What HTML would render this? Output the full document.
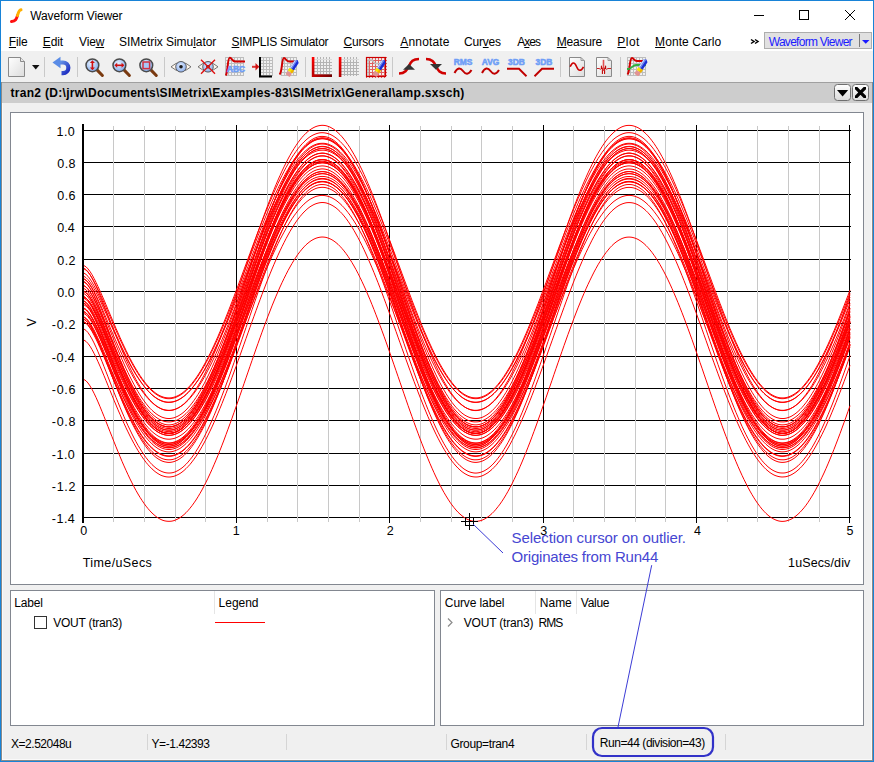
<!DOCTYPE html>
<html><head><meta charset="utf-8"><style>
html,body{margin:0;padding:0;}
body{width:874px;height:762px;position:relative;overflow:hidden;background:#f0f0f0;font-family:"Liberation Sans", sans-serif;color:#000;}
.abs{position:absolute;}
.t{position:absolute;white-space:pre;}
u{text-decoration:underline;text-underline-offset:1px;}
</style></head><body>
<div class="abs" style="left:0;top:0;width:874px;height:51px;background:#fff"></div>
<div class="abs" style="left:0;top:82px;width:874px;height:1px;background:#a0a0a0"></div>
<div class="abs" style="left:0;top:83px;width:874px;height:20px;background:#cdcdcd"></div>
<div class="abs" style="left:10px;top:112px;width:852px;height:471px;background:#fff;border:1px solid #828790"></div>
<div class="abs" style="left:10px;top:590px;width:423px;height:134px;background:#fff;border:1px solid #828790"></div>
<div class="abs" style="left:440px;top:590px;width:422px;height:134px;background:#fff;border:1px solid #828790"></div>
<svg class="abs" width="874" height="110" style="left:0;top:0"><defs>
<linearGradient id="gdoc" x1="0" y1="0" x2="1" y2="1"><stop offset="0" stop-color="#ffffff"/><stop offset="1" stop-color="#dcdcdc"/></linearGradient>
<linearGradient id="gundo" x1="0" y1="0" x2="1" y2="1"><stop offset="0" stop-color="#6a9ae8"/><stop offset="1" stop-color="#1a28c0"/></linearGradient>
<radialGradient id="giris" cx="0.45" cy="0.4" r="0.65"><stop offset="0" stop-color="#e4eeff"/><stop offset="1" stop-color="#86aaea"/></radialGradient>
<radialGradient id="glens" cx="0.4" cy="0.35" r="0.7"><stop offset="0" stop-color="#e8f2ff"/><stop offset="1" stop-color="#7ea8ea"/></radialGradient>
<linearGradient id="gbtn" x1="0" y1="0" x2="0" y2="1"><stop offset="0" stop-color="#ffffff"/><stop offset="1" stop-color="#dadada"/></linearGradient>
</defs><rect x="44" y="57" width="1" height="20" fill="#c9c9c9"/><rect x="77" y="57" width="1" height="20" fill="#c9c9c9"/><rect x="164" y="57" width="1" height="20" fill="#c9c9c9"/><rect x="305" y="57" width="1" height="20" fill="#c9c9c9"/><rect x="392" y="57" width="1" height="20" fill="#c9c9c9"/><rect x="560" y="57" width="1" height="20" fill="#c9c9c9"/><rect x="620" y="57" width="1" height="20" fill="#c9c9c9"/><path d="M8.5 57.5H20.5L24.5 61.5V76.5H8.5Z" fill="url(#gdoc)" stroke="#8a8a8a"/><path d="M20.5 57.5V61.5H24.5" fill="#e8e8e8" stroke="#8a8a8a"/><path d="M32 65H39.5L35.75 69.5Z" fill="#111"/><path d="M58.5 62.5H63A5.3 5.3 0 0 1 63 73.2H61.5" fill="none" stroke="url(#gundo)" stroke-width="4.2"/><path d="M52.5 62.5L60.5 56.8V68.2Z" fill="#5a8ce6"/><path d="M97.2 70.1L102.4 75.5" stroke="#7a3a10" stroke-width="3" stroke-linecap="round"/><circle cx="92.4" cy="65.3" r="6.4" fill="url(#glens)" stroke="#4a4a4a" stroke-width="1.5"/><path d="M92.4 62.3V68.3" stroke="#d01010" stroke-width="1.6"/><path d="M89.9 63.099999999999994L92.4 60.3L94.9 63.099999999999994Z M89.9 67.5L92.4 70.3L94.9 67.5Z" fill="#d01010"/><path d="M124.2 70.1L129.4 75.5" stroke="#7a3a10" stroke-width="3" stroke-linecap="round"/><circle cx="119.4" cy="65.3" r="6.4" fill="url(#glens)" stroke="#4a4a4a" stroke-width="1.5"/><path d="M116.4 65.3H122.4" stroke="#d01010" stroke-width="1.6"/><path d="M117.2 62.8L114.4 65.3L117.2 67.8Z M121.60000000000001 62.8L124.4 65.3L121.60000000000001 67.8Z" fill="#d01010"/><path d="M151.10000000000002 70.1L156.3 75.5" stroke="#7a3a10" stroke-width="3" stroke-linecap="round"/><circle cx="146.3" cy="65.3" r="6.4" fill="url(#glens)" stroke="#4a4a4a" stroke-width="1.5"/><rect x="143.0" y="62.0" width="6.6" height="6.6" fill="#a8c8f8" stroke="#d03040" stroke-width="1.5"/><path d="M171 66.8Q181 57.8 191 66.8Q181 75.8 171 66.8Z" fill="#fff6ec" stroke="#666" stroke-width="0.9"/><circle cx="181" cy="66.8" r="5.3" fill="url(#giris)" stroke="#505050" stroke-width="0.9"/><circle cx="181" cy="66.8" r="1.8" fill="#1a1a1a"/><path d="M198 66.8Q208 57.8 218 66.8Q208 75.8 198 66.8Z" fill="#fff6ec" stroke="#666" stroke-width="0.9"/><circle cx="208" cy="66.8" r="5.3" fill="url(#giris)" stroke="#505050" stroke-width="0.9"/><circle cx="208" cy="66.8" r="1.8" fill="#1a1a1a"/><path d="M201 59.8L215 73.8M215 59.8L201 73.8" stroke="#e01010" stroke-width="1.4"/><path d="M225.5 57V76M228.5 57V76M231.5 57V76M234.5 57V76M237.5 57V76M240.5 57V76M243.5 57V76M225 57.5H244M225 60.5H244M225 63.5H244M225 66.5H244M225 69.5H244M225 72.5H244M225 75.5H244" stroke="#bdbdbd" stroke-width="1" fill="none"/><path d="M225.8 75.5C228 72.5 227.3 58 229.8 57.8C231.8 57.6 232.2 61.5 235.2 61.5H245" fill="none" stroke="#d00000" stroke-width="2"/><text x="227" y="71.5" font-family="Liberation Sans" font-weight="bold" font-size="8.4" stroke="#6f9ef6" stroke-width="0.5" fill="#6f9ef6">ABC</text><path d="M260.5 57V76M263.5 57V76M266.5 57V76M269.5 57V76M272.5 57V76M260 57.5H273M260 60.5H273M260 63.5H273M260 66.5H273M260 69.5H273M260 72.5H273M260 75.5H273" stroke="#bdbdbd" stroke-width="1" fill="none"/><path d="M260 57V76.5H272" fill="none" stroke="#000" stroke-width="2"/><path d="M252 66.8H256" stroke="#d83030" stroke-width="2"/><path d="M255.5 63L259.3 66.8L255.5 70.6Z" fill="#d01010"/><path d="M281.5 57V76M284.5 57V76M287.5 57V76M290.5 57V76M293.5 57V76M296.5 57V76M281 57.5H297M281 60.5H297M281 63.5H297M281 66.5H297M281 69.5H297M281 72.5H297M281 75.5H297" stroke="#bdbdbd" stroke-width="1" fill="none"/><path d="M279.5 74.5C282.5 72 281.5 58 284 58C286 58 286 61.5 289 61.5H297" fill="none" stroke="#d00000" stroke-width="2"/><g transform="translate(292.2,68.5) rotate(-57)">
<path d="M-1 -2.4H8.2L10 0L8.2 2.4H-1Z" fill="#1c2fd6"/>
<path d="M-1 -2.4H8.2L9.2 -1H-1Z" fill="#c8d8ff"/>
<path d="M-1 -1H9.2L9.6 0H-1Z" fill="#7890f0"/>
<rect x="-4.2" y="-2.6" width="3.4" height="5.2" fill="#f6e800"/>
<rect x="-4.2" y="0.6" width="3.4" height="2" fill="#f0b000"/>
<rect x="-8.6" y="-2.6" width="4.4" height="5.2" rx="1" fill="#e09494"/>
</g><linearGradient id="gredh" x1="0" y1="0" x2="1" y2="0"><stop offset="0" stop-color="#cc0000"/><stop offset="1" stop-color="#700000"/></linearGradient><linearGradient id="gredv" x1="0" y1="0" x2="0" y2="1"><stop offset="0" stop-color="#ff0000"/><stop offset="1" stop-color="#b00000"/></linearGradient><path d="M317.5 57V76M320.5 57V76M323.5 57V76M326.5 57V76M329.5 57V76M314 62.5H332M314 65.5H332M314 68.5H332M314 71.5H332M314 74.5H332" stroke="#b4b4b4" stroke-width="1" fill="none"/><path d="M314 59.5H332" stroke="#dcdcdc" stroke-width="1" fill="none"/><rect x="311.8" y="57" width="2.6" height="20" fill="url(#gredv)"/><path d="M344.5 57V76M347.5 57V76M350.5 57V76M353.5 57V76M356.5 57V76M341 62.5H359M341 65.5H359M341 68.5H359M341 71.5H359M341 74.5H359" stroke="#b4b4b4" stroke-width="1" fill="none"/><path d="M341 59.5H359" stroke="#dcdcdc" stroke-width="1" fill="none"/><rect x="338.8" y="57" width="2.6" height="20" fill="url(#gredv)"/><rect x="312" y="74.4" width="20" height="2.6" fill="url(#gredh)"/><path d="M366.5 57V78M369.5 57V78M372.5 57V78M375.5 57V78M378.5 57V78M381.5 57V78M384.5 57V78M366 57.5H387M366 60.5H387M366 63.5H387M366 66.5H387M366 69.5H387M366 72.5H387M366 75.5H387" stroke="#e06060" stroke-width="1" fill="none"/><rect x="366.5" y="57.5" width="19" height="19" fill="none" stroke="#cc0000" stroke-width="1.2"/><path d="M368 76V60H372L375 63.5H384" fill="none" stroke="#c0c0c0" stroke-width="1.5"/><g transform="translate(379.2,68.5) rotate(-57)">
<path d="M-1 -2.4H8.2L10 0L8.2 2.4H-1Z" fill="#1c2fd6"/>
<path d="M-1 -2.4H8.2L9.2 -1H-1Z" fill="#c8d8ff"/>
<path d="M-1 -1H9.2L9.6 0H-1Z" fill="#7890f0"/>
<rect x="-4.2" y="-2.6" width="3.4" height="5.2" fill="#f6e800"/>
<rect x="-4.2" y="0.6" width="3.4" height="2" fill="#f0b000"/>
<rect x="-8.6" y="-2.6" width="4.4" height="5.2" rx="1" fill="#e09494"/>
</g><path d="M399 73.5C405 73.5 407 70 409 66C411 61.5 413 59 419 59" fill="none" stroke="#d00000" stroke-width="2.6"/><path d="M403 69.8L409 64L415 69.8Z" fill="#333"/><path d="M426 59C432 59 434 62 436 66C438 70.5 440 73.5 446 73.5" fill="none" stroke="#d00000" stroke-width="2.6"/><path d="M430 64H442L436 69.8Z" fill="#333"/><text x="463.0" y="64.6" text-anchor="middle" font-family="Liberation Sans" font-weight="bold" font-size="8.4" letter-spacing="0" stroke="#6f9ef6" stroke-width="0.55" fill="#6f9ef6">RMS</text><path d="M454.5 73C457.5 67 460.5 67.5 463.0 71C465.5 74.5 468.5 75 471.5 70" fill="none" stroke="#c00000" stroke-width="2"/><text x="490.5" y="64.6" text-anchor="middle" font-family="Liberation Sans" font-weight="bold" font-size="8.4" letter-spacing="0" stroke="#6f9ef6" stroke-width="0.55" fill="#6f9ef6">AVG</text><path d="M482 73C485 67 488 67.5 490.5 71C493 74.5 496 75 499 70" fill="none" stroke="#c00000" stroke-width="2"/><text x="516.5" y="64.6" text-anchor="middle" font-family="Liberation Sans" font-weight="bold" font-size="8.4" letter-spacing="0" stroke="#6f9ef6" stroke-width="0.55" fill="#6f9ef6">3DB</text><path d="M507 68.8H519L526.5 76.2" fill="none" stroke="#c00000" stroke-width="1.9"/><text x="544" y="64.6" text-anchor="middle" font-family="Liberation Sans" font-weight="bold" font-size="8.4" letter-spacing="0" stroke="#6f9ef6" stroke-width="0.55" fill="#6f9ef6">3DB</text><path d="M534.5 76.2L542 68.8H554" fill="none" stroke="#c00000" stroke-width="1.9"/><path d="M569.5 57.5H581L584.5 61V76.5H569.5Z" fill="url(#gdoc)" stroke="#8a8a8a"/><path d="M581 57.5V60.5H584.5" fill="none" stroke="#9a9a9a" stroke-width="1"/><path d="M570.2 66.8C572 62 574.5 61.5 576.5 66.5C578.5 71.5 581 71.5 583.5 66.8" fill="none" stroke="#cc0000" stroke-width="1.6"/><path d="M596.5 57.5H608L611.5 61V76.5H596.5Z" fill="url(#gdoc)" stroke="#8a8a8a"/><path d="M608 57.5V60.5H611.5" fill="none" stroke="#9a9a9a" stroke-width="1"/><path d="M597 68.5H599.5Q600.3 70.5 601 68.5M606 68.5Q606.7 70.5 607.5 68.5H611" fill="none" stroke="#cc2020" stroke-width="1"/><path d="M601.4 68.5V66M605.6 68.5V66M602.4 68V73.5M604.6 68V73.5" fill="none" stroke="#c00000" stroke-width="1.1" stroke-linecap="round"/><path d="M603.5 59.8V71" fill="none" stroke="#e05050" stroke-width="1.6"/><path d="M627.5 57V76M630.5 57V76M633.5 57V76M636.5 57V76M639.5 57V76M642.5 57V76M645.5 57V76M627 57.5H646M627 60.5H646M627 63.5H646M627 66.5H646M627 69.5H646M627 72.5H646M627 75.5H646" stroke="#bdbdbd" stroke-width="1" fill="none"/><path d="M627.5 74.5C630 71 629.5 58 632 58C634 58 634 61 637 61H646" fill="none" stroke="#d00000" stroke-width="2"/><path d="M627 69H628.5C631.5 69 632.5 65 636 65H646" fill="none" stroke="#30b040" stroke-width="1.8"/><g transform="translate(641,67.8) rotate(-57)">
<path d="M-1 -2.4H8.2L10 0L8.2 2.4H-1Z" fill="#1c2fd6"/>
<path d="M-1 -2.4H8.2L9.2 -1H-1Z" fill="#c8d8ff"/>
<path d="M-1 -1H9.2L9.6 0H-1Z" fill="#7890f0"/>
<rect x="-4.2" y="-2.6" width="3.4" height="5.2" fill="#f6e800"/>
<rect x="-4.2" y="0.6" width="3.4" height="2" fill="#f0b000"/>
<rect x="-8.6" y="-2.6" width="4.4" height="5.2" rx="1" fill="#e09494"/>
</g><path d="M11.5 21.5C16 21 16.5 18.5 17.5 15.5" fill="none" stroke="#ff1010" stroke-width="3" stroke-linecap="round"/><path d="M17.5 15.5C18.5 12 19 10 21 9.8" fill="none" stroke="#ffb000" stroke-width="3" stroke-linecap="round"/><rect x="754" y="15" width="10" height="1" fill="#000"/><rect x="799.5" y="10.5" width="9" height="9" fill="none" stroke="#000" stroke-width="1"/><path d="M845 10L855 20M855 10L845 20" stroke="#000" stroke-width="1"/><path d="M751 39.5L754 41.5L751 43.5M755 39.5L758 41.5L755 43.5" fill="none" stroke="#000" stroke-width="1.5"/><rect x="764.5" y="32.5" width="107" height="16" fill="#e1e1e1" stroke="#adadad"/><rect x="859" y="34" width="1" height="13" fill="#7a7a7a"/><path d="M862 40H869.5L865.75 43.8Z" fill="#1a1aff"/><rect x="834.5" y="84.5" width="16" height="16" rx="3" fill="url(#gbtn)" stroke="#6f6f6f"/><path d="M837 90H848.2L842.6 96.6Z" fill="#000"/><rect x="852.5" y="84.5" width="16" height="16" rx="3" fill="url(#gbtn)" stroke="#6f6f6f"/><clipPath id="cx"><rect x="855" y="87" width="11" height="11"/></clipPath><path clip-path="url(#cx)" d="M854 86L867 99M867 86L854 99" stroke="#000" stroke-width="3.3"/></svg>

<div class="abs" style="left:214px;top:591px;width:1px;height:23px;background:#e5e5e5"></div>
<div class="abs" style="left:215px;top:622px;width:50px;height:1px;background:#ff0000"></div>
<div class="abs" style="left:34px;top:616px;width:11px;height:11px;border:1px solid #333;background:#fff"></div>
<div class="abs" style="left:535px;top:591px;width:1px;height:23px;background:#e5e5e5"></div>
<div class="abs" style="left:576px;top:591px;width:1px;height:23px;background:#e5e5e5"></div>
<svg class="abs" width="10" height="12" style="left:446px;top:617px"><path d="M2 1.5L6 5.5L2 9.5" fill="none" stroke="#8a8a8a" stroke-width="1.2"/></svg>
<div class="abs" style="left:147px;top:734px;width:1px;height:16px;background:#d5d5d5"></div><div class="abs" style="left:286px;top:734px;width:1px;height:16px;background:#d5d5d5"></div><div class="abs" style="left:446px;top:734px;width:1px;height:16px;background:#d5d5d5"></div><div class="abs" style="left:586px;top:734px;width:1px;height:16px;background:#d5d5d5"></div><div class="abs" style="left:725px;top:734px;width:1px;height:16px;background:#d5d5d5"></div>
<svg class="abs" width="874" height="762" viewBox="0 0 874 762" style="left:0;top:0">
<rect x="84" y="130" width="767" height="1" fill="#000"/><rect x="84" y="162" width="767" height="1" fill="#000"/><rect x="84" y="194" width="767" height="1" fill="#000"/><rect x="84" y="226" width="767" height="1" fill="#000"/><rect x="84" y="259" width="767" height="1" fill="#000"/><rect x="84" y="291" width="767" height="1" fill="#000"/><rect x="84" y="323" width="767" height="1" fill="#000"/><rect x="84" y="356" width="767" height="1" fill="#000"/><rect x="84" y="388" width="767" height="1" fill="#000"/><rect x="84" y="420" width="767" height="1" fill="#000"/><rect x="84" y="453" width="767" height="1" fill="#000"/><rect x="84" y="485" width="767" height="1" fill="#000"/><rect x="84" y="517" width="767" height="1" fill="#000"/><rect x="113" y="126" width="1" height="396" fill="#c8c8c8"/><rect x="144" y="126" width="1" height="396" fill="#c8c8c8"/><rect x="175" y="126" width="1" height="396" fill="#c8c8c8"/><rect x="205" y="126" width="1" height="396" fill="#c8c8c8"/><rect x="267" y="126" width="1" height="396" fill="#c8c8c8"/><rect x="297" y="126" width="1" height="396" fill="#c8c8c8"/><rect x="328" y="126" width="1" height="396" fill="#c8c8c8"/><rect x="359" y="126" width="1" height="396" fill="#c8c8c8"/><rect x="420" y="126" width="1" height="396" fill="#c8c8c8"/><rect x="451" y="126" width="1" height="396" fill="#c8c8c8"/><rect x="481" y="126" width="1" height="396" fill="#c8c8c8"/><rect x="512" y="126" width="1" height="396" fill="#c8c8c8"/><rect x="573" y="126" width="1" height="396" fill="#c8c8c8"/><rect x="604" y="126" width="1" height="396" fill="#c8c8c8"/><rect x="635" y="126" width="1" height="396" fill="#c8c8c8"/><rect x="665" y="126" width="1" height="396" fill="#c8c8c8"/><rect x="727" y="126" width="1" height="396" fill="#c8c8c8"/><rect x="757" y="126" width="1" height="396" fill="#c8c8c8"/><rect x="788" y="126" width="1" height="396" fill="#c8c8c8"/><rect x="819" y="126" width="1" height="396" fill="#c8c8c8"/><rect x="236" y="125" width="1" height="398" fill="#000"/><rect x="389" y="125" width="1" height="398" fill="#000"/><rect x="543" y="125" width="1" height="398" fill="#000"/><rect x="696" y="125" width="1" height="398" fill="#000"/><rect x="849" y="125" width="1" height="398" fill="#000"/>
<rect x="82" y="124" width="2" height="399" fill="#000"/>
<g fill="none" stroke="#ff0000" stroke-width="1"><path d="M84,265.6 86,266.8 88,268.9 90,271.5 92,274.7 94,278.3 96,282.3 98,286.5 100,290.9 102,295.4 104,300.0 106,304.7 108,309.5 110,314.2 112,319.0 114,323.7 116,328.4 118,332.9 120,337.4 122,341.9 124,346.1 126,350.3 128,354.4 130,358.3 132,362.1 134,365.7 136,369.1 138,372.4 140,375.5 142,378.4 144,381.1 146,383.7 148,386.0 150,388.2 152,390.1 154,391.8 156,393.4 158,394.7 160,395.8 162,396.6 164,397.3 166,397.7 168,397.9 170,397.9 172,397.7 174,397.2 176,396.5 178,395.6 180,394.5 182,393.2 184,391.6 186,389.8 188,387.9 190,385.7 192,383.3 194,380.7 196,378.0 198,375.0 200,371.9 202,368.5 204,365.0 206,361.4 208,357.6 210,353.6 212,349.5 214,345.2 216,340.8 218,336.3 220,331.6 222,326.8 224,322.0 226,317.0 228,312.0 230,306.9 232,301.7 234,296.4 236,291.1 238,285.8 240,280.4 242,275.0 244,269.5 246,264.1 248,258.7 250,253.3 252,247.9 254,242.5 256,237.2 258,231.9 260,226.7 262,221.5 264,216.4 266,211.4 268,206.5 270,201.7 272,197.0 274,192.4 276,187.9 278,183.5 280,179.3 282,175.3 284,171.4 286,167.6 288,164.0 290,160.6 292,157.3 294,154.3 296,151.4 298,148.7 300,146.2 302,143.9 304,141.9 306,140.0 308,138.3 310,136.8 312,135.6 314,134.6 316,133.8 318,133.2 320,132.8 322,132.7 324,132.8 326,133.1 328,133.6 330,134.3 332,135.3 334,136.5 336,137.9 338,139.5 340,141.3 342,143.4 344,145.6 346,148.0 348,150.7 350,153.5 352,156.5 354,159.7 356,163.1 358,166.6 360,170.4 362,174.2 364,178.2 366,182.4 368,186.7 370,191.2 372,195.7 374,200.4 376,205.2 378,210.1 380,215.1 382,220.1 384,225.3 386,230.5 388,235.8 390,241.1 392,246.5 394,251.8 396,257.3 398,262.7 400,268.1 402,273.5 404,279.0 406,284.3 408,289.7 410,295.0 412,300.3 414,305.5 416,310.6 418,315.7 420,320.7 422,325.6 424,330.4 426,335.0 428,339.6 430,344.0 432,348.3 434,352.5 436,356.5 438,360.4 440,364.1 442,367.6 444,371.0 446,374.2 448,377.2 450,380.0 452,382.7 454,385.1 456,387.3 458,389.3 460,391.2 462,392.8 464,394.2 466,395.3 468,396.3 470,397.0 472,397.6 474,397.8 476,397.9 478,397.8 480,397.4 482,396.8 484,396.0 486,395.0 488,393.7 490,392.2 492,390.6 494,388.7 496,386.6 498,384.3 500,381.8 502,379.1 504,376.2 506,373.1 508,369.9 510,366.5 512,362.9 514,359.1 516,355.2 518,351.1 520,346.9 522,342.6 524,338.1 526,333.5 528,328.8 530,323.9 532,319.0 534,314.0 536,308.9 538,303.8 540,298.5 542,293.2 544,287.9 546,282.5 548,277.1 550,271.7 552,266.3 554,260.9 556,255.4 558,250.0 560,244.6 562,239.3 564,234.0 566,228.7 568,223.6 570,218.4 572,213.4 574,208.4 576,203.6 578,198.8 580,194.2 582,189.7 584,185.3 586,181.0 588,176.9 590,172.9 592,169.1 594,165.4 596,161.9 598,158.6 600,155.5 602,152.5 604,149.8 606,147.2 608,144.8 610,142.7 612,140.7 614,138.9 616,137.4 618,136.1 620,135.0 622,134.1 624,133.4 626,132.9 628,132.7 630,132.7 632,132.9 634,133.4 636,134.0 638,134.9 640,136.0 642,137.3 644,138.8 646,140.6 648,142.5 650,144.7 652,147.0 654,149.6 656,152.4 658,155.3 660,158.4 662,161.7 664,165.2 666,168.8 668,172.7 670,176.6 672,180.7 674,185.0 676,189.4 678,193.9 680,198.5 682,203.3 684,208.1 686,213.1 688,218.1 690,223.2 692,228.4 694,233.7 696,239.0 698,244.3 700,249.7 702,255.1 704,260.5 706,265.9 708,271.4 710,276.8 712,282.2 714,287.6 716,292.9 718,298.2 720,303.4 722,308.6 724,313.7 726,318.7 728,323.6 730,328.5 732,333.2 734,337.8 736,342.3 738,346.6 740,350.9 742,354.9 744,358.9 746,362.6 748,366.2 750,369.7 752,372.9 754,376.0 756,378.9 758,381.6 760,384.1 762,386.4 764,388.6 766,390.5 768,392.1 770,393.6 772,394.9 774,395.9 776,396.8 778,397.4 780,397.8 782,397.9 784,397.9 786,397.6 788,397.1 790,396.3 792,395.4 794,394.2 796,392.9 798,391.3 800,389.5 802,387.5 804,385.2 806,382.8 808,380.2 810,377.4 812,374.4 814,371.2 816,367.9 818,364.3 820,360.6 822,356.8 824,352.8 826,348.6 828,344.3 830,339.9 832,335.3 834,330.7 836,325.9 838,321.0 840,316.0 842,311.0 844,305.8 846,300.6 848,295.4 850,290.0"/><path d="M84,268.3 86,269.6 88,271.8 90,274.7 92,278.1 94,282.0 96,286.2 98,290.7 100,295.4 102,300.3 104,305.3 106,310.4 108,315.5 110,320.6 112,325.7 114,330.7 116,335.7 118,340.7 120,345.5 122,350.3 124,354.9 126,359.4 128,363.7 130,367.9 132,372.0 134,375.9 136,379.6 138,383.1 140,386.4 142,389.6 144,392.5 146,395.3 148,397.8 150,400.1 152,402.2 154,404.0 156,405.7 158,407.1 160,408.2 162,409.2 164,409.9 166,410.3 168,410.5 170,410.5 172,410.3 174,409.8 176,409.0 178,408.1 180,406.9 182,405.4 184,403.8 186,401.9 188,399.7 190,397.4 192,394.8 194,392.1 196,389.1 198,385.9 200,382.5 202,379.0 204,375.2 206,371.3 208,367.2 210,362.9 212,358.4 214,353.8 216,349.1 218,344.2 220,339.2 222,334.1 224,328.9 226,323.6 228,318.1 230,312.6 232,307.1 234,301.4 236,295.7 238,290.0 240,284.2 242,278.3 244,272.5 246,266.7 248,260.8 250,255.0 252,249.2 254,243.4 256,237.7 258,232.0 260,226.4 262,220.8 264,215.4 266,210.0 268,204.7 270,199.5 272,194.5 274,189.5 276,184.7 278,180.0 280,175.5 282,171.1 284,166.9 286,162.9 288,159.0 290,155.3 292,151.9 294,148.6 296,145.5 298,142.6 300,139.9 302,137.4 304,135.2 306,133.2 308,131.4 310,129.8 312,128.5 314,127.4 316,126.5 318,125.9 320,125.5 322,125.3 324,125.4 326,125.7 328,126.3 330,127.1 332,128.2 334,129.4 336,130.9 338,132.7 340,134.6 342,136.8 344,139.2 346,141.9 348,144.7 350,147.7 352,151.0 354,154.4 356,158.0 358,161.9 360,165.8 362,170.0 364,174.3 366,178.8 368,183.4 370,188.2 372,193.1 374,198.2 376,203.3 378,208.6 380,213.9 382,219.4 384,224.9 386,230.5 388,236.2 390,241.9 392,247.7 394,253.5 396,259.3 398,265.1 400,271.0 402,276.8 404,282.6 406,288.4 408,294.2 410,299.9 412,305.6 414,311.2 416,316.7 418,322.1 420,327.5 422,332.8 424,337.9 426,342.9 428,347.8 430,352.6 432,357.2 434,361.7 436,366.0 438,370.2 440,374.2 442,378.0 444,381.6 446,385.0 448,388.3 450,391.3 452,394.1 454,396.8 456,399.2 458,401.3 460,403.3 462,405.0 464,406.5 466,407.8 468,408.8 470,409.6 472,410.2 474,410.5 476,410.6 478,410.4 480,410.0 482,409.4 484,408.5 486,407.4 488,406.0 490,404.5 492,402.7 494,400.6 496,398.4 498,395.9 500,393.2 502,390.3 504,387.2 506,383.9 508,380.4 510,376.7 512,372.9 514,368.8 516,364.6 518,360.2 520,355.7 522,351.0 524,346.2 526,341.3 528,336.2 530,331.0 532,325.7 534,320.3 536,314.9 538,309.3 540,303.7 542,298.0 544,292.3 546,286.5 548,280.7 550,274.8 552,269.0 554,263.2 556,257.3 558,251.5 560,245.7 562,240.0 564,234.3 566,228.6 568,223.1 570,217.5 572,212.1 574,206.8 576,201.6 578,196.5 580,191.5 582,186.6 584,181.9 586,177.3 588,172.9 590,168.6 592,164.5 594,160.5 596,156.8 598,153.2 600,149.9 602,146.7 604,143.7 606,140.9 608,138.4 610,136.1 612,134.0 614,132.1 616,130.4 618,129.0 620,127.8 622,126.8 624,126.1 626,125.6 628,125.4 630,125.4 632,125.6 634,126.1 636,126.8 638,127.7 640,128.9 642,130.3 644,132.0 646,133.8 648,135.9 650,138.2 652,140.8 654,143.5 656,146.5 658,149.6 660,153.0 662,156.6 664,160.3 666,164.2 668,168.3 670,172.6 672,177.0 674,181.6 676,186.3 678,191.2 680,196.1 682,201.2 684,206.5 686,211.8 688,217.2 690,222.7 692,228.3 694,233.9 696,239.6 698,245.4 700,251.1 702,257.0 704,262.8 706,268.6 708,274.5 710,280.3 712,286.1 714,291.9 716,297.6 718,303.3 720,308.9 722,314.5 724,320.0 726,325.4 728,330.7 730,335.9 732,340.9 734,345.9 736,350.7 738,355.4 740,359.9 742,364.3 744,368.6 746,372.6 748,376.5 750,380.2 752,383.7 754,387.0 756,390.1 758,393.0 760,395.7 762,398.2 764,400.5 766,402.5 768,404.3 770,405.9 772,407.3 774,408.4 776,409.3 778,410.0 780,410.4 782,410.6 784,410.5 786,410.2 788,409.6 790,408.9 792,407.8 794,406.6 796,405.1 798,403.4 800,401.5 802,399.3 804,396.9 806,394.3 808,391.5 810,388.5 812,385.3 814,381.8 816,378.2 818,374.4 820,370.5 822,366.3 824,362.0 826,357.5 828,352.9 830,348.2 832,343.3 834,338.2 836,333.1 838,327.8 840,322.5 842,317.1 844,311.5 846,305.9 848,300.3 850,294.6"/><path d="M84,268.9 86,270.1 88,272.1 90,274.7 92,277.9 94,281.4 96,285.3 98,289.4 100,293.7 102,298.1 104,302.7 106,307.3 108,312.0 110,316.6 112,321.3 114,325.9 116,330.5 118,334.9 120,339.4 122,343.7 124,347.9 126,352.0 128,356.0 130,359.8 132,363.5 134,367.0 136,370.4 138,373.6 140,376.7 142,379.5 144,382.2 146,384.7 148,387.0 150,389.1 152,391.0 154,392.7 156,394.2 158,395.5 160,396.6 162,397.4 164,398.0 166,398.5 168,398.7 170,398.7 172,398.4 174,398.0 176,397.3 178,396.4 180,395.3 182,394.0 184,392.5 186,390.8 188,388.8 190,386.7 192,384.4 194,381.8 196,379.1 198,376.2 200,373.1 202,369.9 204,366.4 206,362.8 208,359.1 210,355.2 212,351.1 214,347.0 216,342.6 218,338.2 220,333.6 222,329.0 224,324.2 226,319.3 228,314.4 230,309.4 232,304.3 234,299.1 236,293.9 238,288.7 240,283.4 242,278.1 244,272.8 246,267.5 248,262.1 250,256.8 252,251.5 254,246.3 256,241.0 258,235.8 260,230.7 262,225.7 264,220.7 266,215.8 268,210.9 270,206.2 272,201.6 274,197.1 276,192.7 278,188.4 280,184.3 282,180.3 284,176.5 286,172.8 288,169.3 290,165.9 292,162.7 294,159.7 296,156.9 298,154.3 300,151.8 302,149.6 304,147.5 306,145.7 308,144.1 310,142.6 312,141.4 314,140.4 316,139.6 318,139.0 320,138.7 322,138.5 324,138.6 326,138.9 328,139.4 330,140.2 332,141.1 334,142.3 336,143.7 338,145.2 340,147.0 342,149.0 344,151.2 346,153.6 348,156.2 350,159.0 352,161.9 354,165.1 356,168.4 358,171.9 360,175.5 362,179.3 364,183.2 366,187.3 368,191.6 370,195.9 372,200.4 374,205.0 376,209.7 378,214.5 380,219.4 382,224.3 384,229.4 386,234.5 388,239.7 390,244.9 392,250.1 394,255.4 396,260.7 398,266.0 400,271.4 402,276.7 404,282.0 406,287.3 408,292.5 410,297.8 412,302.9 414,308.0 416,313.1 418,318.0 420,322.9 422,327.7 424,332.4 426,337.0 428,341.5 430,345.8 432,350.1 434,354.1 436,358.1 438,361.9 440,365.5 442,369.0 444,372.3 446,375.4 448,378.4 450,381.1 452,383.7 454,386.1 456,388.3 458,390.3 460,392.0 462,393.6 464,395.0 466,396.1 468,397.1 470,397.8 472,398.3 474,398.6 476,398.7 478,398.5 480,398.2 482,397.6 484,396.8 486,395.8 488,394.6 490,393.1 492,391.5 494,389.6 496,387.6 498,385.3 500,382.9 502,380.2 504,377.4 506,374.4 508,371.2 510,367.8 512,364.3 514,360.6 516,356.8 518,352.8 520,348.7 522,344.4 524,340.0 526,335.5 528,330.9 530,326.1 532,321.3 534,316.4 536,311.4 538,306.3 540,301.2 542,296.0 544,290.8 546,285.5 548,280.2 550,274.9 552,269.6 554,264.3 556,258.9 558,253.6 560,248.4 562,243.1 564,237.9 566,232.8 568,227.7 570,222.7 572,217.7 574,212.8 576,208.1 578,203.4 580,198.9 582,194.4 584,190.1 586,185.9 588,181.9 590,178.0 592,174.3 594,170.7 596,167.2 598,164.0 600,160.9 602,158.0 604,155.3 606,152.8 608,150.5 610,148.3 612,146.4 614,144.7 616,143.2 618,141.9 620,140.8 622,139.9 624,139.2 626,138.8 628,138.6 630,138.6 632,138.8 634,139.2 636,139.9 638,140.7 640,141.8 642,143.1 644,144.6 646,146.3 648,148.2 650,150.3 652,152.6 654,155.1 656,157.8 658,160.7 660,163.8 662,167.0 664,170.4 666,174.0 668,177.8 670,181.6 672,185.7 674,189.8 676,194.1 678,198.6 680,203.1 682,207.8 684,212.5 686,217.4 688,222.3 690,227.3 692,232.4 694,237.6 696,242.8 698,248.0 700,253.3 702,258.6 704,263.9 706,269.2 708,274.6 710,279.9 712,285.2 714,290.4 716,295.7 718,300.9 720,306.0 722,311.1 724,316.1 726,321.0 728,325.8 730,330.6 732,335.2 734,339.7 736,344.1 738,348.4 740,352.5 742,356.5 744,360.4 746,364.1 748,367.6 750,371.0 752,374.2 754,377.2 756,380.0 758,382.7 760,385.2 762,387.4 764,389.5 766,391.4 768,393.0 770,394.5 772,395.7 774,396.7 776,397.5 778,398.1 780,398.5 782,398.7 784,398.6 786,398.3 788,397.8 790,397.1 792,396.2 794,395.1 796,393.7 798,392.2 800,390.4 802,388.4 804,386.2 806,383.9 808,381.3 810,378.5 812,375.6 814,372.5 816,369.2 818,365.7 820,362.1 822,358.3 824,354.4 826,350.3 828,346.1 830,341.8 832,337.3 834,332.7 836,328.0 838,323.2 840,318.4 842,313.4 844,308.4 846,303.3 848,298.1 850,292.9"/><path d="M84,273.1 86,274.4 88,276.3 90,279.0 92,282.1 94,285.6 96,289.4 98,293.5 100,297.8 102,302.3 104,306.8 106,311.4 108,316.0 110,320.7 112,325.3 114,329.9 116,334.5 118,338.9 120,343.3 122,347.7 124,351.9 126,355.9 128,359.9 130,363.7 132,367.4 134,370.9 136,374.3 138,377.5 140,380.5 142,383.4 144,386.1 146,388.5 148,390.8 150,392.9 152,394.8 154,396.5 156,398.0 158,399.3 160,400.3 162,401.2 164,401.8 166,402.2 168,402.4 170,402.4 172,402.2 174,401.7 176,401.1 178,400.2 180,399.1 182,397.8 184,396.3 186,394.6 188,392.6 190,390.5 192,388.2 194,385.7 196,382.9 198,380.1 200,377.0 202,373.7 204,370.3 206,366.7 208,363.0 210,359.1 212,355.1 214,350.9 216,346.6 218,342.2 220,337.6 222,333.0 224,328.2 226,323.4 228,318.5 230,313.5 232,308.4 234,303.3 236,298.1 238,292.8 240,287.6 242,282.3 244,277.0 246,271.7 248,266.4 250,261.1 252,255.8 254,250.6 256,245.4 258,240.2 260,235.1 262,230.0 264,225.1 266,220.2 268,215.4 270,210.7 272,206.1 274,201.6 276,197.2 278,193.0 280,188.8 282,184.9 284,181.1 286,177.4 288,173.9 290,170.5 292,167.4 294,164.4 296,161.6 298,158.9 300,156.5 302,154.3 304,152.2 306,150.4 308,148.7 310,147.3 312,146.1 314,145.1 316,144.3 318,143.7 320,143.4 322,143.3 324,143.3 326,143.6 328,144.1 330,144.9 332,145.8 334,147.0 336,148.3 338,149.9 340,151.7 342,153.7 344,155.9 346,158.3 348,160.8 350,163.6 352,166.6 354,169.7 356,173.0 358,176.4 360,180.1 362,183.9 364,187.8 366,191.9 368,196.1 370,200.4 372,204.9 374,209.4 376,214.1 378,218.9 380,223.8 382,228.7 384,233.8 386,238.8 388,244.0 390,249.2 392,254.4 394,259.7 396,265.0 398,270.3 400,275.6 402,280.9 404,286.2 406,291.5 408,296.7 410,301.9 412,307.0 414,312.1 416,317.2 418,322.1 420,327.0 422,331.8 424,336.4 426,341.0 428,345.5 430,349.8 432,354.0 434,358.1 436,362.0 438,365.8 440,369.4 442,372.9 444,376.1 446,379.3 448,382.2 450,385.0 452,387.5 454,389.9 456,392.1 458,394.1 460,395.8 462,397.4 464,398.8 466,399.9 468,400.9 470,401.6 472,402.1 474,402.4 476,402.4 478,402.3 480,401.9 482,401.4 484,400.6 486,399.6 488,398.3 490,396.9 492,395.3 494,393.4 496,391.4 498,389.1 500,386.7 502,384.1 504,381.2 506,378.2 508,375.1 510,371.7 512,368.2 514,364.5 516,360.7 518,356.7 520,352.6 522,348.3 524,344.0 526,339.5 528,334.9 530,330.2 532,325.3 534,320.5 536,315.5 538,310.4 540,305.3 542,300.2 544,294.9 546,289.7 548,284.4 550,279.1 552,273.8 554,268.5 556,263.2 558,257.9 560,252.7 562,247.4 564,242.3 566,237.1 568,232.1 570,227.1 572,222.1 574,217.3 576,212.5 578,207.9 580,203.4 582,198.9 584,194.6 586,190.5 588,186.4 590,182.6 592,178.8 594,175.3 596,171.8 598,168.6 600,165.5 602,162.7 604,160.0 606,157.4 608,155.1 610,153.0 612,151.1 614,149.4 616,147.9 618,146.6 620,145.5 622,144.6 624,144.0 626,143.5 628,143.3 630,143.3 632,143.5 634,143.9 636,144.6 638,145.4 640,146.5 642,147.8 644,149.3 646,151.0 648,152.9 650,155.0 652,157.3 654,159.8 656,162.5 658,165.4 660,168.4 662,171.6 664,175.0 666,178.6 668,182.3 670,186.2 672,190.2 674,194.4 676,198.7 678,203.1 680,207.6 682,212.2 684,217.0 686,221.8 688,226.7 690,231.7 692,236.8 694,241.9 696,247.1 698,252.3 700,257.6 702,262.9 704,268.2 706,273.5 708,278.8 710,284.1 712,289.4 714,294.6 716,299.8 718,305.0 720,310.1 722,315.2 724,320.1 726,325.0 728,329.9 730,334.6 732,339.2 734,343.7 736,348.1 738,352.3 740,356.5 742,360.4 744,364.3 746,368.0 748,371.5 750,374.8 752,378.0 754,381.0 756,383.9 758,386.5 760,389.0 762,391.2 764,393.3 766,395.2 768,396.8 770,398.3 772,399.5 774,400.5 776,401.3 778,401.9 780,402.3 782,402.4 784,402.4 786,402.1 788,401.6 790,400.9 792,400.0 794,398.9 796,397.5 798,395.9 800,394.2 802,392.2 804,390.0 806,387.7 808,385.1 810,382.4 812,379.5 814,376.3 816,373.1 818,369.6 820,366.0 822,362.2 824,358.3 826,354.3 828,350.1 830,345.7 832,341.3 834,336.7 836,332.1 838,327.3 840,322.4 842,317.5 844,312.5 846,307.4 848,302.2 850,297.0"/><path d="M84,276.4 86,277.6 88,279.6 90,282.1 92,285.1 94,288.6 96,292.3 98,296.3 100,300.4 102,304.8 104,309.2 106,313.6 108,318.1 110,322.7 112,327.2 114,331.6 116,336.1 118,340.4 120,344.7 122,348.9 124,353.0 126,356.9 128,360.8 130,364.5 132,368.1 134,371.5 136,374.8 138,377.9 140,380.9 142,383.6 144,386.2 146,388.6 148,390.9 150,392.9 152,394.8 154,396.4 156,397.8 158,399.1 160,400.1 162,400.9 164,401.6 166,402.0 168,402.2 170,402.1 172,401.9 174,401.5 176,400.8 178,400.0 180,398.9 182,397.6 184,396.2 186,394.5 188,392.6 190,390.5 192,388.3 194,385.8 196,383.2 198,380.4 200,377.4 202,374.3 204,370.9 206,367.5 208,363.8 210,360.0 212,356.1 214,352.1 216,347.9 218,343.6 220,339.2 222,334.6 224,330.0 226,325.3 228,320.5 230,315.7 232,310.7 234,305.7 236,300.7 238,295.6 240,290.5 242,285.4 244,280.2 246,275.0 248,269.9 250,264.7 252,259.6 254,254.5 256,249.4 258,244.4 260,239.4 262,234.5 264,229.7 266,225.0 268,220.3 270,215.7 272,211.2 274,206.9 276,202.6 278,198.5 280,194.5 282,190.6 284,186.9 286,183.3 288,179.9 290,176.7 292,173.6 294,170.7 296,167.9 298,165.4 300,163.0 302,160.8 304,158.9 306,157.1 308,155.5 310,154.1 312,152.9 314,152.0 316,151.2 318,150.6 320,150.3 322,150.2 324,150.2 326,150.5 328,151.0 330,151.7 332,152.6 334,153.8 336,155.1 338,156.6 340,158.4 342,160.3 344,162.4 346,164.7 348,167.3 350,169.9 352,172.8 354,175.8 356,179.1 358,182.4 360,185.9 362,189.6 364,193.4 366,197.4 368,201.5 370,205.7 372,210.1 374,214.5 376,219.1 378,223.7 380,228.4 382,233.3 384,238.1 386,243.1 388,248.1 390,253.2 392,258.3 394,263.4 396,268.5 398,273.7 400,278.8 402,284.0 404,289.1 406,294.3 408,299.3 410,304.4 412,309.4 414,314.4 416,319.2 418,324.1 420,328.8 422,333.4 424,338.0 426,342.4 428,346.8 430,351.0 432,355.1 434,359.0 436,362.8 438,366.5 440,370.0 442,373.4 444,376.6 446,379.6 448,382.5 450,385.2 452,387.7 454,390.0 456,392.1 458,394.0 460,395.7 462,397.3 464,398.6 466,399.7 468,400.6 470,401.3 472,401.8 474,402.1 476,402.2 478,402.0 480,401.7 482,401.1 484,400.3 486,399.4 488,398.2 490,396.8 492,395.2 494,393.4 496,391.4 498,389.2 500,386.8 502,384.3 504,381.5 506,378.6 508,375.5 510,372.3 512,368.9 514,365.3 516,361.6 518,357.7 520,353.7 522,349.6 524,345.3 526,340.9 528,336.5 530,331.9 532,327.2 534,322.4 536,317.6 538,312.7 540,307.7 542,302.7 544,297.6 546,292.5 548,287.4 550,282.3 552,277.1 554,271.9 556,266.8 558,261.7 560,256.5 562,251.5 564,246.4 566,241.4 568,236.5 570,231.6 572,226.8 574,222.1 576,217.5 578,213.0 580,208.6 582,204.3 584,200.1 586,196.1 588,192.1 590,188.4 592,184.7 594,181.3 596,178.0 598,174.8 600,171.8 602,169.0 604,166.4 606,164.0 608,161.7 610,159.6 612,157.8 614,156.1 616,154.6 618,153.4 620,152.3 622,151.5 624,150.8 626,150.4 628,150.2 630,150.2 632,150.4 634,150.8 636,151.4 638,152.3 640,153.3 642,154.5 644,156.0 646,157.7 648,159.5 650,161.6 652,163.8 654,166.2 656,168.8 658,171.6 660,174.6 662,177.7 664,181.1 666,184.5 668,188.1 670,191.9 672,195.8 674,199.9 676,204.0 678,208.3 680,212.7 682,217.2 684,221.8 686,226.5 688,231.3 690,236.2 692,241.1 694,246.1 696,251.1 698,256.2 700,261.3 702,266.5 704,271.6 706,276.8 708,281.9 710,287.1 712,292.2 714,297.3 716,302.4 718,307.4 720,312.4 722,317.3 724,322.1 726,326.9 728,331.6 730,336.2 732,340.7 734,345.0 736,349.3 738,353.4 740,357.4 742,361.3 744,365.1 746,368.6 748,372.1 750,375.3 752,378.4 754,381.4 756,384.1 758,386.7 760,389.1 762,391.3 764,393.3 766,395.1 768,396.7 770,398.1 772,399.3 774,400.3 776,401.1 778,401.6 780,402.0 782,402.2 784,402.1 786,401.8 788,401.4 790,400.7 792,399.8 794,398.7 796,397.4 798,395.8 800,394.1 802,392.2 804,390.1 806,387.8 808,385.3 810,382.7 812,379.8 814,376.8 816,373.6 818,370.2 820,366.7 822,363.1 824,359.3 826,355.3 828,351.2 830,347.0 832,342.7 834,338.3 836,333.7 838,329.1 840,324.4 842,319.5 844,314.7 846,309.7 848,304.7 850,299.7"/><path d="M84,278.8 86,280.1 88,282.1 90,284.7 92,287.9 94,291.5 96,295.4 98,299.6 100,303.9 102,308.4 104,313.0 106,317.7 108,322.4 110,327.2 112,331.9 114,336.6 116,341.2 118,345.8 120,350.2 122,354.6 124,358.9 126,363.0 128,367.1 130,371.0 132,374.7 134,378.3 136,381.7 138,385.0 140,388.1 142,391.0 144,393.7 146,396.2 148,398.5 150,400.7 152,402.6 154,404.3 156,405.8 158,407.1 160,408.2 162,409.1 164,409.7 166,410.1 168,410.3 170,410.3 172,410.1 174,409.6 176,408.9 178,408.0 180,406.9 182,405.6 184,404.1 186,402.3 188,400.4 190,398.2 192,395.8 194,393.3 196,390.5 198,387.6 200,384.4 202,381.1 204,377.7 206,374.0 208,370.2 210,366.3 212,362.2 214,357.9 216,353.6 218,349.0 220,344.4 222,339.7 224,334.9 226,329.9 228,324.9 230,319.8 232,314.7 234,309.5 236,304.2 238,298.9 240,293.5 242,288.1 244,282.7 246,277.3 248,272.0 250,266.6 252,261.2 254,255.9 256,250.6 258,245.3 260,240.1 262,235.0 264,229.9 266,224.9 268,220.1 270,215.3 272,210.6 274,206.0 276,201.6 278,197.3 280,193.1 282,189.0 284,185.1 286,181.4 288,177.8 290,174.4 292,171.2 294,168.2 296,165.3 298,162.6 300,160.2 302,157.9 304,155.8 306,153.9 308,152.3 310,150.8 312,149.6 314,148.6 316,147.8 318,147.2 320,146.8 322,146.7 324,146.8 326,147.1 328,147.6 330,148.4 332,149.3 334,150.5 336,151.9 338,153.5 340,155.3 342,157.3 344,159.5 346,162.0 348,164.6 350,167.4 352,170.4 354,173.6 356,176.9 358,180.5 360,184.1 362,188.0 364,192.0 366,196.1 368,200.4 370,204.8 372,209.4 374,214.0 376,218.8 378,223.6 380,228.6 382,233.6 384,238.8 386,243.9 388,249.2 390,254.5 392,259.8 394,265.1 396,270.5 398,275.9 400,281.3 402,286.7 404,292.1 406,297.5 408,302.8 410,308.1 412,313.3 414,318.5 416,323.6 418,328.6 420,333.6 422,338.4 424,343.2 426,347.8 428,352.4 430,356.8 432,361.1 434,365.2 436,369.2 438,373.0 440,376.7 442,380.2 444,383.6 446,386.8 448,389.7 450,392.6 452,395.2 454,397.6 456,399.8 458,401.8 460,403.6 462,405.2 464,406.6 466,407.8 468,408.7 470,409.5 472,410.0 474,410.3 476,410.3 478,410.2 480,409.8 482,409.2 484,408.4 486,407.4 488,406.2 490,404.7 492,403.0 494,401.2 496,399.1 498,396.8 500,394.3 502,391.6 504,388.8 506,385.7 508,382.5 510,379.1 512,375.5 514,371.8 516,367.9 518,363.8 520,359.6 522,355.3 524,350.9 526,346.3 528,341.6 530,336.8 532,331.9 534,326.9 536,321.9 538,316.7 540,311.5 542,306.3 544,301.0 546,295.7 548,290.3 550,284.9 552,279.5 554,274.1 556,268.7 558,263.3 560,258.0 562,252.7 564,247.4 566,242.2 568,237.0 570,231.9 572,226.9 574,222.0 576,217.2 578,212.5 580,207.8 582,203.3 584,199.0 586,194.7 588,190.6 590,186.7 592,182.9 594,179.3 596,175.8 598,172.5 600,169.4 602,166.4 604,163.7 606,161.1 608,158.8 610,156.6 612,154.7 614,152.9 616,151.4 618,150.1 620,149.0 622,148.1 624,147.4 626,147.0 628,146.7 630,146.7 632,146.9 634,147.4 636,148.0 638,148.9 640,150.0 642,151.3 644,152.8 646,154.6 648,156.5 650,158.6 652,161.0 654,163.5 656,166.3 658,169.2 660,172.3 662,175.6 664,179.0 666,182.7 668,186.4 670,190.4 672,194.5 674,198.7 676,203.1 678,207.5 680,212.2 682,216.9 684,221.7 686,226.6 688,231.6 690,236.7 692,241.9 694,247.1 696,252.3 698,257.7 700,263.0 702,268.4 704,273.8 706,279.2 708,284.6 710,289.9 712,295.3 714,300.7 716,306.0 718,311.2 720,316.4 722,321.6 724,326.6 726,331.6 728,336.5 730,341.3 732,346.0 734,350.6 736,355.0 738,359.4 740,363.6 742,367.6 744,371.5 746,375.3 748,378.9 750,382.3 752,385.5 754,388.6 756,391.5 758,394.1 760,396.6 762,398.9 764,401.0 766,402.9 768,404.6 770,406.1 772,407.3 774,408.4 776,409.2 778,409.8 780,410.2 782,410.3 784,410.3 786,410.0 788,409.5 790,408.8 792,407.8 794,406.7 796,405.3 798,403.7 800,401.9 802,399.9 804,397.7 806,395.3 808,392.7 810,389.9 812,387.0 814,383.8 816,380.5 818,377.0 820,373.3 822,369.4 824,365.5 826,361.3 828,357.1 830,352.7 832,348.1 834,343.5 836,338.7 838,333.9 840,328.9 842,323.9 844,318.8 846,313.6 848,308.4 850,303.1"/><path d="M84,279.0 86,280.3 88,282.5 90,285.3 92,288.6 94,292.4 96,296.6 98,301.0 100,305.6 102,310.4 104,315.3 106,320.3 108,325.3 110,330.3 112,335.3 114,340.3 116,345.2 118,350.0 120,354.8 122,359.4 124,363.9 126,368.3 128,372.6 130,376.7 132,380.7 134,384.5 136,388.2 138,391.6 140,394.9 142,398.0 144,400.8 146,403.5 148,406.0 150,408.3 152,410.3 154,412.1 156,413.7 158,415.1 160,416.2 162,417.2 164,417.8 166,418.3 168,418.5 170,418.5 172,418.2 174,417.8 176,417.0 178,416.1 180,414.9 182,413.5 184,411.9 186,410.0 188,407.9 190,405.6 192,403.1 194,400.4 196,397.5 198,394.4 200,391.1 202,387.5 204,383.9 206,380.0 208,376.0 210,371.8 212,367.4 214,362.9 216,358.3 218,353.5 220,348.6 222,343.6 224,338.5 226,333.2 228,327.9 230,322.5 232,317.0 234,311.5 236,305.9 238,300.3 240,294.6 242,288.9 244,283.2 246,277.4 248,271.7 250,266.0 252,260.3 254,254.6 256,249.0 258,243.5 260,237.9 262,232.5 264,227.1 266,221.9 268,216.7 270,211.6 272,206.6 274,201.8 276,197.1 278,192.5 280,188.0 282,183.8 284,179.6 286,175.7 288,171.9 290,168.3 292,164.9 294,161.6 296,158.6 298,155.8 300,153.1 302,150.7 304,148.5 306,146.5 308,144.8 310,143.2 312,141.9 314,140.8 316,140.0 318,139.4 320,139.0 322,138.8 324,138.9 326,139.3 328,139.8 330,140.6 332,141.6 334,142.9 336,144.3 338,146.0 340,148.0 342,150.1 344,152.5 346,155.0 348,157.8 350,160.8 352,164.0 354,167.4 356,170.9 358,174.7 360,178.6 362,182.7 364,186.9 366,191.3 368,195.8 370,200.5 372,205.3 374,210.3 376,215.3 378,220.5 380,225.7 382,231.1 384,236.5 386,242.0 388,247.6 390,253.2 392,258.8 394,264.5 396,270.2 398,275.9 400,281.7 402,287.4 404,293.1 406,298.8 408,304.4 410,310.0 412,315.6 414,321.1 416,326.5 418,331.8 420,337.1 422,342.2 424,347.3 426,352.2 428,357.0 430,361.7 432,366.2 434,370.6 436,374.9 438,379.0 440,382.9 442,386.6 444,390.1 446,393.5 448,396.7 450,399.7 452,402.4 454,405.0 456,407.3 458,409.5 460,411.4 462,413.1 464,414.6 466,415.8 468,416.8 470,417.6 472,418.1 474,418.4 476,418.5 478,418.4 480,418.0 482,417.4 484,416.5 486,415.4 488,414.1 490,412.5 492,410.8 494,408.8 496,406.6 498,404.2 500,401.5 502,398.7 504,395.6 506,392.4 508,389.0 510,385.4 512,381.6 514,377.6 516,373.5 518,369.2 520,364.7 522,360.2 524,355.4 526,350.6 528,345.6 530,340.5 532,335.3 534,330.1 536,324.7 538,319.2 540,313.7 542,308.1 544,302.5 546,296.9 548,291.2 550,285.5 552,279.7 554,274.0 556,268.3 558,262.6 560,256.9 562,251.3 564,245.7 566,240.1 568,234.7 570,229.3 572,224.0 574,218.7 576,213.6 578,208.6 580,203.7 582,198.9 584,194.3 586,189.8 588,185.5 590,181.3 592,177.2 594,173.4 596,169.7 598,166.2 600,162.9 602,159.8 604,156.9 606,154.2 608,151.7 610,149.4 612,147.3 614,145.5 616,143.8 618,142.4 620,141.3 622,140.3 624,139.6 626,139.1 628,138.9 630,138.9 632,139.1 634,139.6 636,140.3 638,141.2 640,142.3 642,143.7 644,145.3 646,147.2 648,149.2 650,151.5 652,154.0 654,156.7 656,159.6 658,162.7 660,166.0 662,169.5 664,173.1 666,177.0 668,181.0 670,185.2 672,189.5 674,194.0 676,198.6 678,203.4 680,208.3 682,213.3 684,218.4 686,223.6 688,228.9 690,234.3 692,239.8 694,245.3 696,250.9 698,256.5 700,262.2 702,267.9 704,273.6 706,279.4 708,285.1 710,290.8 712,296.5 714,302.2 716,307.8 718,313.4 720,318.9 722,324.3 724,329.7 726,335.0 728,340.2 730,345.3 732,350.3 734,355.1 736,359.9 738,364.4 740,368.9 742,373.2 744,377.3 746,381.3 748,385.1 750,388.7 752,392.2 754,395.4 756,398.5 758,401.3 760,404.0 762,406.4 764,408.7 766,410.7 768,412.4 770,414.0 772,415.3 774,416.4 776,417.3 778,417.9 780,418.4 782,418.5 784,418.5 786,418.2 788,417.6 790,416.9 792,415.9 794,414.6 796,413.2 798,411.5 800,409.6 802,407.5 804,405.1 806,402.6 808,399.8 810,396.9 812,393.7 814,390.4 816,386.8 818,383.1 820,379.2 822,375.1 824,370.9 826,366.5 828,362.0 830,357.3 832,352.5 834,347.6 836,342.6 838,337.4 840,332.2 842,326.8 844,321.4 846,315.9 848,310.4 850,304.8"/><path d="M84,281.6 86,283.0 88,285.2 90,288.1 92,291.5 94,295.4 96,299.7 98,304.2 100,309.0 102,313.9 104,318.9 106,324.0 108,329.2 110,334.3 112,339.4 114,344.5 116,349.6 118,354.5 120,359.4 122,364.2 124,368.8 126,373.4 128,377.8 130,382.0 132,386.1 134,390.0 136,393.7 138,397.3 140,400.6 142,403.8 144,406.7 146,409.5 148,412.0 150,414.3 152,416.4 154,418.3 156,420.0 158,421.4 160,422.5 162,423.5 164,424.2 166,424.7 168,424.9 170,424.9 172,424.6 174,424.1 176,423.4 178,422.4 180,421.2 182,419.7 184,418.1 186,416.1 188,414.0 190,411.7 192,409.1 194,406.3 196,403.3 198,400.1 200,396.7 202,393.1 204,389.3 206,385.3 208,381.2 210,376.9 212,372.4 214,367.8 216,363.0 218,358.1 220,353.1 222,347.9 224,342.7 226,337.3 228,331.9 230,326.3 232,320.7 234,315.0 236,309.3 238,303.5 240,297.6 242,291.8 244,285.9 246,280.0 248,274.1 250,268.3 252,262.4 254,256.6 256,250.9 258,245.1 260,239.5 262,233.9 264,228.4 266,223.0 268,217.6 270,212.4 272,207.3 274,202.3 276,197.5 278,192.8 280,188.2 282,183.8 284,179.6 286,175.5 288,171.6 290,167.9 292,164.4 294,161.1 296,158.0 298,155.1 300,152.4 302,149.9 304,147.6 306,145.6 308,143.8 310,142.2 312,140.9 314,139.8 316,138.9 318,138.3 320,137.9 322,137.7 324,137.8 326,138.1 328,138.7 330,139.5 332,140.6 334,141.8 336,143.4 338,145.1 340,147.1 342,149.3 344,151.7 346,154.4 348,157.2 350,160.3 352,163.5 354,167.0 356,170.6 358,174.5 360,178.5 362,182.7 364,187.1 366,191.6 368,196.2 370,201.0 372,206.0 374,211.1 376,216.2 378,221.5 380,226.9 382,232.4 384,238.0 386,243.6 388,249.3 390,255.1 392,260.9 394,266.7 396,272.6 398,278.5 400,284.4 402,290.2 404,296.1 406,301.9 408,307.7 410,313.5 412,319.2 414,324.8 416,330.4 418,335.9 420,341.3 422,346.6 424,351.7 426,356.8 428,361.7 430,366.6 432,371.2 434,375.7 436,380.1 438,384.3 440,388.3 442,392.1 444,395.7 446,399.2 448,402.5 450,405.5 452,408.4 454,411.0 456,413.4 458,415.6 460,417.6 462,419.3 464,420.8 466,422.1 468,423.1 470,423.9 472,424.5 474,424.8 476,424.9 478,424.7 480,424.3 482,423.7 484,422.8 486,421.7 488,420.3 490,418.8 492,416.9 494,414.9 496,412.6 498,410.1 500,407.4 502,404.5 504,401.4 506,398.1 508,394.5 510,390.8 512,386.9 514,382.9 516,378.6 518,374.2 520,369.7 522,365.0 524,360.1 526,355.1 528,350.0 530,344.8 532,339.5 534,334.0 536,328.5 538,322.9 540,317.3 542,311.6 544,305.8 546,300.0 548,294.1 550,288.3 552,282.4 554,276.5 556,270.6 558,264.8 560,258.9 562,253.2 564,247.4 566,241.7 568,236.1 570,230.6 572,225.1 574,219.7 576,214.5 578,209.3 580,204.3 582,199.4 584,194.6 586,190.0 588,185.6 590,181.3 592,177.1 594,173.2 596,169.4 598,165.8 600,162.4 602,159.2 604,156.2 606,153.4 608,150.9 610,148.5 612,146.4 614,144.5 616,142.8 618,141.4 620,140.2 622,139.2 624,138.5 626,138.0 628,137.8 630,137.7 632,138.0 634,138.5 636,139.2 638,140.1 640,141.3 642,142.7 644,144.4 646,146.3 648,148.4 650,150.7 652,153.3 654,156.0 656,159.0 658,162.2 660,165.6 662,169.2 664,172.9 666,176.9 668,181.0 670,185.3 672,189.7 674,194.3 676,199.1 678,204.0 680,209.0 682,214.2 684,219.4 686,224.8 688,230.2 690,235.8 692,241.4 694,247.0 696,252.8 698,258.6 700,264.4 702,270.2 704,276.1 706,282.0 708,287.9 710,293.7 712,299.6 714,305.4 716,311.2 718,316.9 720,322.6 722,328.2 724,333.7 726,339.1 728,344.5 730,349.7 732,354.8 734,359.8 736,364.6 738,369.4 740,373.9 742,378.4 744,382.6 746,386.7 748,390.6 750,394.3 752,397.8 754,401.2 756,404.3 758,407.2 760,410.0 762,412.5 764,414.8 766,416.8 768,418.6 770,420.2 772,421.6 774,422.7 776,423.6 778,424.3 780,424.7 782,424.9 784,424.8 786,424.5 788,424.0 790,423.2 792,422.2 794,420.9 796,419.4 798,417.7 800,415.7 802,413.6 804,411.2 806,408.5 808,405.7 810,402.7 812,399.4 814,396.0 816,392.3 818,388.5 820,384.5 822,380.3 824,376.0 826,371.5 828,366.9 830,362.1 832,357.1 834,352.1 836,346.9 838,341.6 840,336.2 842,330.7 844,325.2 846,319.6 848,313.9 850,308.1"/><path d="M84,281.9 86,283.3 88,285.5 90,288.4 92,291.9 94,295.9 96,300.2 98,304.8 100,309.6 102,314.6 104,319.6 106,324.8 108,330.0 110,335.2 112,340.4 114,345.6 116,350.7 118,355.7 120,360.6 122,365.4 124,370.1 126,374.7 128,379.2 130,383.4 132,387.6 134,391.5 136,395.3 138,398.9 140,402.3 142,405.5 144,408.5 146,411.3 148,413.8 150,416.2 152,418.3 154,420.2 156,421.8 158,423.3 160,424.5 162,425.4 164,426.1 166,426.6 168,426.8 170,426.8 172,426.5 174,426.0 176,425.3 178,424.3 180,423.1 182,421.6 184,419.9 186,418.0 188,415.8 190,413.4 192,410.8 194,408.0 196,405.0 198,401.7 200,398.3 202,394.7 204,390.8 206,386.8 208,382.6 210,378.3 212,373.8 214,369.1 216,364.3 218,359.3 220,354.2 222,349.0 224,343.7 226,338.3 228,332.7 230,327.1 232,321.4 234,315.7 236,309.9 238,304.0 240,298.1 242,292.2 244,286.3 246,280.3 248,274.4 250,268.4 252,262.5 254,256.6 256,250.8 258,245.0 260,239.3 262,233.6 264,228.1 266,222.6 268,217.2 270,211.9 272,206.8 274,201.7 276,196.8 278,192.1 280,187.5 282,183.0 284,178.7 286,174.6 288,170.7 290,166.9 292,163.4 294,160.0 296,156.9 298,153.9 300,151.2 302,148.7 304,146.4 306,144.4 308,142.5 310,140.9 312,139.6 314,138.4 316,137.6 318,136.9 320,136.5 322,136.4 324,136.5 326,136.8 328,137.4 330,138.2 332,139.2 334,140.5 336,142.1 338,143.8 340,145.8 342,148.1 344,150.5 346,153.2 348,156.1 350,159.2 352,162.5 354,166.0 356,169.7 358,173.6 360,177.6 362,181.9 364,186.3 366,190.8 368,195.6 370,200.4 372,205.4 374,210.5 376,215.8 378,221.2 380,226.6 382,232.2 384,237.8 386,243.5 388,249.3 390,255.1 392,261.0 394,266.9 396,272.8 398,278.7 400,284.7 402,290.6 404,296.6 406,302.5 408,308.3 410,314.2 412,319.9 414,325.6 416,331.3 418,336.8 420,342.3 422,347.6 424,352.9 426,358.0 428,363.0 430,367.8 432,372.5 434,377.1 436,381.5 438,385.7 440,389.8 442,393.7 444,397.4 446,400.9 448,404.2 450,407.2 452,410.1 454,412.8 456,415.2 458,417.4 460,419.4 462,421.2 464,422.7 466,424.0 468,425.1 470,425.9 472,426.4 474,426.8 476,426.8 478,426.7 480,426.3 482,425.6 484,424.7 486,423.6 488,422.2 490,420.6 492,418.8 494,416.7 496,414.4 498,411.9 500,409.2 502,406.2 504,403.1 506,399.7 508,396.1 510,392.4 512,388.5 514,384.3 516,380.0 518,375.6 520,371.0 522,366.2 524,361.3 526,356.3 528,351.1 530,345.8 532,340.4 534,335.0 536,329.4 538,323.7 540,318.0 542,312.2 544,306.4 546,300.5 548,294.6 550,288.6 552,282.7 554,276.7 556,270.8 558,264.9 560,259.0 562,253.1 564,247.3 566,241.6 568,235.9 570,230.3 572,224.8 574,219.3 576,214.0 578,208.8 580,203.7 582,198.8 584,194.0 586,189.3 588,184.8 590,180.4 592,176.2 594,172.2 596,168.4 598,164.8 600,161.3 602,158.1 604,155.1 606,152.3 608,149.7 610,147.3 612,145.2 614,143.2 616,141.5 618,140.1 620,138.9 622,137.9 624,137.2 626,136.7 628,136.4 630,136.4 632,136.6 634,137.1 636,137.8 638,138.8 640,140.0 642,141.4 644,143.1 646,145.0 648,147.2 650,149.5 652,152.1 654,154.9 656,157.9 658,161.1 660,164.6 662,168.2 664,172.0 666,176.0 668,180.2 670,184.5 672,189.0 674,193.7 676,198.5 678,203.4 680,208.5 682,213.7 684,219.0 686,224.4 688,229.9 690,235.5 692,241.2 694,247.0 696,252.8 698,258.6 700,264.5 702,270.4 704,276.4 706,282.3 708,288.3 710,294.2 712,300.1 714,306.0 716,311.8 718,317.6 720,323.4 722,329.0 724,334.6 726,340.1 728,345.5 730,350.8 732,355.9 734,361.0 736,365.9 738,370.7 740,375.3 742,379.8 744,384.1 746,388.2 748,392.1 750,395.9 752,399.5 754,402.9 756,406.0 758,409.0 760,411.7 762,414.3 764,416.6 766,418.7 768,420.5 770,422.1 772,423.5 774,424.7 776,425.6 778,426.2 780,426.7 782,426.8 784,426.8 786,426.5 788,425.9 790,425.1 792,424.1 794,422.8 796,421.3 798,419.6 800,417.6 802,415.4 804,412.9 806,410.3 808,407.4 810,404.4 812,401.1 814,397.6 816,393.9 818,390.0 820,386.0 822,381.8 824,377.4 826,372.8 828,368.1 830,363.3 832,358.3 834,353.2 836,348.0 838,342.6 840,337.2 842,331.6 844,326.0 846,320.3 848,314.5 850,308.7"/><path d="M84,285.6 86,286.8 88,288.9 90,291.7 92,295.0 94,298.7 96,302.7 98,307.1 100,311.6 102,316.3 104,321.0 106,325.9 108,330.8 110,335.7 112,340.6 114,345.4 116,350.2 118,355.0 120,359.6 122,364.1 124,368.6 126,372.9 128,377.1 130,381.1 132,385.0 134,388.7 136,392.2 138,395.6 140,398.8 142,401.8 144,404.6 146,407.3 148,409.7 150,411.9 152,413.9 154,415.7 156,417.2 158,418.6 160,419.7 162,420.6 164,421.3 166,421.7 168,421.9 170,421.9 172,421.7 174,421.2 176,420.5 178,419.6 180,418.4 182,417.0 184,415.4 186,413.6 188,411.6 190,409.3 192,406.9 194,404.2 196,401.4 198,398.3 200,395.1 202,391.7 204,388.1 206,384.3 208,380.3 210,376.2 212,372.0 214,367.6 216,363.0 218,358.4 220,353.6 222,348.7 224,343.7 226,338.6 228,333.4 230,328.1 232,322.7 234,317.3 236,311.8 238,306.3 240,300.8 242,295.2 244,289.6 246,284.0 248,278.4 250,272.8 252,267.3 254,261.7 256,256.3 258,250.8 260,245.4 262,240.1 264,234.9 266,229.7 268,224.6 270,219.7 272,214.8 274,210.1 276,205.5 278,201.0 280,196.6 282,192.5 284,188.4 286,184.6 288,180.9 290,177.3 292,174.0 294,170.8 296,167.9 298,165.1 300,162.5 302,160.2 304,158.0 306,156.1 308,154.3 310,152.8 312,151.6 314,150.5 316,149.7 318,149.1 320,148.7 322,148.6 324,148.6 326,149.0 328,149.5 330,150.3 332,151.3 334,152.5 336,153.9 338,155.6 340,157.5 342,159.6 344,161.9 346,164.4 348,167.1 350,170.0 352,173.1 354,176.4 356,179.9 358,183.6 360,187.4 362,191.4 364,195.5 366,199.8 368,204.3 370,208.8 372,213.5 374,218.4 376,223.3 378,228.3 380,233.5 382,238.7 384,244.0 386,249.4 388,254.8 390,260.3 392,265.8 394,271.4 396,277.0 398,282.5 400,288.1 402,293.7 404,299.3 406,304.9 408,310.4 410,315.9 412,321.3 414,326.7 416,332.0 418,337.2 420,342.3 422,347.4 424,352.3 426,357.1 428,361.8 430,366.4 432,370.8 434,375.1 436,379.3 438,383.3 440,387.1 442,390.7 444,394.2 446,397.5 448,400.6 450,403.5 452,406.2 454,408.7 456,411.0 458,413.1 460,415.0 462,416.6 464,418.1 466,419.3 468,420.3 470,421.0 472,421.6 474,421.9 476,421.9 478,421.8 480,421.4 482,420.8 484,420.0 486,418.9 488,417.6 490,416.1 492,414.4 494,412.4 496,410.3 498,407.9 500,405.3 502,402.5 504,399.6 506,396.4 508,393.0 510,389.5 512,385.8 514,381.9 516,377.9 518,373.7 520,369.4 522,364.9 524,360.3 526,355.5 528,350.7 530,345.7 532,340.6 534,335.5 536,330.2 538,324.9 540,319.5 542,314.0 544,308.5 546,303.0 548,297.4 550,291.9 552,286.3 554,280.7 556,275.1 558,269.5 560,264.0 562,258.4 564,253.0 566,247.6 568,242.2 570,236.9 572,231.7 574,226.6 576,221.6 578,216.7 580,211.9 582,207.3 584,202.8 586,198.4 588,194.1 590,190.0 592,186.1 594,182.3 596,178.7 598,175.3 600,172.1 602,169.0 604,166.2 606,163.5 608,161.1 610,158.8 612,156.8 614,155.0 616,153.4 618,152.0 620,150.9 622,150.0 624,149.3 626,148.8 628,148.6 630,148.6 632,148.8 634,149.3 636,149.9 638,150.8 640,152.0 642,153.3 644,154.9 646,156.7 648,158.7 650,160.9 652,163.4 654,166.0 656,168.8 658,171.9 660,175.1 662,178.5 664,182.1 666,185.8 668,189.8 670,193.8 672,198.1 674,202.5 676,207.0 678,211.6 680,216.4 682,221.3 684,226.3 686,231.4 688,236.6 690,241.9 692,247.2 694,252.6 696,258.1 698,263.6 700,269.1 702,274.7 704,280.3 706,285.9 708,291.5 710,297.1 712,302.7 714,308.2 716,313.7 718,319.1 720,324.5 722,329.9 724,335.1 726,340.3 728,345.4 730,350.3 732,355.2 734,360.0 736,364.6 738,369.1 740,373.4 742,377.6 744,381.7 746,385.6 748,389.3 750,392.8 752,396.2 754,399.4 756,402.3 758,405.1 760,407.7 762,410.1 764,412.3 766,414.2 768,416.0 770,417.5 772,418.8 774,419.9 776,420.7 778,421.4 780,421.8 782,421.9 784,421.9 786,421.6 788,421.1 790,420.3 792,419.3 794,418.1 796,416.7 798,415.1 800,413.2 802,411.1 804,408.9 806,406.4 808,403.7 810,400.8 812,397.7 814,394.4 816,390.9 818,387.3 820,383.5 822,379.5 824,375.4 826,371.1 828,366.7 830,362.1 832,357.4 834,352.6 836,347.7 838,342.7 840,337.5 842,332.3 844,327.0 846,321.7 848,316.2 850,310.8"/><path d="M84,285.8 86,287.1 88,289.3 90,292.1 92,295.5 94,299.4 96,303.6 98,308.0 100,312.7 102,317.6 104,322.5 106,327.5 108,332.6 110,337.7 112,342.7 114,347.8 116,352.7 118,357.6 120,362.4 122,367.1 124,371.7 126,376.2 128,380.5 130,384.7 132,388.7 134,392.5 136,396.2 138,399.7 140,403.0 142,406.1 144,409.1 146,411.8 148,414.3 150,416.6 152,418.6 154,420.5 156,422.1 158,423.5 160,424.6 162,425.6 164,426.3 166,426.7 168,426.9 170,426.9 172,426.7 174,426.2 176,425.4 178,424.5 180,423.3 182,421.9 184,420.2 186,418.3 188,416.2 190,413.9 192,411.4 194,408.6 196,405.7 198,402.5 200,399.1 202,395.6 204,391.9 206,388.0 208,383.9 210,379.6 212,375.2 214,370.7 216,366.0 218,361.2 220,356.2 222,351.1 224,345.9 226,340.6 228,335.3 230,329.8 232,324.3 234,318.7 236,313.0 238,307.3 240,301.6 242,295.8 244,290.0 246,284.2 248,278.4 250,272.6 252,266.9 254,261.1 256,255.5 258,249.8 260,244.2 262,238.7 264,233.3 266,228.0 268,222.7 270,217.6 272,212.5 274,207.6 276,202.9 278,198.2 280,193.7 282,189.4 284,185.2 286,181.2 288,177.4 290,173.8 292,170.3 294,167.0 296,164.0 298,161.1 300,158.4 302,156.0 304,153.8 306,151.8 308,150.0 310,148.4 312,147.1 314,146.0 316,145.1 318,144.5 320,144.1 322,144.0 324,144.1 326,144.4 328,145.0 330,145.7 332,146.8 334,148.0 336,149.5 338,151.3 340,153.2 342,155.4 344,157.8 346,160.4 348,163.2 350,166.2 352,169.4 354,172.8 356,176.4 358,180.2 360,184.2 362,188.3 364,192.6 366,197.0 368,201.6 370,206.4 372,211.2 374,216.2 376,221.3 378,226.6 380,231.9 382,237.3 384,242.8 386,248.3 388,254.0 390,259.6 392,265.4 394,271.1 396,276.9 398,282.7 400,288.5 402,294.3 404,300.0 406,305.8 408,311.5 410,317.2 412,322.8 414,328.3 416,333.8 418,339.2 420,344.5 422,349.8 424,354.9 426,359.9 428,364.7 430,369.5 432,374.1 434,378.5 436,382.8 438,386.9 440,390.9 442,394.6 444,398.2 446,401.6 448,404.8 450,407.9 452,410.7 454,413.3 456,415.6 458,417.8 460,419.7 462,421.4 464,422.9 466,424.2 468,425.2 470,426.0 472,426.6 474,426.9 476,426.9 478,426.8 480,426.4 482,425.8 484,424.9 486,423.8 488,422.5 490,420.9 492,419.1 494,417.1 496,414.9 498,412.4 500,409.7 502,406.9 504,403.8 506,400.5 508,397.0 510,393.4 512,389.6 514,385.5 516,381.4 518,377.0 520,372.5 522,367.9 524,363.1 526,358.2 528,353.2 530,348.0 532,342.8 534,337.4 536,332.0 538,326.5 540,320.9 542,315.3 544,309.6 546,303.9 548,298.1 550,292.3 552,286.5 554,280.7 556,274.9 558,269.2 560,263.4 562,257.7 564,252.1 566,246.5 568,240.9 570,235.5 572,230.1 574,224.8 576,219.6 578,214.5 580,209.6 582,204.8 584,200.1 586,195.5 588,191.1 590,186.9 592,182.8 594,178.9 596,175.2 598,171.7 600,168.3 602,165.2 604,162.2 606,159.5 608,156.9 610,154.6 612,152.5 614,150.7 616,149.0 618,147.6 620,146.4 622,145.5 624,144.7 626,144.3 628,144.0 630,144.0 632,144.2 634,144.7 636,145.4 638,146.3 640,147.5 642,148.9 644,150.5 646,152.4 648,154.5 650,156.8 652,159.3 654,162.0 656,165.0 658,168.1 660,171.4 662,175.0 664,178.7 666,182.6 668,186.6 670,190.9 672,195.2 674,199.8 676,204.5 678,209.3 680,214.2 682,219.3 684,224.5 686,229.7 688,235.1 690,240.6 692,246.1 694,251.7 696,257.4 698,263.1 700,268.8 702,274.6 704,280.4 706,286.1 708,291.9 710,297.7 712,303.5 714,309.2 716,314.9 718,320.5 720,326.1 722,331.6 724,337.1 726,342.4 728,347.7 730,352.8 732,357.9 734,362.8 736,367.6 738,372.2 740,376.7 742,381.1 744,385.3 746,389.3 748,393.1 750,396.8 752,400.3 754,403.6 756,406.7 758,409.6 760,412.2 762,414.7 764,417.0 766,419.0 768,420.8 770,422.4 772,423.7 774,424.8 776,425.7 778,426.4 780,426.8 782,426.9 784,426.9 786,426.6 788,426.0 790,425.3 792,424.3 794,423.0 796,421.5 798,419.8 800,417.9 802,415.8 804,413.4 806,410.8 808,408.0 810,405.0 812,401.8 814,398.5 816,394.9 818,391.1 820,387.2 822,383.1 824,378.8 826,374.3 828,369.8 830,365.0 832,360.2 834,355.2 836,350.1 838,344.9 840,339.6 842,334.2 844,328.7 846,323.1 848,317.5 850,311.9"/><path d="M84,288.5 86,289.8 88,292.0 90,294.9 92,298.3 94,302.1 96,306.3 98,310.8 100,315.5 102,320.4 104,325.3 106,330.4 108,335.5 110,340.5 112,345.6 114,350.7 116,355.6 118,360.5 120,365.4 122,370.1 124,374.7 126,379.1 128,383.5 130,387.7 132,391.7 134,395.5 136,399.2 138,402.7 140,406.1 142,409.2 144,412.1 146,414.8 148,417.3 150,419.6 152,421.7 154,423.5 156,425.2 158,426.6 160,427.7 162,428.7 164,429.4 166,429.8 168,430.0 170,430.0 172,429.8 174,429.3 176,428.5 178,427.6 180,426.4 182,425.0 184,423.3 186,421.4 188,419.3 190,417.0 192,414.4 194,411.7 196,408.7 198,405.5 200,402.2 202,398.6 204,394.9 206,391.0 208,386.9 210,382.6 212,378.2 214,373.6 216,368.9 218,364.1 220,359.1 222,354.0 224,348.8 226,343.5 228,338.1 230,332.6 232,327.1 234,321.5 236,315.8 238,310.1 240,304.3 242,298.5 244,292.7 246,286.9 248,281.1 250,275.3 252,269.5 254,263.8 256,258.1 258,252.4 260,246.9 262,241.3 264,235.9 266,230.5 268,225.3 270,220.1 272,215.1 274,210.2 276,205.4 278,200.7 280,196.2 282,191.9 284,187.7 286,183.7 288,179.8 290,176.2 292,172.7 294,169.4 296,166.4 298,163.5 300,160.8 302,158.4 304,156.1 306,154.1 308,152.3 310,150.8 312,149.4 314,148.3 316,147.5 318,146.9 320,146.5 322,146.3 324,146.4 326,146.7 328,147.3 330,148.1 332,149.1 334,150.4 336,151.9 338,153.6 340,155.6 342,157.8 344,160.1 346,162.8 348,165.6 350,168.6 352,171.8 354,175.2 356,178.9 358,182.6 360,186.6 362,190.8 364,195.1 366,199.5 368,204.1 370,208.9 372,213.8 374,218.8 376,223.9 378,229.1 380,234.5 382,239.9 384,245.4 386,251.0 388,256.6 390,262.3 392,268.0 394,273.8 396,279.6 398,285.4 400,291.2 402,297.0 404,302.8 406,308.6 408,314.3 410,320.0 412,325.6 414,331.2 416,336.7 418,342.1 420,347.4 422,352.7 424,357.8 426,362.8 428,367.7 430,372.4 432,377.0 434,381.5 436,385.8 438,389.9 440,393.9 442,397.7 444,401.3 446,404.7 448,407.9 450,410.9 452,413.7 454,416.3 456,418.7 458,420.9 460,422.8 462,424.5 464,426.0 466,427.3 468,428.3 470,429.1 472,429.7 474,430.0 476,430.0 478,429.9 480,429.5 482,428.9 484,428.0 486,426.9 488,425.5 490,424.0 492,422.2 494,420.2 496,417.9 498,415.5 500,412.8 502,409.9 504,406.8 506,403.5 508,400.1 510,396.4 512,392.6 514,388.5 516,384.3 518,380.0 520,375.5 522,370.8 524,366.0 526,361.1 528,356.1 530,350.9 532,345.7 534,340.3 536,334.8 538,329.3 540,323.7 542,318.1 544,312.4 546,306.6 548,300.9 550,295.1 552,289.2 554,283.4 556,277.6 558,271.8 560,266.1 562,260.4 564,254.7 566,249.1 568,243.5 570,238.1 572,232.7 574,227.4 576,222.2 578,217.1 580,212.1 582,207.3 584,202.6 586,198.0 588,193.6 590,189.4 592,185.3 594,181.4 596,177.6 598,174.1 600,170.7 602,167.6 604,164.6 606,161.9 608,159.3 610,157.0 612,154.9 614,153.0 616,151.4 618,149.9 620,148.8 622,147.8 624,147.1 626,146.6 628,146.4 630,146.3 632,146.6 634,147.0 636,147.8 638,148.7 640,149.9 642,151.3 644,152.9 646,154.8 648,156.9 650,159.2 652,161.7 654,164.4 656,167.4 658,170.5 660,173.9 662,177.4 664,181.1 666,185.0 668,189.1 670,193.3 672,197.7 674,202.3 676,207.0 678,211.8 680,216.8 682,221.8 684,227.0 686,232.3 688,237.7 690,243.2 692,248.7 694,254.3 696,260.0 698,265.7 700,271.5 702,277.3 704,283.1 706,288.9 708,294.7 710,300.5 712,306.3 714,312.0 716,317.7 718,323.4 720,329.0 722,334.5 724,339.9 726,345.3 728,350.6 730,355.7 732,360.8 734,365.7 736,370.5 738,375.2 740,379.7 742,384.1 744,388.3 746,392.3 748,396.2 750,399.8 752,403.3 754,406.6 756,409.7 758,412.6 760,415.3 762,417.8 764,420.0 766,422.1 768,423.9 770,425.5 772,426.8 774,427.9 776,428.8 778,429.5 780,429.9 782,430.0 784,430.0 786,429.7 788,429.1 790,428.4 792,427.4 794,426.1 796,424.6 798,422.9 800,421.0 802,418.8 804,416.5 806,413.9 808,411.1 810,408.1 812,404.9 814,401.5 816,397.9 818,394.1 820,390.2 822,386.0 824,381.7 826,377.3 828,372.7 830,368.0 832,363.1 834,358.1 836,353.0 838,347.8 840,342.4 842,337.0 844,331.5 846,326.0 848,320.3 850,314.7"/><path d="M84,291.1 86,292.4 88,294.5 90,297.3 92,300.6 94,304.4 96,308.4 98,312.8 100,317.3 102,322.1 104,326.9 106,331.8 108,336.7 110,341.6 112,346.6 114,351.4 116,356.3 118,361.0 120,365.7 122,370.3 124,374.8 126,379.1 128,383.3 130,387.4 132,391.3 134,395.0 136,398.6 138,402.0 140,405.2 142,408.3 144,411.1 146,413.7 148,416.2 150,418.4 152,420.4 154,422.2 156,423.8 158,425.1 160,426.3 162,427.2 164,427.8 166,428.3 168,428.5 170,428.5 172,428.2 174,427.8 176,427.1 178,426.1 180,425.0 182,423.6 184,422.0 186,420.1 188,418.1 190,415.8 192,413.3 194,410.7 196,407.8 198,404.7 200,401.5 202,398.0 204,394.4 206,390.6 208,386.6 210,382.5 212,378.2 214,373.8 216,369.2 218,364.5 220,359.7 222,354.7 224,349.7 226,344.5 228,339.3 230,334.0 232,328.6 234,323.1 236,317.6 238,312.1 240,306.5 242,300.9 244,295.2 246,289.6 248,283.9 250,278.3 252,272.7 254,267.1 256,261.6 258,256.1 260,250.7 262,245.3 264,240.0 266,234.8 268,229.7 270,224.7 272,219.8 274,215.1 276,210.4 278,205.9 280,201.5 282,197.3 284,193.3 286,189.4 288,185.6 290,182.1 292,178.7 294,175.5 296,172.6 298,169.8 300,167.2 302,164.8 304,162.6 306,160.7 308,158.9 310,157.4 312,156.1 314,155.1 316,154.2 318,153.6 320,153.3 322,153.1 324,153.2 326,153.5 328,154.1 330,154.8 332,155.8 334,157.1 336,158.5 338,160.2 340,162.1 342,164.2 344,166.5 346,169.1 348,171.8 350,174.7 352,177.9 354,181.2 356,184.7 358,188.4 360,192.2 362,196.2 364,200.4 366,204.7 368,209.2 370,213.8 372,218.6 374,223.4 376,228.4 378,233.5 380,238.7 382,243.9 384,249.3 386,254.7 388,260.2 390,265.7 392,271.2 394,276.8 396,282.5 398,288.1 400,293.7 402,299.4 404,305.0 406,310.6 408,316.1 410,321.7 412,327.1 414,332.5 416,337.9 418,343.1 420,348.3 422,353.4 424,358.4 426,363.2 428,368.0 430,372.6 432,377.0 434,381.4 436,385.5 438,389.5 440,393.4 442,397.1 444,400.6 446,403.9 448,407.0 450,409.9 452,412.7 454,415.2 456,417.5 458,419.6 460,421.5 462,423.2 464,424.6 466,425.8 468,426.8 470,427.6 472,428.1 474,428.4 476,428.5 478,428.4 480,428.0 482,427.4 484,426.5 486,425.4 488,424.1 490,422.6 492,420.9 494,418.9 496,416.7 498,414.4 500,411.8 502,409.0 504,406.0 506,402.8 508,399.4 510,395.9 512,392.1 514,388.2 516,384.1 518,379.9 520,375.5 522,371.0 524,366.4 526,361.6 528,356.7 530,351.7 532,346.6 534,341.4 536,336.1 538,330.7 540,325.3 542,319.8 544,314.3 546,308.7 548,303.1 550,297.5 552,291.8 554,286.2 556,280.6 558,275.0 560,269.4 562,263.8 564,258.3 566,252.9 568,247.5 570,242.2 572,236.9 574,231.8 576,226.7 578,221.8 580,217.0 582,212.3 584,207.7 586,203.3 588,199.0 590,194.9 592,190.9 594,187.1 596,183.5 598,180.0 600,176.8 602,173.7 604,170.9 606,168.2 608,165.7 610,163.5 612,161.4 614,159.6 616,158.0 618,156.6 620,155.5 622,154.5 624,153.8 626,153.4 628,153.1 630,153.1 632,153.4 634,153.8 636,154.5 638,155.4 640,156.5 642,157.9 644,159.5 646,161.3 648,163.3 650,165.6 652,168.0 654,170.7 656,173.5 658,176.6 660,179.8 662,183.3 664,186.9 666,190.7 668,194.6 670,198.7 672,203.0 674,207.4 676,212.0 678,216.7 680,221.5 682,226.4 684,231.4 686,236.6 688,241.8 690,247.1 692,252.5 694,258.0 696,263.5 698,269.0 700,274.6 702,280.2 704,285.8 706,291.5 708,297.1 710,302.7 712,308.3 714,313.9 716,319.5 718,325.0 720,330.4 722,335.8 724,341.1 726,346.3 728,351.4 730,356.4 732,361.3 734,366.1 736,370.7 738,375.3 740,379.6 742,383.9 744,388.0 746,391.9 748,395.6 750,399.2 752,402.6 754,405.8 756,408.8 758,411.6 760,414.2 762,416.6 764,418.8 766,420.8 768,422.5 770,424.1 772,425.4 774,426.5 776,427.3 778,427.9 780,428.3 782,428.5 784,428.4 786,428.2 788,427.6 790,426.9 792,425.9 794,424.7 796,423.3 798,421.6 800,419.7 802,417.6 804,415.3 806,412.8 808,410.1 810,407.2 812,404.1 814,400.8 816,397.3 818,393.6 820,389.8 822,385.8 824,381.6 826,377.3 828,372.9 830,368.3 832,363.5 834,358.7 836,353.7 838,348.6 840,343.5 842,338.2 844,332.9 846,327.5 848,322.0 850,316.5"/><path d="M84,291.3 86,292.6 88,294.8 90,297.7 92,301.1 94,305.0 96,309.2 98,313.7 100,318.4 102,323.3 104,328.3 106,333.3 108,338.4 110,343.5 112,348.6 114,353.7 116,358.7 118,363.6 120,368.5 122,373.2 124,377.8 126,382.3 128,386.7 130,390.9 132,394.9 134,398.8 136,402.5 138,406.0 140,409.3 142,412.5 144,415.4 146,418.1 148,420.7 150,423.0 152,425.0 154,426.9 156,428.5 158,429.9 160,431.1 162,432.0 164,432.7 166,433.2 168,433.4 170,433.4 172,433.1 174,432.6 176,431.9 178,430.9 180,429.7 182,428.3 184,426.6 186,424.7 188,422.6 190,420.3 192,417.7 194,415.0 196,412.0 198,408.8 200,405.4 202,401.9 204,398.1 206,394.2 208,390.1 210,385.8 212,381.4 214,376.8 216,372.0 218,367.2 220,362.2 222,357.1 224,351.9 226,346.5 228,341.1 230,335.6 232,330.0 234,324.4 236,318.7 238,312.9 240,307.2 242,301.4 244,295.5 246,289.7 248,283.9 250,278.0 252,272.2 254,266.5 256,260.8 258,255.1 260,249.5 262,243.9 264,238.4 266,233.1 268,227.8 270,222.6 272,217.6 274,212.6 276,207.8 278,203.1 280,198.6 282,194.3 284,190.1 286,186.0 288,182.2 290,178.5 292,175.0 294,171.7 296,168.6 298,165.7 300,163.1 302,160.6 304,158.4 306,156.3 308,154.5 310,153.0 312,151.6 314,150.5 316,149.7 318,149.0 320,148.7 322,148.5 324,148.6 326,148.9 328,149.5 330,150.3 332,151.3 334,152.6 336,154.1 338,155.8 340,157.8 342,160.0 344,162.4 346,165.0 348,167.8 350,170.9 352,174.1 354,177.6 356,181.2 358,185.0 360,189.0 362,193.1 364,197.5 366,201.9 368,206.6 370,211.3 372,216.2 374,221.3 376,226.4 378,231.7 380,237.0 382,242.5 384,248.0 386,253.6 388,259.2 390,265.0 392,270.7 394,276.5 396,282.3 398,288.2 400,294.0 402,299.8 404,305.6 406,311.4 408,317.2 410,322.9 412,328.6 414,334.1 416,339.7 418,345.1 420,350.5 422,355.7 424,360.9 426,365.9 428,370.8 430,375.5 432,380.2 434,384.6 436,389.0 438,393.1 440,397.1 442,400.9 444,404.5 446,407.9 448,411.2 450,414.2 452,417.0 454,419.6 456,422.0 458,424.2 460,426.2 462,427.9 464,429.4 466,430.6 468,431.7 470,432.5 472,433.0 474,433.3 476,433.4 478,433.3 480,432.9 482,432.2 484,431.4 486,430.3 488,428.9 490,427.3 492,425.5 494,423.5 496,421.3 498,418.8 500,416.1 502,413.2 504,410.1 506,406.8 508,403.3 510,399.6 512,395.8 514,391.7 516,387.5 518,383.2 520,378.6 522,374.0 524,369.1 526,364.2 528,359.1 530,354.0 532,348.7 534,343.3 536,337.8 538,332.3 540,326.7 542,321.0 544,315.3 546,309.5 548,303.7 550,297.9 552,292.0 554,286.2 556,280.4 558,274.6 560,268.8 562,263.0 564,257.3 566,251.7 568,246.1 570,240.6 572,235.2 574,229.9 576,224.7 578,219.6 580,214.6 582,209.7 584,205.0 586,200.4 588,196.0 590,191.7 592,187.6 594,183.7 596,179.9 598,176.4 600,173.0 602,169.8 604,166.9 606,164.1 608,161.6 610,159.2 612,157.1 614,155.2 616,153.6 618,152.1 620,151.0 622,150.0 624,149.3 626,148.8 628,148.5 630,148.5 632,148.8 634,149.2 636,149.9 638,150.9 640,152.1 642,153.5 644,155.1 646,157.0 648,159.1 650,161.4 652,163.9 654,166.7 656,169.6 658,172.8 660,176.2 662,179.7 664,183.4 666,187.4 668,191.4 670,195.7 672,200.1 674,204.7 676,209.4 678,214.3 680,219.2 682,224.3 684,229.5 686,234.9 688,240.3 690,245.8 692,251.3 694,257.0 696,262.7 698,268.4 700,274.2 702,280.0 704,285.8 706,291.7 708,297.5 710,303.3 712,309.1 714,314.9 716,320.6 718,326.3 720,331.9 722,337.5 724,342.9 726,348.3 728,353.6 730,358.8 732,363.9 734,368.8 736,373.7 738,378.3 740,382.9 742,387.2 744,391.5 746,395.5 748,399.4 750,403.1 752,406.6 754,409.9 756,413.0 758,415.9 760,418.6 762,421.1 764,423.4 766,425.4 768,427.2 770,428.8 772,430.2 774,431.3 776,432.2 778,432.8 780,433.2 782,433.4 784,433.4 786,433.1 788,432.5 790,431.7 792,430.7 794,429.5 796,428.0 798,426.3 800,424.3 802,422.2 804,419.8 806,417.2 808,414.4 810,411.4 812,408.2 814,404.7 816,401.1 818,397.3 820,393.4 822,389.2 824,384.9 826,380.5 828,375.8 830,371.1 832,366.2 834,361.2 836,356.0 838,350.8 840,345.5 842,340.0 844,334.5 846,328.9 848,323.3 850,317.5"/><path d="M84,291.6 86,292.9 88,295.0 90,297.7 92,300.9 94,304.6 96,308.7 98,312.9 100,317.4 102,322.1 104,326.8 106,331.6 108,336.5 110,341.3 112,346.2 114,351.0 116,355.7 118,360.4 120,365.0 122,369.5 124,373.9 126,378.2 128,382.3 130,386.3 132,390.2 134,393.9 136,397.4 138,400.7 140,403.9 142,406.9 144,409.7 146,412.3 148,414.7 150,416.9 152,418.8 154,420.6 156,422.2 158,423.5 160,424.6 162,425.5 164,426.2 166,426.6 168,426.8 170,426.8 172,426.5 174,426.1 176,425.4 178,424.5 180,423.3 182,421.9 184,420.4 186,418.6 188,416.5 190,414.3 192,411.9 194,409.3 196,406.4 198,403.4 200,400.2 202,396.8 204,393.2 206,389.5 208,385.6 210,381.5 212,377.3 214,372.9 216,368.4 218,363.8 220,359.1 222,354.2 224,349.2 226,344.2 228,339.0 230,333.8 232,328.5 234,323.1 236,317.7 238,312.2 240,306.7 242,301.2 244,295.6 246,290.1 248,284.5 250,279.0 252,273.5 254,268.0 256,262.6 258,257.2 260,251.8 262,246.5 264,241.3 266,236.2 268,231.2 270,226.3 272,221.5 274,216.8 276,212.2 278,207.8 280,203.5 282,199.3 284,195.3 286,191.5 288,187.8 290,184.3 292,181.0 294,177.9 296,174.9 298,172.2 300,169.6 302,167.3 304,165.2 306,163.2 308,161.5 310,160.0 312,158.8 314,157.7 316,156.9 318,156.3 320,155.9 322,155.8 324,155.9 326,156.2 328,156.7 330,157.5 332,158.5 334,159.7 336,161.1 338,162.8 340,164.6 342,166.7 344,169.0 346,171.5 348,174.2 350,177.1 352,180.2 354,183.4 356,186.9 358,190.5 360,194.3 362,198.2 364,202.4 366,206.6 368,211.0 370,215.6 372,220.2 374,225.0 376,229.9 378,234.9 380,240.0 382,245.2 384,250.4 386,255.7 388,261.1 390,266.6 392,272.0 394,277.6 396,283.1 398,288.6 400,294.2 402,299.7 404,305.3 406,310.8 408,316.2 410,321.7 412,327.1 414,332.4 416,337.6 418,342.8 420,347.9 422,352.9 424,357.8 426,362.6 428,367.2 430,371.8 432,376.2 434,380.4 436,384.5 438,388.5 440,392.2 442,395.9 444,399.3 446,402.6 448,405.6 450,408.5 452,411.2 454,413.7 456,416.0 458,418.0 460,419.9 462,421.5 464,423.0 466,424.2 468,425.2 470,425.9 472,426.4 474,426.7 476,426.8 478,426.7 480,426.3 482,425.7 484,424.8 486,423.8 488,422.5 490,421.0 492,419.3 494,417.4 496,415.2 498,412.9 500,410.3 502,407.6 504,404.6 506,401.5 508,398.2 510,394.7 512,391.0 514,387.2 516,383.2 518,379.0 520,374.7 522,370.2 524,365.7 526,361.0 528,356.2 530,351.2 532,346.2 534,341.1 536,335.9 538,330.6 540,325.3 542,319.9 544,314.4 546,308.9 548,303.4 550,297.9 552,292.3 554,286.8 556,281.2 558,275.7 560,270.2 562,264.7 564,259.3 566,254.0 568,248.6 570,243.4 572,238.3 574,233.2 576,228.2 578,223.4 580,218.6 582,214.0 584,209.5 586,205.2 588,201.0 590,196.9 592,193.0 594,189.3 596,185.7 598,182.3 600,179.1 602,176.1 604,173.3 606,170.6 608,168.2 610,166.0 612,164.0 614,162.2 616,160.6 618,159.3 620,158.1 622,157.2 624,156.5 626,156.1 628,155.8 630,155.8 632,156.0 634,156.5 636,157.2 638,158.1 640,159.2 642,160.5 644,162.1 646,163.9 648,165.9 650,168.1 652,170.5 654,173.1 656,175.9 658,178.9 660,182.1 662,185.5 664,189.0 666,192.7 668,196.6 670,200.7 672,204.9 674,209.2 676,213.7 678,218.3 680,223.1 682,227.9 684,232.9 686,237.9 688,243.1 690,248.3 692,253.6 694,259.0 696,264.4 698,269.8 700,275.3 702,280.9 704,286.4 706,292.0 708,297.5 710,303.0 712,308.6 714,314.1 716,319.5 718,324.9 720,330.3 722,335.5 724,340.7 726,345.9 728,350.9 730,355.8 732,360.7 734,365.4 736,370.0 738,374.4 740,378.7 742,382.9 744,386.9 746,390.8 748,394.4 750,398.0 752,401.3 754,404.4 756,407.4 758,410.2 760,412.7 762,415.1 764,417.2 766,419.2 768,420.9 770,422.4 772,423.7 774,424.8 776,425.6 778,426.3 780,426.6 782,426.8 784,426.7 786,426.5 788,425.9 790,425.2 792,424.2 794,423.1 796,421.6 798,420.0 800,418.2 802,416.1 804,413.8 806,411.4 808,408.7 810,405.8 812,402.8 814,399.5 816,396.1 818,392.5 820,388.7 822,384.8 824,380.7 826,376.4 828,372.0 830,367.5 832,362.9 834,358.1 836,353.2 838,348.2 840,343.1 842,338.0 844,332.7 846,327.4 848,322.0 850,316.6"/><path d="M84,293.6 86,295.0 88,297.1 90,299.9 92,303.3 94,307.1 96,311.3 98,315.7 100,320.3 102,325.1 104,330.0 106,335.0 108,340.0 110,345.0 112,350.0 114,355.0 116,359.9 118,364.8 120,369.5 122,374.2 124,378.7 126,383.2 128,387.4 130,391.6 132,395.5 134,399.4 136,403.0 138,406.5 140,409.7 142,412.8 144,415.7 146,418.4 148,420.9 150,423.1 152,425.2 154,427.0 156,428.6 158,430.0 160,431.1 162,432.1 164,432.7 166,433.2 168,433.4 170,433.4 172,433.1 174,432.7 176,431.9 178,431.0 180,429.8 182,428.4 184,426.8 186,424.9 188,422.8 190,420.5 192,418.0 194,415.3 196,412.3 198,409.2 200,405.9 202,402.4 204,398.7 206,394.8 208,390.8 210,386.6 212,382.2 214,377.7 216,373.1 218,368.3 220,363.4 222,358.3 224,353.2 226,348.0 228,342.6 230,337.2 232,331.7 234,326.2 236,320.6 238,314.9 240,309.3 242,303.5 244,297.8 246,292.1 248,286.3 250,280.6 252,274.9 254,269.2 256,263.6 258,258.0 260,252.5 262,247.0 264,241.7 266,236.4 268,231.2 270,226.1 272,221.1 274,216.3 276,211.5 278,206.9 280,202.5 282,198.2 284,194.1 286,190.1 288,186.3 290,182.7 292,179.3 294,176.0 296,173.0 298,170.2 300,167.5 302,165.1 304,162.9 306,160.9 308,159.1 310,157.6 312,156.3 314,155.2 316,154.4 318,153.7 320,153.4 322,153.2 324,153.3 326,153.6 328,154.2 330,155.0 332,156.0 334,157.2 336,158.7 338,160.4 340,162.3 342,164.5 344,166.9 346,169.4 348,172.2 350,175.2 352,178.4 354,181.8 356,185.3 358,189.1 360,193.0 362,197.1 364,201.3 366,205.8 368,210.3 370,215.0 372,219.8 374,224.8 376,229.8 378,235.0 380,240.3 382,245.6 384,251.1 386,256.6 388,262.1 390,267.7 392,273.4 394,279.1 396,284.8 398,290.6 400,296.3 402,302.0 404,307.7 406,313.4 408,319.1 410,324.7 412,330.3 414,335.8 416,341.2 418,346.6 420,351.8 422,357.0 424,362.1 426,367.0 428,371.8 430,376.5 432,381.0 434,385.4 436,389.7 438,393.8 440,397.7 442,401.4 444,405.0 446,408.4 448,411.5 450,414.5 452,417.3 454,419.9 456,422.2 458,424.4 460,426.3 462,428.0 464,429.5 466,430.7 468,431.7 470,432.5 472,433.0 474,433.4 476,433.4 478,433.3 480,432.9 482,432.3 484,431.4 486,430.3 488,429.0 490,427.4 492,425.7 494,423.7 496,421.5 498,419.0 500,416.4 502,413.5 504,410.5 506,407.3 508,403.8 510,400.2 512,396.4 514,392.4 516,388.3 518,384.0 520,379.5 522,374.9 524,370.2 526,365.3 528,360.4 530,355.3 532,350.1 534,344.8 536,339.4 538,333.9 540,328.4 542,322.8 544,317.2 546,311.5 548,305.8 550,300.1 552,294.4 554,288.6 556,282.9 558,277.2 560,271.5 562,265.8 564,260.2 566,254.7 568,249.2 570,243.8 572,238.5 574,233.2 576,228.1 578,223.1 580,218.2 582,213.4 584,208.8 586,204.3 588,199.9 590,195.7 592,191.7 594,187.8 596,184.1 598,180.6 600,177.3 602,174.2 604,171.3 606,168.5 608,166.0 610,163.8 612,161.7 614,159.8 616,158.2 618,156.8 620,155.6 622,154.7 624,154.0 626,153.5 628,153.2 630,153.2 632,153.5 634,153.9 636,154.6 638,155.5 640,156.7 642,158.1 644,159.7 646,161.6 648,163.6 650,165.9 652,168.4 654,171.1 656,174.0 658,177.1 660,180.4 662,183.9 664,187.6 666,191.4 668,195.4 670,199.6 672,204.0 674,208.5 676,213.1 678,217.9 680,222.8 682,227.8 684,232.9 686,238.1 688,243.5 690,248.9 692,254.3 694,259.9 696,265.5 698,271.1 700,276.8 702,282.5 704,288.3 706,294.0 708,299.7 710,305.5 712,311.2 714,316.8 716,322.5 718,328.1 720,333.6 722,339.1 724,344.4 726,349.7 728,354.9 730,360.0 732,365.0 734,369.9 736,374.6 738,379.2 740,383.7 742,388.0 744,392.2 746,396.1 748,400.0 750,403.6 752,407.0 754,410.3 756,413.4 758,416.2 760,418.9 762,421.3 764,423.5 766,425.5 768,427.3 770,428.9 772,430.2 774,431.3 776,432.2 778,432.8 780,433.3 782,433.4 784,433.4 786,433.1 788,432.5 790,431.8 792,430.8 794,429.5 796,428.1 798,426.4 800,424.5 802,422.4 804,420.0 806,417.5 808,414.7 810,411.7 812,408.6 814,405.2 816,401.7 818,397.9 820,394.0 822,390.0 824,385.7 826,381.3 828,376.8 830,372.1 832,367.3 834,362.4 836,357.3 838,352.2 840,346.9 842,341.6 844,336.1 846,330.6 848,325.1 850,319.5"/><path d="M84,296.8 86,298.0 88,300.1 90,302.9 92,306.2 94,309.9 96,314.0 98,318.3 100,322.8 102,327.5 104,332.3 106,337.1 108,342.0 110,346.9 112,351.8 114,356.7 116,361.5 118,366.2 120,370.9 122,375.4 124,379.9 126,384.2 128,388.3 130,392.4 132,396.3 134,400.0 136,403.5 138,406.9 140,410.1 142,413.1 144,416.0 146,418.6 148,421.0 150,423.2 152,425.2 154,427.0 156,428.6 158,429.9 160,431.0 162,431.9 164,432.6 166,433.0 168,433.2 170,433.2 172,433.0 174,432.5 176,431.8 178,430.9 180,429.7 182,428.3 184,426.7 186,424.9 188,422.9 190,420.6 192,418.2 194,415.5 196,412.7 198,409.6 200,406.4 202,402.9 204,399.3 206,395.6 208,391.6 210,387.5 212,383.3 214,378.9 216,374.3 218,369.6 220,364.9 222,359.9 224,354.9 226,349.8 228,344.6 230,339.3 232,334.0 234,328.6 236,323.1 238,317.6 240,312.0 242,306.4 244,300.8 246,295.2 248,289.6 250,284.0 252,278.5 254,272.9 256,267.4 258,262.0 260,256.6 262,251.3 264,246.0 266,240.9 268,235.8 270,230.8 272,226.0 274,221.2 276,216.6 278,212.1 280,207.8 282,203.6 284,199.6 286,195.7 288,192.0 290,188.4 292,185.1 294,181.9 296,179.0 298,176.2 300,173.6 302,171.3 304,169.1 306,167.2 308,165.5 310,163.9 312,162.7 314,161.6 316,160.8 318,160.2 320,159.8 322,159.7 324,159.7 326,160.1 328,160.6 330,161.4 332,162.4 334,163.6 336,165.0 338,166.7 340,168.6 342,170.7 344,173.0 346,175.5 348,178.2 350,181.1 352,184.2 354,187.5 356,191.0 358,194.7 360,198.5 362,202.5 364,206.7 366,211.0 368,215.4 370,220.0 372,224.7 374,229.5 376,234.5 378,239.5 380,244.7 382,249.9 384,255.2 386,260.6 388,266.0 390,271.5 392,277.0 394,282.6 396,288.2 398,293.8 400,299.4 402,305.0 404,310.5 406,316.1 408,321.6 410,327.1 412,332.5 414,337.9 416,343.2 418,348.4 420,353.6 422,358.6 424,363.6 426,368.4 428,373.1 430,377.7 432,382.1 434,386.4 436,390.6 438,394.5 440,398.4 442,402.0 444,405.5 446,408.8 448,411.9 450,414.8 452,417.5 454,420.0 456,422.3 458,424.4 460,426.3 462,427.9 464,429.4 466,430.6 468,431.6 470,432.3 472,432.9 474,433.2 476,433.3 478,433.1 480,432.7 482,432.1 484,431.3 486,430.2 488,428.9 490,427.4 492,425.7 494,423.7 496,421.6 498,419.2 500,416.6 502,413.8 504,410.9 506,407.7 508,404.3 510,400.8 512,397.1 514,393.2 516,389.2 518,385.0 520,380.6 522,376.1 524,371.5 526,366.8 528,361.9 530,356.9 532,351.9 534,346.7 536,341.4 538,336.1 540,330.7 542,325.3 544,319.8 546,314.2 548,308.7 550,303.1 552,297.5 554,291.9 556,286.3 558,280.7 560,275.2 562,269.6 564,264.2 566,258.7 568,253.4 570,248.1 572,242.9 574,237.8 576,232.8 578,227.9 580,223.1 582,218.4 584,213.9 586,209.5 588,205.2 590,201.1 592,197.2 594,193.4 596,189.8 598,186.4 600,183.2 602,180.1 604,177.3 606,174.6 608,172.2 610,170.0 612,167.9 614,166.1 616,164.5 618,163.2 620,162.0 622,161.1 624,160.4 626,159.9 628,159.7 630,159.7 632,159.9 634,160.4 636,161.0 638,161.9 640,163.1 642,164.4 644,166.0 646,167.8 648,169.8 650,172.0 652,174.5 654,177.1 656,179.9 658,183.0 660,186.2 662,189.6 664,193.2 666,197.0 668,200.9 670,205.0 672,209.2 674,213.6 676,218.1 678,222.8 680,227.6 682,232.5 684,237.5 686,242.6 688,247.8 690,253.1 692,258.4 694,263.8 696,269.3 698,274.8 700,280.3 702,285.9 704,291.5 706,297.1 708,302.7 710,308.3 712,313.9 714,319.4 716,324.9 718,330.4 720,335.8 722,341.1 724,346.4 726,351.5 728,356.6 730,361.6 732,366.5 734,371.2 736,375.9 738,380.4 740,384.7 742,388.9 744,393.0 746,396.9 748,400.6 750,404.1 752,407.5 754,410.7 756,413.7 758,416.4 760,419.0 762,421.4 764,423.6 766,425.6 768,427.3 770,428.8 772,430.1 774,431.2 776,432.1 778,432.7 780,433.1 782,433.3 784,433.2 786,432.9 788,432.4 790,431.6 792,430.7 794,429.5 796,428.0 798,426.4 800,424.5 802,422.5 804,420.2 806,417.7 808,415.0 810,412.1 812,409.0 814,405.7 816,402.2 818,398.6 820,394.8 822,390.8 824,386.7 826,382.4 828,378.0 830,373.4 832,368.7 834,363.9 836,358.9 838,353.9 840,348.8 842,343.6 844,338.3 846,332.9 848,327.5 850,322.0"/><path d="M84,296.8 86,298.0 88,300.1 90,302.8 92,306.1 94,309.8 96,313.8 98,318.1 100,322.5 102,327.1 104,331.9 106,336.7 108,341.5 110,346.4 112,351.2 114,356.0 116,360.7 118,365.4 120,370.0 122,374.5 124,378.9 126,383.1 128,387.3 130,391.3 132,395.1 134,398.8 136,402.3 138,405.6 140,408.8 142,411.8 144,414.6 146,417.2 148,419.5 150,421.7 152,423.7 154,425.5 156,427.0 158,428.3 160,429.5 162,430.3 164,431.0 166,431.4 168,431.6 170,431.6 172,431.4 174,430.9 176,430.2 178,429.3 180,428.2 182,426.8 184,425.2 186,423.4 188,421.4 190,419.2 192,416.8 194,414.1 196,411.3 198,408.3 200,405.1 202,401.7 204,398.1 206,394.4 208,390.5 210,386.5 212,382.3 214,377.9 216,373.4 218,368.8 220,364.1 222,359.2 224,354.3 226,349.2 228,344.1 230,338.8 232,333.5 234,328.2 236,322.8 238,317.3 240,311.8 242,306.3 244,300.8 246,295.3 248,289.7 250,284.2 252,278.7 254,273.2 256,267.8 258,262.4 260,257.1 262,251.8 264,246.6 266,241.5 268,236.5 270,231.6 272,226.8 274,222.1 276,217.6 278,213.1 280,208.8 282,204.7 284,200.7 286,196.9 288,193.2 290,189.7 292,186.4 294,183.3 296,180.4 298,177.6 300,175.1 302,172.8 304,170.6 306,168.7 308,167.0 310,165.5 312,164.3 314,163.2 316,162.4 318,161.8 320,161.4 322,161.3 324,161.4 326,161.7 328,162.2 330,163.0 332,164.0 334,165.2 336,166.6 338,168.2 340,170.1 342,172.2 344,174.5 346,176.9 348,179.6 350,182.5 352,185.6 354,188.8 356,192.3 358,195.9 360,199.7 362,203.6 364,207.7 366,212.0 368,216.4 370,220.9 372,225.6 374,230.3 376,235.2 378,240.2 380,245.3 382,250.4 384,255.7 386,261.0 388,266.4 390,271.8 392,277.3 394,282.8 396,288.3 398,293.8 400,299.3 402,304.9 404,310.4 406,315.9 408,321.3 410,326.8 412,332.1 414,337.4 416,342.7 418,347.9 420,352.9 422,357.9 424,362.8 426,367.6 428,372.2 430,376.7 432,381.1 434,385.4 436,389.5 438,393.4 440,397.2 442,400.8 444,404.2 446,407.5 448,410.5 450,413.4 452,416.1 454,418.6 456,420.8 458,422.9 460,424.8 462,426.4 464,427.8 466,429.0 468,430.0 470,430.8 472,431.3 474,431.6 476,431.7 478,431.5 480,431.1 482,430.5 484,429.7 486,428.6 488,427.4 490,425.9 492,424.2 494,422.2 496,420.1 498,417.8 500,415.2 502,412.5 504,409.5 506,406.4 508,403.1 510,399.6 512,395.9 514,392.1 516,388.1 518,384.0 520,379.7 522,375.2 524,370.7 526,366.0 528,361.2 530,356.2 532,351.2 534,346.1 536,340.9 538,335.7 540,330.3 542,325.0 544,319.5 546,314.0 548,308.5 550,303.0 552,297.5 554,291.9 556,286.4 558,280.9 560,275.4 562,270.0 564,264.6 566,259.2 568,253.9 570,248.7 572,243.6 574,238.5 576,233.6 578,228.7 580,224.0 582,219.4 584,214.9 586,210.5 588,206.3 590,202.3 592,198.4 594,194.7 596,191.1 598,187.7 600,184.5 602,181.5 604,178.7 606,176.1 608,173.7 610,171.5 612,169.4 614,167.7 616,166.1 618,164.7 620,163.6 622,162.7 624,162.0 626,161.5 628,161.3 630,161.3 632,161.5 634,162.0 636,162.6 638,163.5 640,164.7 642,166.0 644,167.6 646,169.3 648,171.3 650,173.5 652,175.9 654,178.5 656,181.3 658,184.3 660,187.5 662,190.9 664,194.4 666,198.1 668,202.0 670,206.1 672,210.3 674,214.6 676,219.1 678,223.7 680,228.4 682,233.2 684,238.2 686,243.2 688,248.4 690,253.6 692,258.9 694,264.2 696,269.6 698,275.1 700,280.5 702,286.1 704,291.6 706,297.1 708,302.7 710,308.2 712,313.7 714,319.2 716,324.6 718,330.0 720,335.3 722,340.6 724,345.8 726,350.9 728,355.9 730,360.9 732,365.7 734,370.4 736,374.9 738,379.4 740,383.7 742,387.8 744,391.8 746,395.7 748,399.4 750,402.9 752,406.2 754,409.3 756,412.3 758,415.0 760,417.6 762,420.0 764,422.1 766,424.1 768,425.8 770,427.3 772,428.6 774,429.6 776,430.5 778,431.1 780,431.5 782,431.7 784,431.6 786,431.3 788,430.8 790,430.1 792,429.1 794,427.9 796,426.5 798,424.9 800,423.0 802,421.0 804,418.7 806,416.3 808,413.6 810,410.7 812,407.7 814,404.4 816,401.0 818,397.4 820,393.6 822,389.7 824,385.6 826,381.4 828,377.0 830,372.5 832,367.9 834,363.1 836,358.2 838,353.3 840,348.2 842,343.0 844,337.8 846,332.5 848,327.1 850,321.7"/><path d="M84,296.8 86,298.0 88,300.1 90,302.8 92,306.0 94,309.6 96,313.6 98,317.8 100,322.3 102,326.8 104,331.5 106,336.3 108,341.0 110,345.8 112,350.6 114,355.4 116,360.1 118,364.7 120,369.2 122,373.7 124,378.0 126,382.2 128,386.3 130,390.3 132,394.1 134,397.7 136,401.2 138,404.5 140,407.6 142,410.6 144,413.3 146,415.9 148,418.2 150,420.4 152,422.3 154,424.1 156,425.6 158,426.9 160,428.0 162,428.9 164,429.6 166,430.0 168,430.2 170,430.2 172,430.0 174,429.5 176,428.8 178,427.9 180,426.8 182,425.4 184,423.9 186,422.1 188,420.1 190,417.9 192,415.5 194,412.9 196,410.1 198,407.1 200,403.9 202,400.6 204,397.1 206,393.4 208,389.5 210,385.5 212,381.3 214,377.0 216,372.6 218,368.0 220,363.3 222,358.5 224,353.6 226,348.6 228,343.6 230,338.4 232,333.2 234,327.9 236,322.5 238,317.1 240,311.7 242,306.2 244,300.8 246,295.3 248,289.8 250,284.3 252,278.9 254,273.5 256,268.1 258,262.8 260,257.5 262,252.3 264,247.2 266,242.1 268,237.2 270,232.3 272,227.6 274,222.9 276,218.4 278,214.0 280,209.8 282,205.7 284,201.7 286,198.0 288,194.3 290,190.9 292,187.6 294,184.5 296,181.6 298,178.9 300,176.4 302,174.1 304,172.0 306,170.1 308,168.4 310,166.9 312,165.7 314,164.6 316,163.8 318,163.2 320,162.9 322,162.7 324,162.8 326,163.1 328,163.7 330,164.4 332,165.4 334,166.6 336,168.0 338,169.6 340,171.5 342,173.5 344,175.8 346,178.2 348,180.9 350,183.7 352,186.8 354,190.0 356,193.4 358,197.0 360,200.7 362,204.6 364,208.7 366,212.9 368,217.2 370,221.7 372,226.3 374,231.0 376,235.9 378,240.8 380,245.8 382,250.9 384,256.1 386,261.4 388,266.7 390,272.1 392,277.5 394,282.9 396,288.4 398,293.8 400,299.3 402,304.8 404,310.2 406,315.7 408,321.1 410,326.5 412,331.8 414,337.0 416,342.2 418,347.3 420,352.3 422,357.3 424,362.1 426,366.8 428,371.4 430,375.9 432,380.2 434,384.4 436,388.5 438,392.4 440,396.1 442,399.7 444,403.1 446,406.3 448,409.3 450,412.2 452,414.8 454,417.3 456,419.5 458,421.6 460,423.4 462,425.0 464,426.4 466,427.6 468,428.6 470,429.3 472,429.8 474,430.1 476,430.2 478,430.1 480,429.7 482,429.1 484,428.3 486,427.2 488,426.0 490,424.5 492,422.8 494,420.9 496,418.8 498,416.5 500,414.0 502,411.2 504,408.3 506,405.2 508,402.0 510,398.5 512,394.9 514,391.1 516,387.1 518,383.0 520,378.8 522,374.4 524,369.9 526,365.2 528,360.5 530,355.6 532,350.7 534,345.6 536,340.5 538,335.3 540,330.0 542,324.7 544,319.3 546,313.9 548,308.4 550,303.0 552,297.5 554,292.0 556,286.5 558,281.1 560,275.7 562,270.3 564,264.9 566,259.6 568,254.4 570,249.2 572,244.1 574,239.1 576,234.2 578,229.4 580,224.8 582,220.2 584,215.8 586,211.5 588,207.3 590,203.3 592,199.5 594,195.8 596,192.2 598,188.9 600,185.7 602,182.8 604,180.0 606,177.4 608,175.0 610,172.8 612,170.8 614,169.1 616,167.5 618,166.2 620,165.0 622,164.1 624,163.5 626,163.0 628,162.8 630,162.8 632,163.0 634,163.4 636,164.1 638,165.0 640,166.1 642,167.4 644,168.9 646,170.7 648,172.7 650,174.8 652,177.2 654,179.8 656,182.6 658,185.5 660,188.7 662,192.0 664,195.5 666,199.2 668,203.1 670,207.0 672,211.2 674,215.5 676,219.9 678,224.5 680,229.1 682,233.9 684,238.8 686,243.8 688,248.9 690,254.0 692,259.3 694,264.6 696,269.9 698,275.3 700,280.7 702,286.2 704,291.6 706,297.1 708,302.6 710,308.1 712,313.5 714,318.9 716,324.3 718,329.6 720,334.9 722,340.1 724,345.3 726,350.3 728,355.3 730,360.2 732,364.9 734,369.6 736,374.1 738,378.5 740,382.8 742,386.9 744,390.8 746,394.6 748,398.3 750,401.7 752,405.0 754,408.1 756,411.1 758,413.8 760,416.3 762,418.7 764,420.8 766,422.7 768,424.4 770,425.9 772,427.2 774,428.2 776,429.1 778,429.7 780,430.1 782,430.2 784,430.2 786,429.9 788,429.4 790,428.6 792,427.7 794,426.5 796,425.1 798,423.5 800,421.7 802,419.7 804,417.4 806,415.0 808,412.3 810,409.5 812,406.5 814,403.3 816,399.9 818,396.3 820,392.6 822,388.7 824,384.7 826,380.5 828,376.2 830,371.7 832,367.1 834,362.4 836,357.6 838,352.7 840,347.6 842,342.5 844,337.4 846,332.1 848,326.8 850,321.4"/><path d="M84,296.9 86,298.2 88,300.3 90,303.1 92,306.4 94,310.1 96,314.2 98,318.5 100,323.0 102,327.7 104,332.5 106,337.4 108,342.3 110,347.2 112,352.1 114,356.9 116,361.7 118,366.5 120,371.1 122,375.7 124,380.1 126,384.4 128,388.6 130,392.6 132,396.5 134,400.3 136,403.8 138,407.2 140,410.4 142,413.4 144,416.2 146,418.9 148,421.3 150,423.5 152,425.5 154,427.3 156,428.9 158,430.2 160,431.3 162,432.2 164,432.9 166,433.3 168,433.6 170,433.5 172,433.3 174,432.8 176,432.1 178,431.2 180,430.0 182,428.6 184,427.0 186,425.2 188,423.2 190,420.9 192,418.5 194,415.8 196,413.0 198,409.9 200,406.7 202,403.2 204,399.6 206,395.8 208,391.9 210,387.8 212,383.5 214,379.1 216,374.6 218,369.9 220,365.1 222,360.2 224,355.2 226,350.0 228,344.8 230,339.5 232,334.2 234,328.8 236,323.3 238,317.8 240,312.2 242,306.6 244,301.0 246,295.4 248,289.8 250,284.2 252,278.6 254,273.1 256,267.6 258,262.1 260,256.7 262,251.4 264,246.1 266,241.0 268,235.9 270,230.9 272,226.0 274,221.3 276,216.7 278,212.2 280,207.8 282,203.7 284,199.6 286,195.7 288,192.0 290,188.5 292,185.1 294,182.0 296,179.0 298,176.2 300,173.7 302,171.3 304,169.1 306,167.2 308,165.5 310,164.0 312,162.7 314,161.6 316,160.8 318,160.2 320,159.8 322,159.7 324,159.8 326,160.1 328,160.6 330,161.4 332,162.4 334,163.6 336,165.1 338,166.7 340,168.6 342,170.7 344,173.0 346,175.5 348,178.3 350,181.2 352,184.3 354,187.6 356,191.1 358,194.7 360,198.6 362,202.6 364,206.7 366,211.0 368,215.5 370,220.1 372,224.8 374,229.6 376,234.6 378,239.6 380,244.8 382,250.0 384,255.3 386,260.7 388,266.1 390,271.6 392,277.2 394,282.7 396,288.3 398,293.9 400,299.5 402,305.1 404,310.7 406,316.3 408,321.8 410,327.3 412,332.8 414,338.1 416,343.4 418,348.7 420,353.8 422,358.9 424,363.8 426,368.6 428,373.3 430,377.9 432,382.4 434,386.7 436,390.8 438,394.8 440,398.6 442,402.3 444,405.8 446,409.1 448,412.2 450,415.1 452,417.8 454,420.3 456,422.6 458,424.7 460,426.6 462,428.2 464,429.7 466,430.9 468,431.9 470,432.7 472,433.2 474,433.5 476,433.6 478,433.4 480,433.0 482,432.4 484,431.6 486,430.5 488,429.2 490,427.7 492,426.0 494,424.0 496,421.9 498,419.5 500,416.9 502,414.1 504,411.2 506,408.0 508,404.6 510,401.1 512,397.4 514,393.5 516,389.4 518,385.2 520,380.9 522,376.4 524,371.8 526,367.0 528,362.2 530,357.2 532,352.1 534,346.9 536,341.7 538,336.3 540,330.9 542,325.5 544,320.0 546,314.4 548,308.8 550,303.3 552,297.6 554,292.0 556,286.4 558,280.9 560,275.3 562,269.8 564,264.3 566,258.9 568,253.5 570,248.2 572,243.0 574,237.9 576,232.9 578,228.0 580,223.2 582,218.5 584,214.0 586,209.6 588,205.3 590,201.2 592,197.3 594,193.5 596,189.9 598,186.5 600,183.2 602,180.2 604,177.3 606,174.7 608,172.2 610,170.0 612,167.9 614,166.1 616,164.5 618,163.2 620,162.0 622,161.1 624,160.4 626,159.9 628,159.7 630,159.7 632,159.9 634,160.4 636,161.0 638,162.0 640,163.1 642,164.4 644,166.0 646,167.8 648,169.8 650,172.1 652,174.5 654,177.1 656,180.0 658,183.0 660,186.2 662,189.7 664,193.3 666,197.0 668,201.0 670,205.0 672,209.3 674,213.7 676,218.2 678,222.9 680,227.7 682,232.6 684,237.6 686,242.7 688,247.9 690,253.2 692,258.5 694,263.9 696,269.4 698,274.9 700,280.5 702,286.1 704,291.7 706,297.3 708,302.9 710,308.5 712,314.1 714,319.6 716,325.1 718,330.6 720,336.0 722,341.3 724,346.6 726,351.8 728,356.9 730,361.8 732,366.7 734,371.5 736,376.1 738,380.6 740,385.0 742,389.2 744,393.2 746,397.1 748,400.9 750,404.4 752,407.8 754,411.0 756,413.9 758,416.7 760,419.3 762,421.7 764,423.9 766,425.9 768,427.6 770,429.1 772,430.4 774,431.5 776,432.4 778,433.0 780,433.4 782,433.6 784,433.5 786,433.2 788,432.7 790,431.9 792,431.0 794,429.8 796,428.3 798,426.7 800,424.8 802,422.8 804,420.5 806,418.0 808,415.3 810,412.4 812,409.3 814,406.0 816,402.5 818,398.9 820,395.1 822,391.1 824,386.9 826,382.7 828,378.2 830,373.6 832,368.9 834,364.1 836,359.2 838,354.1 840,349.0 842,343.8 844,338.5 846,333.1 848,327.7 850,322.2"/><path d="M84,298.3 86,299.5 88,301.6 90,304.3 92,307.6 94,311.3 96,315.3 98,319.6 100,324.1 102,328.7 104,333.4 106,338.2 108,343.1 110,347.9 112,352.8 114,357.6 116,362.3 118,367.0 120,371.6 122,376.1 124,380.5 126,384.7 128,388.9 130,392.9 132,396.7 134,400.4 136,403.9 138,407.2 140,410.4 142,413.4 144,416.2 146,418.8 148,421.2 150,423.4 152,425.3 154,427.1 156,428.6 158,430.0 160,431.1 162,432.0 164,432.6 166,433.1 168,433.3 170,433.3 172,433.0 174,432.6 176,431.9 178,430.9 180,429.8 182,428.4 184,426.9 186,425.1 188,423.0 190,420.8 192,418.4 194,415.8 196,412.9 198,409.9 200,406.7 202,403.3 204,399.8 206,396.0 208,392.1 210,388.1 212,383.8 214,379.5 216,375.0 218,370.4 220,365.6 222,360.8 224,355.8 226,350.8 228,345.6 230,340.4 232,335.1 234,329.7 236,324.3 238,318.9 240,313.4 242,307.8 244,302.3 246,296.8 248,291.2 250,285.7 252,280.2 254,274.7 256,269.3 258,263.9 260,258.5 262,253.3 264,248.1 266,243.0 268,238.0 270,233.0 272,228.2 274,223.5 276,219.0 278,214.5 280,210.2 282,206.1 284,202.1 286,198.3 288,194.6 290,191.1 292,187.8 294,184.7 296,181.7 298,179.0 300,176.5 302,174.1 304,172.0 306,170.1 308,168.4 310,166.9 312,165.6 314,164.6 316,163.7 318,163.2 320,162.8 322,162.6 324,162.7 326,163.0 328,163.6 330,164.3 332,165.3 334,166.5 336,168.0 338,169.6 340,171.5 342,173.5 344,175.8 346,178.3 348,181.0 350,183.9 352,187.0 354,190.2 356,193.7 358,197.3 360,201.1 362,205.0 364,209.1 366,213.4 368,217.8 370,222.3 372,227.0 374,231.8 376,236.6 378,241.6 380,246.7 382,251.9 384,257.1 386,262.5 388,267.8 390,273.3 392,278.7 394,284.2 396,289.8 398,295.3 400,300.8 402,306.4 404,311.9 406,317.4 408,322.9 410,328.3 412,333.7 414,339.0 416,344.2 418,349.4 420,354.5 422,359.5 424,364.4 426,369.1 428,373.8 430,378.3 432,382.7 434,387.0 436,391.1 438,395.0 440,398.8 442,402.4 444,405.8 446,409.1 448,412.2 450,415.0 452,417.7 454,420.2 456,422.5 458,424.5 460,426.4 462,428.0 464,429.5 466,430.7 468,431.6 470,432.4 472,432.9 474,433.2 476,433.3 478,433.1 480,432.8 482,432.2 484,431.3 486,430.3 488,429.0 490,427.5 492,425.8 494,423.9 496,421.7 498,419.4 500,416.8 502,414.1 504,411.1 506,408.0 508,404.7 510,401.2 512,397.5 514,393.7 516,389.7 518,385.5 520,381.2 522,376.8 524,372.2 526,367.5 528,362.7 530,357.8 532,352.8 534,347.7 536,342.5 538,337.2 540,331.9 542,326.5 544,321.0 546,315.6 548,310.0 550,304.5 552,299.0 554,293.4 556,287.9 558,282.4 560,276.9 562,271.4 564,266.0 566,260.7 568,255.4 570,250.1 572,245.0 574,239.9 576,235.0 578,230.1 580,225.4 582,220.8 584,216.3 586,211.9 588,207.7 590,203.7 592,199.8 594,196.1 596,192.5 598,189.1 600,185.9 602,182.9 604,180.1 606,177.5 608,175.0 610,172.8 612,170.8 614,169.0 616,167.5 618,166.1 620,165.0 622,164.0 624,163.4 626,162.9 628,162.7 630,162.7 632,162.9 634,163.3 636,164.0 638,164.9 640,166.0 642,167.4 644,168.9 646,170.7 648,172.7 650,174.9 652,177.3 654,179.9 656,182.7 658,185.7 660,188.9 662,192.3 664,195.8 666,199.5 668,203.4 670,207.5 672,211.7 674,216.0 676,220.5 678,225.1 680,229.8 682,234.7 684,239.6 686,244.7 688,249.8 690,255.0 692,260.3 694,265.7 696,271.1 698,276.5 700,282.0 702,287.5 704,293.1 706,298.6 708,304.2 710,309.7 712,315.2 714,320.7 716,326.1 718,331.5 720,336.9 722,342.1 724,347.3 726,352.5 728,357.5 730,362.4 732,367.2 734,371.9 736,376.5 738,381.0 740,385.3 742,389.4 744,393.4 746,397.3 748,401.0 750,404.5 752,407.8 754,411.0 756,413.9 758,416.7 760,419.2 762,421.6 764,423.7 766,425.7 768,427.4 770,428.9 772,430.2 774,431.3 776,432.1 778,432.7 780,433.1 782,433.3 784,433.2 786,432.9 788,432.4 790,431.7 792,430.7 794,429.5 796,428.1 798,426.5 800,424.7 802,422.6 804,420.4 806,417.9 808,415.2 810,412.3 812,409.3 814,406.0 816,402.6 818,399.0 820,395.2 822,391.3 824,387.2 826,383.0 828,378.6 830,374.1 832,369.4 834,364.7 836,359.8 838,354.8 840,349.7 842,344.6 844,339.3 846,334.0 848,328.6 850,323.2"/><path d="M84,300.9 86,302.2 88,304.2 90,306.9 92,310.2 94,313.8 96,317.8 98,322.1 100,326.5 102,331.2 104,335.9 106,340.7 108,345.5 110,350.3 112,355.1 114,359.9 116,364.6 118,369.3 120,373.9 122,378.3 124,382.7 126,386.9 128,391.1 130,395.0 132,398.9 134,402.5 136,406.0 138,409.3 140,412.5 142,415.5 144,418.2 146,420.8 148,423.2 150,425.4 152,427.3 154,429.1 156,430.6 158,432.0 160,433.1 162,434.0 164,434.6 166,435.0 168,435.3 170,435.2 172,435.0 174,434.5 176,433.8 178,432.9 180,431.8 182,430.4 184,428.9 186,427.1 188,425.1 190,422.9 192,420.4 194,417.8 196,415.0 198,412.0 200,408.8 202,405.4 204,401.9 206,398.2 208,394.3 210,390.2 212,386.1 214,381.7 216,377.2 218,372.6 220,367.9 222,363.1 224,358.2 226,353.1 228,348.0 230,342.8 232,337.5 234,332.2 236,326.8 238,321.4 240,315.9 242,310.4 244,304.9 246,299.4 248,293.9 250,288.4 252,282.9 254,277.4 256,272.0 258,266.7 260,261.4 262,256.1 264,250.9 266,245.9 268,240.9 270,236.0 272,231.2 274,226.5 276,222.0 278,217.6 280,213.3 282,209.2 284,205.2 286,201.4 288,197.7 290,194.3 292,191.0 294,187.9 296,184.9 298,182.2 300,179.7 302,177.3 304,175.2 306,173.3 308,171.6 310,170.1 312,168.9 314,167.8 316,167.0 318,166.4 320,166.1 322,165.9 324,166.0 326,166.3 328,166.8 330,167.6 332,168.6 334,169.8 336,171.2 338,172.8 340,174.7 342,176.8 344,179.0 346,181.5 348,184.2 350,187.1 352,190.1 354,193.4 356,196.8 358,200.4 360,204.2 362,208.1 364,212.2 366,216.4 368,220.8 370,225.3 372,229.9 374,234.7 376,239.6 378,244.5 380,249.6 382,254.7 384,260.0 386,265.3 388,270.6 390,276.0 392,281.5 394,286.9 396,292.4 398,297.9 400,303.5 402,309.0 404,314.5 406,319.9 408,325.4 410,330.8 412,336.1 414,341.4 416,346.6 418,351.8 420,356.8 422,361.8 424,366.7 426,371.4 428,376.0 430,380.5 432,384.9 434,389.1 436,393.2 438,397.2 440,400.9 442,404.5 444,407.9 446,411.2 448,414.2 450,417.1 452,419.8 454,422.2 456,424.5 458,426.6 460,428.4 462,430.0 464,431.5 466,432.6 468,433.6 470,434.4 472,434.9 474,435.2 476,435.3 478,435.1 480,434.7 482,434.1 484,433.3 486,432.3 488,431.0 490,429.5 492,427.8 494,425.9 496,423.8 498,421.4 500,418.9 502,416.2 504,413.2 506,410.1 508,406.8 510,403.3 512,399.7 514,395.9 516,391.9 518,387.7 520,383.5 522,379.1 524,374.5 526,369.8 528,365.0 530,360.1 532,355.1 534,350.1 536,344.9 538,339.6 540,334.3 542,329.0 544,323.6 546,318.1 548,312.6 550,307.1 552,301.6 554,296.1 556,290.6 558,285.1 560,279.6 562,274.2 564,268.8 566,263.5 568,258.2 570,253.0 572,247.9 574,242.9 576,237.9 578,233.1 580,228.4 582,223.8 584,219.3 586,215.0 588,210.8 590,206.8 592,202.9 594,199.2 596,195.6 598,192.3 600,189.1 602,186.1 604,183.3 606,180.7 608,178.3 610,176.1 612,174.1 614,172.3 616,170.7 618,169.4 620,168.2 622,167.3 624,166.6 626,166.2 628,165.9 630,165.9 632,166.2 634,166.6 636,167.3 638,168.2 640,169.3 642,170.6 644,172.2 646,173.9 648,175.9 650,178.1 652,180.5 654,183.1 656,185.9 658,188.9 660,192.1 662,195.4 664,198.9 666,202.6 668,206.5 670,210.5 672,214.7 674,219.0 676,223.5 678,228.1 680,232.8 682,237.6 684,242.5 686,247.6 688,252.7 690,257.9 692,263.1 694,268.5 696,273.8 698,279.3 700,284.7 702,290.2 704,295.7 706,301.2 708,306.8 710,312.3 712,317.7 714,323.2 716,328.6 718,334.0 720,339.3 722,344.6 724,349.7 726,354.8 728,359.8 730,364.7 732,369.5 734,374.2 736,378.8 738,383.2 740,387.5 742,391.6 744,395.6 746,399.4 748,403.1 750,406.6 752,409.9 754,413.0 756,416.0 758,418.7 760,421.3 762,423.6 764,425.8 766,427.7 768,429.4 770,430.9 772,432.2 774,433.3 776,434.1 778,434.7 780,435.1 782,435.3 784,435.2 786,434.9 788,434.4 790,433.7 792,432.7 794,431.5 796,430.1 798,428.5 800,426.7 802,424.6 804,422.4 806,419.9 808,417.3 810,414.4 812,411.4 814,408.1 816,404.7 818,401.2 820,397.4 822,393.5 824,389.4 826,385.2 828,380.8 830,376.3 832,371.7 834,367.0 836,362.1 838,357.2 840,352.1 842,347.0 844,341.8 846,336.5 848,331.1 850,325.7"/><path d="M84,301.3 86,302.7 88,304.9 90,307.8 92,311.3 94,315.2 96,319.5 98,324.1 100,328.9 102,333.9 104,339.0 106,344.1 108,349.3 110,354.5 112,359.7 114,364.8 116,369.9 118,374.9 120,379.9 122,384.7 124,389.4 126,394.0 128,398.4 130,402.7 132,406.8 134,410.7 136,414.5 138,418.1 140,421.5 142,424.7 144,427.7 146,430.4 148,433.0 150,435.3 152,437.5 154,439.4 156,441.0 158,442.4 160,443.6 162,444.6 164,445.3 166,445.8 168,446.0 170,446.0 172,445.7 174,445.2 176,444.5 178,443.5 180,442.2 182,440.8 184,439.1 186,437.2 188,435.0 190,432.6 192,430.0 194,427.2 196,424.2 198,420.9 200,417.5 202,413.9 204,410.0 206,406.0 208,401.9 210,397.5 212,393.0 214,388.3 216,383.5 218,378.6 220,373.5 222,368.3 224,363.0 226,357.5 228,352.0 230,346.4 232,340.7 234,335.0 236,329.2 238,323.4 240,317.5 242,311.6 244,305.6 246,299.7 248,293.7 250,287.8 252,281.9 254,276.0 256,270.2 258,264.4 260,258.7 262,253.1 264,247.5 266,242.0 268,236.7 270,231.4 272,226.2 274,221.2 276,216.3 278,211.6 280,207.0 282,202.5 284,198.3 286,194.1 288,190.2 290,186.5 292,182.9 294,179.6 296,176.4 298,173.5 300,170.8 302,168.3 304,166.0 306,163.9 308,162.1 310,160.5 312,159.1 314,158.0 316,157.1 318,156.5 320,156.1 322,156.0 324,156.0 326,156.4 328,157.0 330,157.8 332,158.8 334,160.1 336,161.7 338,163.4 340,165.4 342,167.6 344,170.1 346,172.8 348,175.6 350,178.7 352,182.0 354,185.5 356,189.2 358,193.1 360,197.2 362,201.4 364,205.8 366,210.3 368,215.1 370,219.9 372,224.9 374,230.0 376,235.3 378,240.6 380,246.1 382,251.6 384,257.2 386,262.9 388,268.7 390,274.5 392,280.4 394,286.3 396,292.2 398,298.1 400,304.1 402,310.0 404,315.9 406,321.8 408,327.7 410,333.5 412,339.2 414,344.9 416,350.6 418,356.1 420,361.5 422,366.9 424,372.1 426,377.2 428,382.2 430,387.1 432,391.8 434,396.3 436,400.7 438,405.0 440,409.0 442,412.9 444,416.6 446,420.1 448,423.3 450,426.4 452,429.3 454,432.0 456,434.4 458,436.6 460,438.6 462,440.4 464,441.9 466,443.2 468,444.2 470,445.0 472,445.6 474,445.9 476,446.0 478,445.8 480,445.4 482,444.8 484,443.9 486,442.8 488,441.4 490,439.8 492,438.0 494,435.9 496,433.6 498,431.1 500,428.4 502,425.4 504,422.3 506,418.9 508,415.3 510,411.6 512,407.7 514,403.6 516,399.3 518,394.8 520,390.2 522,385.5 524,380.6 526,375.5 528,370.4 530,365.1 532,359.7 534,354.2 536,348.7 538,343.0 540,337.3 542,331.5 544,325.7 546,319.8 548,313.9 550,308.0 552,302.1 554,296.1 556,290.2 558,284.3 560,278.4 562,272.5 564,266.7 566,261.0 568,255.3 570,249.7 572,244.2 574,238.8 576,233.5 578,228.3 580,223.2 582,218.3 584,213.5 586,208.8 588,204.3 590,199.9 592,195.8 594,191.8 596,188.0 598,184.3 600,180.9 602,177.7 604,174.6 606,171.8 608,169.2 610,166.9 612,164.7 614,162.8 616,161.1 618,159.7 620,158.4 622,157.5 624,156.7 626,156.2 628,156.0 630,156.0 632,156.2 634,156.7 636,157.4 638,158.4 640,159.6 642,161.0 644,162.7 646,164.6 648,166.7 650,169.1 652,171.7 654,174.5 656,177.5 658,180.7 660,184.1 662,187.7 664,191.5 666,195.5 668,199.7 670,204.0 672,208.5 674,213.2 676,218.0 678,222.9 680,228.0 682,233.2 684,238.5 686,243.9 688,249.4 690,255.0 692,260.6 694,266.4 696,272.2 698,278.0 700,283.9 702,289.8 704,295.7 706,301.7 708,307.6 710,313.5 712,319.4 714,325.3 716,331.2 718,336.9 720,342.7 722,348.3 724,353.9 726,359.4 728,364.8 730,370.0 732,375.2 734,380.2 736,385.1 738,389.9 740,394.5 742,399.0 744,403.3 746,407.4 748,411.4 750,415.1 752,418.7 754,422.0 756,425.2 758,428.2 760,430.9 762,433.4 764,435.8 766,437.8 768,439.7 770,441.3 772,442.7 774,443.8 776,444.7 778,445.4 780,445.8 782,446.0 784,445.9 786,445.6 788,445.1 790,444.3 792,443.2 794,442.0 796,440.5 798,438.7 800,436.7 802,434.5 804,432.1 806,429.5 808,426.6 810,423.5 812,420.3 814,416.8 816,413.1 818,409.3 820,405.2 822,401.0 824,396.6 826,392.1 828,387.4 830,382.5 832,377.6 834,372.5 836,367.2 838,361.9 840,356.4 842,350.9 844,345.3 846,339.6 848,333.8 850,328.0"/><path d="M84,303.2 86,304.5 88,306.6 90,309.5 92,312.8 94,316.6 96,320.8 98,325.2 100,329.9 102,334.6 104,339.5 106,344.5 108,349.5 110,354.6 112,359.6 114,364.5 116,369.4 118,374.3 120,379.0 122,383.7 124,388.2 126,392.7 128,396.9 130,401.1 132,405.0 134,408.8 136,412.5 138,416.0 140,419.2 142,422.3 144,425.2 146,427.9 148,430.4 150,432.6 152,434.7 154,436.5 156,438.1 158,439.5 160,440.6 162,441.5 164,442.2 166,442.7 168,442.9 170,442.9 172,442.6 174,442.1 176,441.4 178,440.5 180,439.3 182,437.9 184,436.2 186,434.4 188,432.3 190,430.0 192,427.5 194,424.8 196,421.8 198,418.7 200,415.4 202,411.9 204,408.2 206,404.3 208,400.3 210,396.1 212,391.7 214,387.2 216,382.6 218,377.8 220,372.9 222,367.9 224,362.7 226,357.5 228,352.2 230,346.8 232,341.3 234,335.7 236,330.1 238,324.5 240,318.8 242,313.1 244,307.4 246,301.6 248,295.9 250,290.2 252,284.5 254,278.8 256,273.2 258,267.6 260,262.1 262,256.6 264,251.2 266,245.9 268,240.8 270,235.7 272,230.7 274,225.8 276,221.1 278,216.5 280,212.1 282,207.8 284,203.7 286,199.7 288,195.9 290,192.3 292,188.9 294,185.6 296,182.6 298,179.8 300,177.1 302,174.7 304,172.5 306,170.5 308,168.7 310,167.2 312,165.9 314,164.8 316,164.0 318,163.3 320,163.0 322,162.8 324,162.9 326,163.2 328,163.8 330,164.6 332,165.6 334,166.8 336,168.3 338,170.0 340,172.0 342,174.1 344,176.5 346,179.0 348,181.8 350,184.8 352,188.0 354,191.4 356,194.9 358,198.7 360,202.6 362,206.7 364,210.9 366,215.3 368,219.9 370,224.6 372,229.4 374,234.3 376,239.4 378,244.6 380,249.8 382,255.2 384,260.6 386,266.1 388,271.7 390,277.3 392,283.0 394,288.7 396,294.4 398,300.1 400,305.8 402,311.6 404,317.3 406,323.0 408,328.6 410,334.2 412,339.8 414,345.3 416,350.7 418,356.1 420,361.4 422,366.5 424,371.6 426,376.5 428,381.3 430,386.0 432,390.6 434,395.0 436,399.2 438,403.3 440,407.2 442,410.9 444,414.5 446,417.9 448,421.0 450,424.0 452,426.8 454,429.4 456,431.7 458,433.9 460,435.8 462,437.5 464,438.9 466,440.2 468,441.2 470,442.0 472,442.5 474,442.8 476,442.9 478,442.8 480,442.4 482,441.7 484,440.9 486,439.8 488,438.5 490,436.9 492,435.2 494,433.2 496,430.9 498,428.5 500,425.9 502,423.0 504,420.0 506,416.7 508,413.3 510,409.7 512,405.9 514,401.9 516,397.8 518,393.5 520,389.0 522,384.4 524,379.7 526,374.9 528,369.9 530,364.8 532,359.6 534,354.3 536,348.9 538,343.5 540,337.9 542,332.4 544,326.7 546,321.1 548,315.4 550,309.6 552,303.9 554,298.2 556,292.4 558,286.7 560,281.1 562,275.4 564,269.8 566,264.3 568,258.8 570,253.4 572,248.1 574,242.8 576,237.7 578,232.7 580,227.8 582,223.0 584,218.3 586,213.8 588,209.5 590,205.3 592,201.3 594,197.4 596,193.7 598,190.2 600,186.9 602,183.8 604,180.9 606,178.1 608,175.6 610,173.4 612,171.3 614,169.4 616,167.8 618,166.4 620,165.2 622,164.3 624,163.6 626,163.1 628,162.8 630,162.8 632,163.1 634,163.5 636,164.2 638,165.2 640,166.3 642,167.7 644,169.3 646,171.2 648,173.2 650,175.5 652,178.0 654,180.7 656,183.6 658,186.7 660,190.0 662,193.5 664,197.2 666,201.0 668,205.0 670,209.2 672,213.6 674,218.0 676,222.7 678,227.5 680,232.3 682,237.4 684,242.5 686,247.7 688,253.0 690,258.4 692,263.9 694,269.4 696,275.0 698,280.7 700,286.4 702,292.1 704,297.8 706,303.5 708,309.3 710,315.0 712,320.7 714,326.4 716,332.0 718,337.6 720,343.1 722,348.6 724,354.0 726,359.3 728,364.5 730,369.6 732,374.5 734,379.4 736,384.2 738,388.8 740,393.2 742,397.5 744,401.7 746,405.6 748,409.5 750,413.1 752,416.5 754,419.8 756,422.8 758,425.7 760,428.4 762,430.8 764,433.0 766,435.0 768,436.8 770,438.4 772,439.7 774,440.8 776,441.7 778,442.3 780,442.7 782,442.9 784,442.8 786,442.5 788,442.0 790,441.3 792,440.3 794,439.0 796,437.6 798,435.9 800,434.0 802,431.9 804,429.5 806,427.0 808,424.2 810,421.2 812,418.1 814,414.7 816,411.2 818,407.4 820,403.5 822,399.5 824,395.2 826,390.8 828,386.3 830,381.6 832,376.8 834,371.9 836,366.8 838,361.7 840,356.4 842,351.1 844,345.7 846,340.2 848,334.6 850,329.0"/><path d="M84,303.3 86,304.6 88,306.8 90,309.7 92,313.1 94,317.0 96,321.3 98,325.8 100,330.6 102,335.5 104,340.5 106,345.6 108,350.7 110,355.8 112,361.0 114,366.0 116,371.1 118,376.0 120,380.9 122,385.7 124,390.3 126,394.8 128,399.2 130,403.4 132,407.5 134,411.4 136,415.1 138,418.7 140,422.0 142,425.2 144,428.1 146,430.9 148,433.4 150,435.7 152,437.8 154,439.7 156,441.3 158,442.8 160,443.9 162,444.9 164,445.6 166,446.0 168,446.3 170,446.2 172,446.0 174,445.5 176,444.7 178,443.8 180,442.6 182,441.1 184,439.4 186,437.5 188,435.4 190,433.1 192,430.5 194,427.7 196,424.7 198,421.5 200,418.1 202,414.5 204,410.7 206,406.8 208,402.6 210,398.3 212,393.9 214,389.3 216,384.5 218,379.6 220,374.6 222,369.5 224,364.2 226,358.8 228,353.4 230,347.9 232,342.2 234,336.6 236,330.8 238,325.1 240,319.2 242,313.4 244,307.5 246,301.7 248,295.8 250,289.9 252,284.1 254,278.3 256,272.5 258,266.8 260,261.2 262,255.6 264,250.1 266,244.7 268,239.4 270,234.2 272,229.1 274,224.1 276,219.3 278,214.6 280,210.0 282,205.6 284,201.4 286,197.3 288,193.5 290,189.8 292,186.3 294,182.9 296,179.8 298,176.9 300,174.2 302,171.8 304,169.5 306,167.5 308,165.7 310,164.1 312,162.8 314,161.6 316,160.8 318,160.1 320,159.8 322,159.6 324,159.7 326,160.0 328,160.6 330,161.4 332,162.4 334,163.7 336,165.2 338,167.0 340,168.9 342,171.1 344,173.6 346,176.2 348,179.1 350,182.1 352,185.4 354,188.8 356,192.5 358,196.3 360,200.3 362,204.5 364,208.8 366,213.4 368,218.0 370,222.8 372,227.7 374,232.8 376,238.0 378,243.3 380,248.7 382,254.1 384,259.7 386,265.3 388,271.0 390,276.8 392,282.6 394,288.4 396,294.2 398,300.1 400,306.0 402,311.8 404,317.7 406,323.5 408,329.3 410,335.1 412,340.7 414,346.4 416,351.9 418,357.4 420,362.8 422,368.1 424,373.3 426,378.3 428,383.2 430,388.0 432,392.7 434,397.2 436,401.5 438,405.7 440,409.7 442,413.5 444,417.2 446,420.6 448,423.9 450,426.9 452,429.8 454,432.4 456,434.8 458,437.0 460,439.0 462,440.7 464,442.2 466,443.5 468,444.5 470,445.3 472,445.9 474,446.2 476,446.3 478,446.1 480,445.7 482,445.1 484,444.2 486,443.1 488,441.7 490,440.1 492,438.3 494,436.3 496,434.0 498,431.5 500,428.8 502,425.9 504,422.8 506,419.5 508,416.0 510,412.3 512,408.4 514,404.3 516,400.1 518,395.7 520,391.1 522,386.4 524,381.6 526,376.6 528,371.5 530,366.3 532,361.0 534,355.6 536,350.1 538,344.5 540,338.8 542,333.1 544,327.4 546,321.6 548,315.7 550,309.9 552,304.0 554,298.1 556,292.3 558,286.4 560,280.6 562,274.8 564,269.1 566,263.4 568,257.8 570,252.3 572,246.8 574,241.5 576,236.2 578,231.1 580,226.1 582,221.2 584,216.4 586,211.8 588,207.4 590,203.1 592,198.9 594,195.0 596,191.2 598,187.6 600,184.2 602,181.1 604,178.1 606,175.3 608,172.7 610,170.4 612,168.3 614,166.4 616,164.7 618,163.3 620,162.1 622,161.1 624,160.4 626,159.9 628,159.6 630,159.6 632,159.9 634,160.3 636,161.0 638,162.0 640,163.2 642,164.6 644,166.3 646,168.1 648,170.2 650,172.6 652,175.1 654,177.9 656,180.9 658,184.0 660,187.4 662,191.0 664,194.7 666,198.7 668,202.8 670,207.1 672,211.5 674,216.1 676,220.9 678,225.8 680,230.8 682,235.9 684,241.1 686,246.5 688,251.9 690,257.5 692,263.1 694,268.7 696,274.5 698,280.2 700,286.1 702,291.9 704,297.8 706,303.6 708,309.5 710,315.4 712,321.2 714,327.0 716,332.8 718,338.5 720,344.1 722,349.7 724,355.2 726,360.7 728,366.0 730,371.2 732,376.3 734,381.3 736,386.1 738,390.8 740,395.4 742,399.8 744,404.1 746,408.1 748,412.0 750,415.7 752,419.3 754,422.6 756,425.7 758,428.7 760,431.4 762,433.9 764,436.1 766,438.2 768,440.0 770,441.6 772,443.0 774,444.1 776,445.0 778,445.7 780,446.1 782,446.3 784,446.2 786,445.9 788,445.4 790,444.6 792,443.5 794,442.3 796,440.8 798,439.1 800,437.1 802,435.0 804,432.6 806,429.9 808,427.1 810,424.1 812,420.8 814,417.4 816,413.8 818,410.0 820,406.0 822,401.8 824,397.5 826,393.0 828,388.3 830,383.5 832,378.6 834,373.6 836,368.4 838,363.1 840,357.8 842,352.3 844,346.7 846,341.1 848,335.4 850,329.7"/><path d="M84,304.8 86,306.1 88,308.1 90,310.7 92,313.9 94,317.4 96,321.3 98,325.4 100,329.8 102,334.2 104,338.8 106,343.5 108,348.1 110,352.8 112,357.5 114,362.2 116,366.7 118,371.3 120,375.7 122,380.1 124,384.3 126,388.4 128,392.4 130,396.3 132,400.0 134,403.6 136,407.0 138,410.2 140,413.3 142,416.1 144,418.8 146,421.3 148,423.7 150,425.8 152,427.7 154,429.4 156,430.9 158,432.2 160,433.2 162,434.1 164,434.7 166,435.2 168,435.4 170,435.4 172,435.1 174,434.7 176,434.0 178,433.1 180,432.0 182,430.7 184,429.1 186,427.4 188,425.5 190,423.3 192,421.0 194,418.4 196,415.7 198,412.8 200,409.7 202,406.4 204,402.9 206,399.3 208,395.6 210,391.6 212,387.6 214,383.4 216,379.0 218,374.5 220,370.0 222,365.3 224,360.5 226,355.6 228,350.6 230,345.5 232,340.4 234,335.2 236,330.0 238,324.7 240,319.4 242,314.1 244,308.7 246,303.4 248,298.0 250,292.7 252,287.4 254,282.1 256,276.8 258,271.6 260,266.4 262,261.3 264,256.3 266,251.4 268,246.5 270,241.8 272,237.1 274,232.6 276,228.2 278,223.9 280,219.7 282,215.7 284,211.9 286,208.2 288,204.6 290,201.2 292,198.0 294,195.0 296,192.2 298,189.5 300,187.1 302,184.8 304,182.8 306,180.9 308,179.3 310,177.8 312,176.6 314,175.6 316,174.8 318,174.2 320,173.9 322,173.7 324,173.8 326,174.1 328,174.6 330,175.3 332,176.3 334,177.5 336,178.9 338,180.4 340,182.2 342,184.3 344,186.5 346,188.9 348,191.5 350,194.3 352,197.2 354,200.4 356,203.7 358,207.2 360,210.9 362,214.7 364,218.7 366,222.8 368,227.0 370,231.4 372,235.9 374,240.5 376,245.3 378,250.1 380,255.0 382,260.0 384,265.1 386,270.2 388,275.4 390,280.7 392,285.9 394,291.3 396,296.6 398,302.0 400,307.3 402,312.7 404,318.0 406,323.3 408,328.6 410,333.9 412,339.1 414,344.2 416,349.3 418,354.3 420,359.2 422,364.0 424,368.7 426,373.3 428,377.8 430,382.2 432,386.5 434,390.6 436,394.5 438,398.4 440,402.0 442,405.5 444,408.8 446,412.0 448,414.9 450,417.7 452,420.3 454,422.7 456,424.9 458,426.9 460,428.7 462,430.3 464,431.7 466,432.8 468,433.8 470,434.5 472,435.0 474,435.3 476,435.4 478,435.2 480,434.9 482,434.3 484,433.5 486,432.5 488,431.2 490,429.8 492,428.1 494,426.3 496,424.2 498,421.9 500,419.5 502,416.8 504,414.0 506,410.9 508,407.7 510,404.3 512,400.8 514,397.1 516,393.2 518,389.2 520,385.1 522,380.8 524,376.3 526,371.8 528,367.2 530,362.4 532,357.5 534,352.6 536,347.6 538,342.5 540,337.3 542,332.1 544,326.8 546,321.6 548,316.2 550,310.9 552,305.5 554,300.2 556,294.8 558,289.5 560,284.2 562,278.9 564,273.7 566,268.5 568,263.4 570,258.3 572,253.3 574,248.5 576,243.7 578,239.0 580,234.4 582,229.9 584,225.6 586,221.4 588,217.3 590,213.4 592,209.6 594,206.0 596,202.6 598,199.3 600,196.2 602,193.3 604,190.6 606,188.0 608,185.7 610,183.6 612,181.6 614,179.9 616,178.4 618,177.1 620,176.0 622,175.1 624,174.4 626,174.0 628,173.7 630,173.7 632,173.9 634,174.4 636,175.0 638,175.9 640,177.0 642,178.3 644,179.8 646,181.5 648,183.4 650,185.6 652,187.9 654,190.4 656,193.1 658,196.0 660,199.1 662,202.4 664,205.8 666,209.4 668,213.1 670,217.1 672,221.1 674,225.3 676,229.6 678,234.1 680,238.7 682,243.4 684,248.1 686,253.0 688,258.0 690,263.0 692,268.2 694,273.3 696,278.6 698,283.8 700,289.1 702,294.5 704,299.8 706,305.2 708,310.5 710,315.9 712,321.2 714,326.5 716,331.8 718,337.0 720,342.2 722,347.3 724,352.3 726,357.2 728,362.1 730,366.9 732,371.5 734,376.1 736,380.5 738,384.8 740,388.9 742,393.0 744,396.8 746,400.6 748,404.1 750,407.5 752,410.7 754,413.8 756,416.6 758,419.3 760,421.8 762,424.1 764,426.1 766,428.0 768,429.7 770,431.1 772,432.4 774,433.4 776,434.2 778,434.8 780,435.2 782,435.4 784,435.3 786,435.0 788,434.5 790,433.8 792,432.9 794,431.7 796,430.4 798,428.8 800,427.0 802,425.0 804,422.9 806,420.5 808,417.9 810,415.1 812,412.2 814,409.0 816,405.7 818,402.2 820,398.6 822,394.8 824,390.8 826,386.7 828,382.5 830,378.1 832,373.6 834,369.0 836,364.3 838,359.5 840,354.6 842,349.6 844,344.5 846,339.4 848,334.2 850,329.0"/><path d="M84,308.1 86,309.4 88,311.4 90,314.0 92,317.2 94,320.7 96,324.6 98,328.8 100,333.1 102,337.6 104,342.2 106,346.9 108,351.6 110,356.3 112,361.0 114,365.7 116,370.3 118,374.8 120,379.3 122,383.7 124,387.9 126,392.1 128,396.1 130,400.0 132,403.7 134,407.3 136,410.7 138,413.9 140,417.0 142,419.9 144,422.6 146,425.1 148,427.4 150,429.6 152,431.5 154,433.2 156,434.7 158,436.0 160,437.1 162,437.9 164,438.6 166,439.0 168,439.2 170,439.2 172,438.9 174,438.5 176,437.8 178,436.9 180,435.8 182,434.5 184,433.0 186,431.2 188,429.3 190,427.1 192,424.7 194,422.2 196,419.4 198,416.5 200,413.4 202,410.1 204,406.6 206,403.0 208,399.2 210,395.3 212,391.2 214,387.0 216,382.6 218,378.1 220,373.5 222,368.8 224,364.0 226,359.1 228,354.1 230,349.0 232,343.9 234,338.7 236,333.4 238,328.1 240,322.8 242,317.4 244,312.0 246,306.6 248,301.3 250,295.9 252,290.6 254,285.2 256,280.0 258,274.7 260,269.5 262,264.4 264,259.4 266,254.4 268,249.6 270,244.8 272,240.1 274,235.6 276,231.1 278,226.8 280,222.6 282,218.6 284,214.7 286,211.0 288,207.5 290,204.1 292,200.9 294,197.8 296,195.0 298,192.3 300,189.8 302,187.6 304,185.5 306,183.6 308,182.0 310,180.5 312,179.3 314,178.3 316,177.5 318,176.9 320,176.6 322,176.4 324,176.5 326,176.8 328,177.3 330,178.1 332,179.0 334,180.2 336,181.6 338,183.2 340,185.0 342,187.0 344,189.2 346,191.6 348,194.3 350,197.1 352,200.0 354,203.2 356,206.6 358,210.1 360,213.7 362,217.6 364,221.6 366,225.7 368,230.0 370,234.4 372,238.9 374,243.5 376,248.3 378,253.1 380,258.1 382,263.1 384,268.2 386,273.3 388,278.6 390,283.8 392,289.1 394,294.5 396,299.9 398,305.2 400,310.6 402,316.0 404,321.3 406,326.7 408,332.0 410,337.3 412,342.5 414,347.6 416,352.7 418,357.8 420,362.7 422,367.5 424,372.3 426,376.9 428,381.4 430,385.8 432,390.1 434,394.2 436,398.2 438,402.0 440,405.7 442,409.2 444,412.5 446,415.7 448,418.7 450,421.5 452,424.1 454,426.5 456,428.7 458,430.7 460,432.5 462,434.1 464,435.5 466,436.7 468,437.6 470,438.3 472,438.8 474,439.1 476,439.2 478,439.1 480,438.7 482,438.1 484,437.3 486,436.3 488,435.0 490,433.6 492,431.9 494,430.1 496,428.0 498,425.7 500,423.2 502,420.6 504,417.7 506,414.7 508,411.4 510,408.0 512,404.5 514,400.8 516,396.9 518,392.8 520,388.7 522,384.4 524,379.9 526,375.4 528,370.7 530,365.9 532,361.0 534,356.1 536,351.0 538,345.9 540,340.7 542,335.5 544,330.2 546,324.9 548,319.5 550,314.2 552,308.8 554,303.4 556,298.0 558,292.7 560,287.4 562,282.1 564,276.8 566,271.6 568,266.5 570,261.4 572,256.4 574,251.5 576,246.7 578,242.0 580,237.4 582,232.9 584,228.5 586,224.3 588,220.2 590,216.3 592,212.5 594,208.9 596,205.4 598,202.1 600,199.0 602,196.1 604,193.4 606,190.8 608,188.5 610,186.3 612,184.4 614,182.6 616,181.1 618,179.8 620,178.7 622,177.8 624,177.1 626,176.7 628,176.5 630,176.5 632,176.7 634,177.1 636,177.7 638,178.6 640,179.7 642,181.0 644,182.5 646,184.3 648,186.2 650,188.3 652,190.7 654,193.2 656,195.9 658,198.8 660,201.9 662,205.2 664,208.6 666,212.3 668,216.0 670,220.0 672,224.0 674,228.2 676,232.6 678,237.1 680,241.7 682,246.4 684,251.2 686,256.1 688,261.1 690,266.1 692,271.3 694,276.5 696,281.7 698,287.0 700,292.3 702,297.7 704,303.1 706,308.5 708,313.8 710,319.2 712,324.6 714,329.9 716,335.2 718,340.4 720,345.6 722,350.7 724,355.8 726,360.7 728,365.6 730,370.4 732,375.1 734,379.6 736,384.1 738,388.4 740,392.6 742,396.6 744,400.5 746,404.3 748,407.8 750,411.2 752,414.5 754,417.5 756,420.4 758,423.1 760,425.6 762,427.8 764,429.9 766,431.8 768,433.5 770,435.0 772,436.2 774,437.2 776,438.1 778,438.7 780,439.1 782,439.2 784,439.2 786,438.9 788,438.4 790,437.7 792,436.7 794,435.6 796,434.2 798,432.6 800,430.8 802,428.8 804,426.6 806,424.2 808,421.7 810,418.9 812,415.9 814,412.8 816,409.4 818,405.9 820,402.3 822,398.4 824,394.5 826,390.4 828,386.1 830,381.7 832,377.2 834,372.6 836,367.8 838,363.0 840,358.1 842,353.1 844,348.0 846,342.8 848,337.6 850,332.3"/><path d="M84,308.4 86,309.6 88,311.7 90,314.5 92,317.8 94,321.5 96,325.5 98,329.8 100,334.3 102,339.0 104,343.8 106,348.6 108,353.5 110,358.4 112,363.3 114,368.1 116,372.9 118,377.7 120,382.3 122,386.8 124,391.2 126,395.5 128,399.7 130,403.7 132,407.6 134,411.3 136,414.9 138,418.2 140,421.4 142,424.4 144,427.3 146,429.9 148,432.3 150,434.5 152,436.5 154,438.3 156,439.8 158,441.2 160,442.3 162,443.2 164,443.9 166,444.3 168,444.5 170,444.5 172,444.2 174,443.8 176,443.1 178,442.1 180,441.0 182,439.6 184,438.0 186,436.2 188,434.2 190,431.9 192,429.5 194,426.8 196,424.0 198,420.9 200,417.7 202,414.3 204,410.7 206,406.9 208,403.0 210,398.9 212,394.6 214,390.3 216,385.7 218,381.1 220,376.3 222,371.4 224,366.4 226,361.3 228,356.1 230,350.8 232,345.5 234,340.1 236,334.6 238,329.1 240,323.6 242,318.0 244,312.4 246,306.8 248,301.2 250,295.7 252,290.1 254,284.6 256,279.1 258,273.7 260,268.3 262,263.0 264,257.7 266,252.6 268,247.5 270,242.6 272,237.7 274,233.0 276,228.4 278,223.9 280,219.6 282,215.4 284,211.4 286,207.5 288,203.8 290,200.3 292,197.0 294,193.8 296,190.8 298,188.1 300,185.5 302,183.2 304,181.0 306,179.1 308,177.4 310,175.9 312,174.6 314,173.5 316,172.7 318,172.1 320,171.7 322,171.6 324,171.7 326,172.0 328,172.5 330,173.3 332,174.3 334,175.5 336,176.9 338,178.6 340,180.5 342,182.6 344,184.9 346,187.4 348,190.1 350,193.0 352,196.1 354,199.4 356,202.9 358,206.5 360,210.3 362,214.3 364,218.5 366,222.8 368,227.2 370,231.8 372,236.5 374,241.3 376,246.2 378,251.2 380,256.4 382,261.6 384,266.9 386,272.2 388,277.7 390,283.1 392,288.6 394,294.2 396,299.8 398,305.4 400,310.9 402,316.5 404,322.1 406,327.6 408,333.2 410,338.6 412,344.1 414,349.4 416,354.7 418,359.9 420,365.0 422,370.1 424,375.0 426,379.8 428,384.5 430,389.1 432,393.5 434,397.8 436,401.9 438,405.9 440,409.7 442,413.4 444,416.8 446,420.1 448,423.2 450,426.1 452,428.8 454,431.3 456,433.6 458,435.7 460,437.6 462,439.2 464,440.6 466,441.9 468,442.8 470,443.6 472,444.1 474,444.4 476,444.5 478,444.4 480,444.0 482,443.4 484,442.5 486,441.5 488,440.2 490,438.7 492,437.0 494,435.0 496,432.9 498,430.5 500,427.9 502,425.2 504,422.2 506,419.0 508,415.7 510,412.2 512,408.4 514,404.6 516,400.5 518,396.4 520,392.0 522,387.6 524,382.9 526,378.2 528,373.4 530,368.4 532,363.3 534,358.2 536,352.9 538,347.6 540,342.2 542,336.8 544,331.3 546,325.8 548,320.2 550,314.7 552,309.1 554,303.5 556,297.9 558,292.3 560,286.8 562,281.3 564,275.8 566,270.4 568,265.1 570,259.8 572,254.6 574,249.5 576,244.5 578,239.6 580,234.9 582,230.2 584,225.7 586,221.3 588,217.1 590,213.0 592,209.0 594,205.3 596,201.7 598,198.3 600,195.0 602,192.0 604,189.2 606,186.5 608,184.1 610,181.8 612,179.8 614,178.0 616,176.4 618,175.1 620,173.9 622,173.0 624,172.3 626,171.8 628,171.6 630,171.6 632,171.8 634,172.3 636,172.9 638,173.9 640,175.0 642,176.3 644,177.9 646,179.7 648,181.7 650,183.9 652,186.4 654,189.0 656,191.8 658,194.8 660,198.1 662,201.5 664,205.0 666,208.8 668,212.7 670,216.8 672,221.0 674,225.4 676,229.9 678,234.6 680,239.3 682,244.2 684,249.2 686,254.3 688,259.5 690,264.7 692,270.1 694,275.5 696,280.9 698,286.4 700,292.0 702,297.5 704,303.1 706,308.7 708,314.3 710,319.9 712,325.4 714,331.0 716,336.4 718,341.9 720,347.3 722,352.6 724,357.8 726,363.0 728,368.1 730,373.0 732,377.9 734,382.6 736,387.3 738,391.7 740,396.1 742,400.3 744,404.3 746,408.2 748,411.9 750,415.5 752,418.8 754,422.0 756,425.0 758,427.8 760,430.3 762,432.7 764,434.9 766,436.8 768,438.6 770,440.1 772,441.4 774,442.5 776,443.3 778,444.0 780,444.4 782,444.5 784,444.5 786,444.2 788,443.6 790,442.9 792,441.9 794,440.7 796,439.3 798,437.7 800,435.8 802,433.7 804,431.5 806,429.0 808,426.3 810,423.4 812,420.3 814,417.0 816,413.6 818,410.0 820,406.1 822,402.2 824,398.1 826,393.8 828,389.4 830,384.8 832,380.1 834,375.3 836,370.4 838,365.4 840,360.2 842,355.0 844,349.8 846,344.4 848,339.0 850,333.5"/><path d="M84,308.7 86,310.0 88,312.2 90,315.0 92,318.3 94,322.1 96,326.3 98,330.7 100,335.3 102,340.1 104,345.0 106,349.9 108,354.9 110,359.9 112,364.9 114,369.8 116,374.7 118,379.6 120,384.3 122,388.9 124,393.5 126,397.8 128,402.1 130,406.2 132,410.2 134,414.0 136,417.6 138,421.1 140,424.3 142,427.4 144,430.3 146,432.9 148,435.4 150,437.7 152,439.7 154,441.5 156,443.1 158,444.5 160,445.6 162,446.5 164,447.2 166,447.7 168,447.9 170,447.9 172,447.6 174,447.1 176,446.4 178,445.5 180,444.3 182,442.9 184,441.3 186,439.4 188,437.3 190,435.0 192,432.5 194,429.8 196,426.9 198,423.8 200,420.5 202,417.0 204,413.3 206,409.5 208,405.5 210,401.3 212,396.9 214,392.4 216,387.8 218,383.0 220,378.2 222,373.2 224,368.0 226,362.8 228,357.5 230,352.1 232,346.7 234,341.1 236,335.6 238,329.9 240,324.3 242,318.6 244,312.9 246,307.2 248,301.5 250,295.8 252,290.1 254,284.4 256,278.8 258,273.3 260,267.8 262,262.3 264,257.0 266,251.7 268,246.6 270,241.5 272,236.5 274,231.7 276,227.0 278,222.4 280,218.0 282,213.7 284,209.6 286,205.7 288,201.9 290,198.3 292,194.9 294,191.6 296,188.6 298,185.8 300,183.2 302,180.8 304,178.6 306,176.6 308,174.8 310,173.3 312,172.0 314,170.9 316,170.1 318,169.5 320,169.1 322,168.9 324,169.0 326,169.3 328,169.9 330,170.7 332,171.7 334,172.9 336,174.4 338,176.1 340,178.0 342,180.2 344,182.5 346,185.1 348,187.9 350,190.8 352,194.0 354,197.4 356,200.9 358,204.6 360,208.5 362,212.6 364,216.9 366,221.2 368,225.8 370,230.4 372,235.2 374,240.2 376,245.2 378,250.4 380,255.6 382,260.9 384,266.3 386,271.8 388,277.4 390,283.0 392,288.6 394,294.3 396,300.0 398,305.7 400,311.4 402,317.1 404,322.8 406,328.4 408,334.1 410,339.7 412,345.2 414,350.7 416,356.1 418,361.4 420,366.7 422,371.8 424,376.8 426,381.8 428,386.6 430,391.2 432,395.8 434,400.1 436,404.4 438,408.4 440,412.3 442,416.0 444,419.6 446,422.9 448,426.1 450,429.1 452,431.8 454,434.4 456,436.7 458,438.9 460,440.8 462,442.5 464,443.9 466,445.2 468,446.2 470,447.0 472,447.5 474,447.8 476,447.9 478,447.7 480,447.4 482,446.7 484,445.9 486,444.8 488,443.5 490,441.9 492,440.2 494,438.2 496,436.0 498,433.6 500,430.9 502,428.1 504,425.1 506,421.8 508,418.4 510,414.8 512,411.0 514,407.1 516,403.0 518,398.7 520,394.3 522,389.7 524,385.0 526,380.1 528,375.2 530,370.1 532,364.9 534,359.7 536,354.3 538,348.9 540,343.4 542,337.8 544,332.2 546,326.5 548,320.9 550,315.2 552,309.5 554,303.7 556,298.0 558,292.4 560,286.7 562,281.1 564,275.5 566,270.0 568,264.5 570,259.1 572,253.8 574,248.6 576,243.5 578,238.5 580,233.6 582,228.9 584,224.2 586,219.7 588,215.4 590,211.2 592,207.2 594,203.4 596,199.7 598,196.2 600,192.9 602,189.8 604,186.9 606,184.2 608,181.7 610,179.4 612,177.4 614,175.5 616,173.9 618,172.5 620,171.3 622,170.4 624,169.7 626,169.2 628,169.0 630,169.0 632,169.2 634,169.6 636,170.3 638,171.3 640,172.4 642,173.8 644,175.4 646,177.2 648,179.3 650,181.6 652,184.0 654,186.7 656,189.6 658,192.7 660,196.0 662,199.5 664,203.1 666,207.0 668,211.0 670,215.1 672,219.5 674,223.9 676,228.6 678,233.3 680,238.2 682,243.2 684,248.3 686,253.5 688,258.8 690,264.2 692,269.6 694,275.1 696,280.7 698,286.3 700,292.0 702,297.7 704,303.4 706,309.1 708,314.8 710,320.5 712,326.2 714,331.8 716,337.4 718,343.0 720,348.5 722,353.9 724,359.3 726,364.6 728,369.8 730,374.8 732,379.8 734,384.7 736,389.4 738,394.0 740,398.4 742,402.7 744,406.8 746,410.8 748,414.6 750,418.2 752,421.6 754,424.9 756,427.9 758,430.8 760,433.4 762,435.8 764,438.1 766,440.1 768,441.8 770,443.4 772,444.7 774,445.8 776,446.7 778,447.3 780,447.7 782,447.9 784,447.8 786,447.5 788,447.0 790,446.3 792,445.3 794,444.0 796,442.6 798,440.9 800,439.0 802,436.9 804,434.6 806,432.0 808,429.3 810,426.3 812,423.2 814,419.8 816,416.3 818,412.6 820,408.7 822,404.6 824,400.4 826,396.0 828,391.5 830,386.9 832,382.1 834,377.2 836,372.1 838,367.0 840,361.8 842,356.4 844,351.0 846,345.6 848,340.0 850,334.4"/><path d="M84,311.5 86,312.7 88,314.8 90,317.4 92,320.6 94,324.2 96,328.1 98,332.3 100,336.7 102,341.2 104,345.8 106,350.5 108,355.2 110,360.0 112,364.7 114,369.4 116,374.0 118,378.6 120,383.1 122,387.5 124,391.8 126,395.9 128,400.0 130,403.9 132,407.6 134,411.2 136,414.7 138,417.9 140,421.0 142,423.9 144,426.7 146,429.2 148,431.5 150,433.7 152,435.6 154,437.3 156,438.8 158,440.1 160,441.2 162,442.1 164,442.7 166,443.1 168,443.4 170,443.3 172,443.1 174,442.6 176,442.0 178,441.1 180,440.0 182,438.6 184,437.1 186,435.3 188,433.4 190,431.2 192,428.8 194,426.2 196,423.5 198,420.5 200,417.4 202,414.1 204,410.6 206,407.0 208,403.1 210,399.2 212,395.1 214,390.8 216,386.4 218,381.9 220,377.3 222,372.5 224,367.7 226,362.8 228,357.7 230,352.6 232,347.4 234,342.2 236,336.9 238,331.6 240,326.2 242,320.8 244,315.4 246,310.0 248,304.6 250,299.2 252,293.8 254,288.5 256,283.2 258,277.9 260,272.7 262,267.6 264,262.5 266,257.5 268,252.6 270,247.8 272,243.1 274,238.5 276,234.1 278,229.7 280,225.5 282,221.5 284,217.6 286,213.8 288,210.3 290,206.9 292,203.6 294,200.6 296,197.7 298,195.0 300,192.5 302,190.3 304,188.2 306,186.3 308,184.6 310,183.2 312,181.9 314,180.9 316,180.1 318,179.5 320,179.2 322,179.0 324,179.1 326,179.4 328,179.9 330,180.7 332,181.7 334,182.8 336,184.2 338,185.8 340,187.7 342,189.7 344,191.9 346,194.3 348,197.0 350,199.8 352,202.8 354,206.0 356,209.3 358,212.9 360,216.6 362,220.4 364,224.4 366,228.6 368,232.9 370,237.3 372,241.9 374,246.5 376,251.3 378,256.2 380,261.2 382,266.2 384,271.3 386,276.5 388,281.8 390,287.1 392,292.4 394,297.8 396,303.2 398,308.6 400,314.0 402,319.4 404,324.8 406,330.2 408,335.5 410,340.8 412,346.1 414,351.3 416,356.4 418,361.4 420,366.4 422,371.3 424,376.0 426,380.7 428,385.2 430,389.7 432,394.0 434,398.1 436,402.1 438,406.0 440,409.7 442,413.2 444,416.5 446,419.7 448,422.7 450,425.5 452,428.2 454,430.6 456,432.8 458,434.8 460,436.6 462,438.2 464,439.6 466,440.8 468,441.7 470,442.5 472,443.0 474,443.3 476,443.4 478,443.2 480,442.9 482,442.3 484,441.4 486,440.4 488,439.2 490,437.7 492,436.0 494,434.2 496,432.1 498,429.8 500,427.3 502,424.6 504,421.7 506,418.7 508,415.4 510,412.0 512,408.4 514,404.7 516,400.8 518,396.7 520,392.5 522,388.2 524,383.7 526,379.1 528,374.4 530,369.6 532,364.7 534,359.7 536,354.7 538,349.5 540,344.3 542,339.0 544,333.7 546,328.4 548,323.0 550,317.6 552,312.2 554,306.8 556,301.4 558,296.0 560,290.6 562,285.3 564,280.0 566,274.8 568,269.6 570,264.5 572,259.5 574,254.5 576,249.7 578,245.0 580,240.3 582,235.8 584,231.4 586,227.2 588,223.1 590,219.1 592,215.3 594,211.7 596,208.2 598,204.9 600,201.8 602,198.8 604,196.1 606,193.5 608,191.1 610,189.0 612,187.0 614,185.3 616,183.7 618,182.4 620,181.3 622,180.4 624,179.7 626,179.3 628,179.1 630,179.1 632,179.3 634,179.7 636,180.4 638,181.2 640,182.3 642,183.6 644,185.2 646,186.9 648,188.9 650,191.0 652,193.4 654,195.9 656,198.6 658,201.6 660,204.7 662,208.0 664,211.4 666,215.1 668,218.9 670,222.8 672,226.9 674,231.2 676,235.5 678,240.0 680,244.7 682,249.4 684,254.2 686,259.2 688,264.2 690,269.3 692,274.4 694,279.7 696,285.0 698,290.3 700,295.6 702,301.0 704,306.4 706,311.8 708,317.3 710,322.7 712,328.0 714,333.4 716,338.7 718,344.0 720,349.2 722,354.3 724,359.4 726,364.4 728,369.3 730,374.1 732,378.8 734,383.4 736,387.9 738,392.3 740,396.5 742,400.5 744,404.4 746,408.2 748,411.8 750,415.2 752,418.5 754,421.5 756,424.4 758,427.1 760,429.6 762,431.9 764,434.0 766,435.9 768,437.6 770,439.1 772,440.3 774,441.4 776,442.2 778,442.8 780,443.2 782,443.4 784,443.3 786,443.0 788,442.5 790,441.8 792,440.9 794,439.7 796,438.3 798,436.7 800,434.9 802,432.9 804,430.7 806,428.3 808,425.7 810,422.9 812,419.9 814,416.8 816,413.4 818,409.9 820,406.2 822,402.4 824,398.4 826,394.2 828,389.9 830,385.5 832,381.0 834,376.3 836,371.6 838,366.7 840,361.8 842,356.7 844,351.6 846,346.4 848,341.2 850,335.9"/><path d="M84,311.9 86,313.2 88,315.3 90,318.1 92,321.4 94,325.1 96,329.2 98,333.6 100,338.2 102,342.9 104,347.7 106,352.6 108,357.5 110,362.5 112,367.4 114,372.3 116,377.1 118,381.9 120,386.6 122,391.2 124,395.7 126,400.0 128,404.2 130,408.3 132,412.2 134,416.0 136,419.5 138,423.0 140,426.2 142,429.2 144,432.1 146,434.7 148,437.1 150,439.4 152,441.4 154,443.2 156,444.8 158,446.1 160,447.2 162,448.2 164,448.8 166,449.3 168,449.5 170,449.5 172,449.2 174,448.7 176,448.0 178,447.1 180,445.9 182,444.5 184,442.9 186,441.1 188,439.0 190,436.8 192,434.3 194,431.6 196,428.7 198,425.7 200,422.4 202,418.9 204,415.3 206,411.5 208,407.5 210,403.4 212,399.1 214,394.7 216,390.1 218,385.4 220,380.5 222,375.6 224,370.5 226,365.4 228,360.1 230,354.8 232,349.4 234,343.9 236,338.4 238,332.9 240,327.3 242,321.6 244,316.0 246,310.3 248,304.7 250,299.1 252,293.4 254,287.9 256,282.3 258,276.8 260,271.4 262,266.0 264,260.7 266,255.5 268,250.4 270,245.4 272,240.5 274,235.7 276,231.1 278,226.5 280,222.2 282,217.9 284,213.9 286,210.0 288,206.2 290,202.7 292,199.3 294,196.1 296,193.1 298,190.3 300,187.7 302,185.3 304,183.2 306,181.2 308,179.5 310,178.0 312,176.7 314,175.6 316,174.8 318,174.2 320,173.8 322,173.6 324,173.7 326,174.0 328,174.6 330,175.4 332,176.4 334,177.6 336,179.1 338,180.7 340,182.6 342,184.8 344,187.1 346,189.6 348,192.4 350,195.3 352,198.4 354,201.8 356,205.3 358,209.0 360,212.8 362,216.8 364,221.0 366,225.4 368,229.9 370,234.5 372,239.2 374,244.1 376,249.1 378,254.2 380,259.3 382,264.6 384,270.0 386,275.4 388,280.9 390,286.4 392,292.0 394,297.6 396,303.2 398,308.9 400,314.5 402,320.1 404,325.8 406,331.4 408,337.0 410,342.5 412,348.0 414,353.4 416,358.7 418,364.0 420,369.2 422,374.3 424,379.2 426,384.1 428,388.8 430,393.5 432,397.9 434,402.3 436,406.4 438,410.5 440,414.3 442,418.0 444,421.5 446,424.8 448,428.0 450,430.9 452,433.6 454,436.2 456,438.5 458,440.6 460,442.5 462,444.1 464,445.6 466,446.8 468,447.8 470,448.6 472,449.1 474,449.4 476,449.5 478,449.3 480,449.0 482,448.3 484,447.5 486,446.4 488,445.1 490,443.6 492,441.9 494,439.9 496,437.7 498,435.3 500,432.7 502,429.9 504,426.9 506,423.7 508,420.4 510,416.8 512,413.0 514,409.1 516,405.1 518,400.8 520,396.4 522,391.9 524,387.3 526,382.5 528,377.6 530,372.6 532,367.4 534,362.2 536,356.9 538,351.6 540,346.1 542,340.6 544,335.1 546,329.5 548,323.9 550,318.2 552,312.6 554,307.0 556,301.3 558,295.7 560,290.1 562,284.5 564,279.0 566,273.6 568,268.2 570,262.8 572,257.6 574,252.4 576,247.4 578,242.4 580,237.6 582,232.9 584,228.3 586,223.9 588,219.6 590,215.5 592,211.5 594,207.7 596,204.1 598,200.6 600,197.4 602,194.3 604,191.4 606,188.7 608,186.3 610,184.0 612,182.0 614,180.2 616,178.5 618,177.2 620,176.0 622,175.1 624,174.4 626,173.9 628,173.7 630,173.7 632,173.9 634,174.3 636,175.0 638,175.9 640,177.1 642,178.5 644,180.0 646,181.9 648,183.9 650,186.1 652,188.6 654,191.2 656,194.1 658,197.2 660,200.4 662,203.8 664,207.5 666,211.3 668,215.2 670,219.3 672,223.6 674,228.0 676,232.6 678,237.3 680,242.1 682,247.1 684,252.1 686,257.3 688,262.5 690,267.8 692,273.2 694,278.7 696,284.2 698,289.7 700,295.3 702,301.0 704,306.6 706,312.2 708,317.9 710,323.5 712,329.1 714,334.7 716,340.3 718,345.8 720,351.2 722,356.6 724,361.9 726,367.1 728,372.2 730,377.3 732,382.2 734,387.0 736,391.6 738,396.2 740,400.6 742,404.8 744,408.9 746,412.8 748,416.6 750,420.1 752,423.5 754,426.7 756,429.7 758,432.6 760,435.2 762,437.6 764,439.8 766,441.7 768,443.5 770,445.0 772,446.4 774,447.4 776,448.3 778,448.9 780,449.3 782,449.5 784,449.4 786,449.1 788,448.6 790,447.9 792,446.9 794,445.7 796,444.2 798,442.6 800,440.7 802,438.6 804,436.3 806,433.8 808,431.1 810,428.1 812,425.0 814,421.7 816,418.2 818,414.6 820,410.7 822,406.7 824,402.5 826,398.2 828,393.8 830,389.1 832,384.4 834,379.6 836,374.6 838,369.5 840,364.3 842,359.1 844,353.7 846,348.3 848,342.8 850,337.3"/><path d="M84,313.5 86,314.8 88,316.8 90,319.4 92,322.6 94,326.2 96,330.1 98,334.2 100,338.6 102,343.1 104,347.7 106,352.3 108,357.0 110,361.7 112,366.4 114,371.1 116,375.7 118,380.2 120,384.7 122,389.1 124,393.3 126,397.5 128,401.5 130,405.4 132,409.1 134,412.7 136,416.1 138,419.3 140,422.4 142,425.3 144,428.0 146,430.5 148,432.8 150,435.0 152,436.9 154,438.6 156,440.1 158,441.4 160,442.5 162,443.3 164,444.0 166,444.4 168,444.6 170,444.6 172,444.4 174,443.9 176,443.2 178,442.3 180,441.2 182,439.9 184,438.4 186,436.6 188,434.7 190,432.5 192,430.2 194,427.6 196,424.9 198,421.9 200,418.8 202,415.5 204,412.1 206,408.4 208,404.6 210,400.7 212,396.6 214,392.4 216,388.0 218,383.5 220,378.9 222,374.2 224,369.4 226,364.5 228,359.5 230,354.4 232,349.3 234,344.1 236,338.8 238,333.5 240,328.2 242,322.8 244,317.4 246,312.1 248,306.7 250,301.3 252,296.0 254,290.7 256,285.4 258,280.1 260,275.0 262,269.8 264,264.8 266,259.8 268,255.0 270,250.2 272,245.5 274,241.0 276,236.5 278,232.2 280,228.1 282,224.0 284,220.2 286,216.4 288,212.9 290,209.5 292,206.3 294,203.3 296,200.4 298,197.7 300,195.3 302,193.0 304,190.9 306,189.1 308,187.4 310,186.0 312,184.7 314,183.7 316,182.9 318,182.3 320,182.0 322,181.8 324,181.9 326,182.2 328,182.8 330,183.5 332,184.4 334,185.6 336,187.0 338,188.6 340,190.4 342,192.4 344,194.7 346,197.1 348,199.7 350,202.5 352,205.5 354,208.6 356,212.0 358,215.5 360,219.2 362,223.0 364,227.0 366,231.1 368,235.4 370,239.8 372,244.3 374,249.0 376,253.7 378,258.5 380,263.5 382,268.5 384,273.6 386,278.8 388,284.0 390,289.3 392,294.6 394,299.9 396,305.3 398,310.6 400,316.0 402,321.4 404,326.8 406,332.1 408,337.4 410,342.7 412,347.9 414,353.1 416,358.2 418,363.2 420,368.1 422,373.0 424,377.7 426,382.3 428,386.8 430,391.2 432,395.5 434,399.6 436,403.6 438,407.4 440,411.1 442,414.6 444,418.0 446,421.1 448,424.1 450,426.9 452,429.5 454,431.9 456,434.1 458,436.1 460,437.9 462,439.5 464,440.9 466,442.1 468,443.0 470,443.7 472,444.3 474,444.6 476,444.6 478,444.5 480,444.1 482,443.5 484,442.7 486,441.7 488,440.5 490,439.0 492,437.3 494,435.5 496,433.4 498,431.1 500,428.6 502,426.0 504,423.1 506,420.1 508,416.9 510,413.5 512,409.9 514,406.2 516,402.3 518,398.3 520,394.1 522,389.8 524,385.3 526,380.8 528,376.1 530,371.3 532,366.5 534,361.5 536,356.5 538,351.3 540,346.2 542,340.9 544,335.6 546,330.3 548,325.0 550,319.6 552,314.2 554,308.8 556,303.5 558,298.1 560,292.8 562,287.5 564,282.2 566,277.0 568,271.9 570,266.8 572,261.8 574,256.9 576,252.1 578,247.4 580,242.8 582,238.3 584,233.9 586,229.7 588,225.6 590,221.7 592,217.9 594,214.3 596,210.8 598,207.6 600,204.4 602,201.5 604,198.8 606,196.2 608,193.9 610,191.7 612,189.8 614,188.0 616,186.5 618,185.2 620,184.1 622,183.2 624,182.6 626,182.1 628,181.9 630,181.9 632,182.1 634,182.5 636,183.2 638,184.0 640,185.1 642,186.4 644,187.9 646,189.7 648,191.6 650,193.7 652,196.1 654,198.6 656,201.3 658,204.2 660,207.3 662,210.6 664,214.1 666,217.7 668,221.5 670,225.4 672,229.5 674,233.7 676,238.0 678,242.5 680,247.1 682,251.8 684,256.6 686,261.5 688,266.5 690,271.6 692,276.7 694,281.9 696,287.1 698,292.4 700,297.8 702,303.1 704,308.5 706,313.9 708,319.3 710,324.6 712,330.0 714,335.3 716,340.6 718,345.8 720,351.0 722,356.1 724,361.2 726,366.1 728,371.0 730,375.8 732,380.5 734,385.1 736,389.5 738,393.8 740,398.0 742,402.0 744,405.9 746,409.7 748,413.2 750,416.6 752,419.9 754,422.9 756,425.8 758,428.5 760,431.0 762,433.3 764,435.3 766,437.2 768,438.9 770,440.4 772,441.6 774,442.7 776,443.5 778,444.1 780,444.5 782,444.6 784,444.6 786,444.3 788,443.8 790,443.1 792,442.1 794,441.0 796,439.6 798,438.0 800,436.2 802,434.3 804,432.1 806,429.7 808,427.1 810,424.3 812,421.3 814,418.2 816,414.8 818,411.3 820,407.7 822,403.9 824,399.9 826,395.8 828,391.5 830,387.1 832,382.6 834,378.0 836,373.3 838,368.4 840,363.5 842,358.5 844,353.4 846,348.2 848,343.0 850,337.8"/><path d="M84,316.9 86,318.2 88,320.3 90,323.0 92,326.3 94,329.9 96,334.0 98,338.2 100,342.7 102,347.3 104,352.1 106,356.9 108,361.7 110,366.6 112,371.4 114,376.2 116,380.9 118,385.6 120,390.2 122,394.7 124,399.1 126,403.4 128,407.5 130,411.5 132,415.3 134,419.0 136,422.5 138,425.8 140,429.0 142,432.0 144,434.8 146,437.4 148,439.8 150,441.9 152,443.9 154,445.7 156,447.2 158,448.6 160,449.7 162,450.6 164,451.2 166,451.7 168,451.9 170,451.9 172,451.6 174,451.1 176,450.4 178,449.5 180,448.4 182,447.0 184,445.4 186,443.6 188,441.6 190,439.4 192,437.0 194,434.4 196,431.5 198,428.5 200,425.3 202,421.9 204,418.4 206,414.6 208,410.7 210,406.7 212,402.5 214,398.1 216,393.6 218,389.0 220,384.3 222,379.4 224,374.4 226,369.4 228,364.2 230,359.0 232,353.7 234,348.4 236,343.0 238,337.5 240,332.0 242,326.5 244,321.0 246,315.4 248,309.9 250,304.4 252,298.9 254,293.4 256,288.0 258,282.6 260,277.2 262,272.0 264,266.8 266,261.7 268,256.7 270,251.7 272,246.9 274,242.3 276,237.7 278,233.3 280,229.0 282,224.8 284,220.8 286,217.0 288,213.3 290,209.9 292,206.5 294,203.4 296,200.5 298,197.7 300,195.2 302,192.9 304,190.7 306,188.8 308,187.1 310,185.6 312,184.4 314,183.3 316,182.5 318,181.9 320,181.5 322,181.4 324,181.5 326,181.8 328,182.3 330,183.1 332,184.1 334,185.3 336,186.7 338,188.4 340,190.2 342,192.3 344,194.6 346,197.1 348,199.7 350,202.6 352,205.7 354,209.0 356,212.4 358,216.0 360,219.8 362,223.8 364,227.9 366,232.1 368,236.5 370,241.0 372,245.7 374,250.5 376,255.4 378,260.3 380,265.4 382,270.6 384,275.8 386,281.2 388,286.5 390,291.9 392,297.4 394,302.9 396,308.4 398,314.0 400,319.5 402,325.0 404,330.6 406,336.1 408,341.5 410,346.9 412,352.3 414,357.6 416,362.9 418,368.0 420,373.1 422,378.1 424,383.0 426,387.8 428,392.4 430,396.9 432,401.3 434,405.6 436,409.7 438,413.6 440,417.4 442,421.0 444,424.4 446,427.7 448,430.8 450,433.6 452,436.3 454,438.8 456,441.1 458,443.1 460,445.0 462,446.6 464,448.0 466,449.2 468,450.2 470,451.0 472,451.5 474,451.8 476,451.9 478,451.7 480,451.4 482,450.8 484,449.9 486,448.9 488,447.6 490,446.1 492,444.4 494,442.5 496,440.3 498,438.0 500,435.4 502,432.7 504,429.7 506,426.6 508,423.3 510,419.8 512,416.1 514,412.3 516,408.3 518,404.2 520,399.9 522,395.4 524,390.9 526,386.2 528,381.4 530,376.4 532,371.4 534,366.3 536,361.1 538,355.9 540,350.5 542,345.1 544,339.7 546,334.2 548,328.7 550,323.2 552,317.6 554,312.1 556,306.6 558,301.1 560,295.6 562,290.1 564,284.7 566,279.4 568,274.1 570,268.8 572,263.7 574,258.7 576,253.7 578,248.8 580,244.1 582,239.5 584,235.0 586,230.7 588,226.5 590,222.4 592,218.5 594,214.8 596,211.2 598,207.9 600,204.7 602,201.6 604,198.8 606,196.2 608,193.8 610,191.6 612,189.6 614,187.8 616,186.2 618,184.8 620,183.7 622,182.8 624,182.1 626,181.7 628,181.4 630,181.4 632,181.6 634,182.1 636,182.8 638,183.6 640,184.8 642,186.1 644,187.7 646,189.4 648,191.4 650,193.6 652,196.0 654,198.6 656,201.5 658,204.5 660,207.6 662,211.0 664,214.6 666,218.3 668,222.2 670,226.2 672,230.4 674,234.7 676,239.2 678,243.8 680,248.5 682,253.4 684,258.3 686,263.4 688,268.5 690,273.7 692,279.0 694,284.4 696,289.8 698,295.2 700,300.7 702,306.2 704,311.8 706,317.3 708,322.8 710,328.4 712,333.9 714,339.3 716,344.8 718,350.2 720,355.5 722,360.8 724,366.0 726,371.1 728,376.1 730,381.0 732,385.9 734,390.6 736,395.1 738,399.6 740,403.9 742,408.0 744,412.1 746,415.9 748,419.6 750,423.1 752,426.4 754,429.6 756,432.5 758,435.3 760,437.8 762,440.2 764,442.3 766,444.3 768,446.0 770,447.5 772,448.8 774,449.9 776,450.7 778,451.3 780,451.7 782,451.9 784,451.8 786,451.5 788,451.0 790,450.3 792,449.3 794,448.1 796,446.7 798,445.1 800,443.3 802,441.2 804,438.9 806,436.5 808,433.8 810,430.9 812,427.9 814,424.6 816,421.2 818,417.6 820,413.9 822,409.9 824,405.8 826,401.6 828,397.2 830,392.7 832,388.1 834,383.3 836,378.4 838,373.4 840,368.4 842,363.2 844,358.0 846,352.7 848,347.3 850,341.9"/><path d="M84,317.3 86,318.7 88,320.9 90,323.8 92,327.3 94,331.3 96,335.6 98,340.2 100,345.0 102,350.0 104,355.1 106,360.2 108,365.4 110,370.7 112,375.9 114,381.0 116,386.1 118,391.2 120,396.1 122,400.9 124,405.6 126,410.2 128,414.7 130,418.9 132,423.1 134,427.0 136,430.8 138,434.4 140,437.8 142,441.0 144,444.0 146,446.8 148,449.4 150,451.7 152,453.8 154,455.7 156,457.4 158,458.8 160,460.0 162,461.0 164,461.7 166,462.1 168,462.4 170,462.4 172,462.1 174,461.6 176,460.8 178,459.9 180,458.6 182,457.2 184,455.5 186,453.5 188,451.4 190,449.0 192,446.4 194,443.6 196,440.5 198,437.3 200,433.8 202,430.2 204,426.3 206,422.3 208,418.1 210,413.8 212,409.3 214,404.6 216,399.7 218,394.8 220,389.7 222,384.5 224,379.1 226,373.7 228,368.2 230,362.6 232,356.9 234,351.1 236,345.3 238,339.4 240,333.5 242,327.6 244,321.7 246,315.7 248,309.7 250,303.8 252,297.9 254,292.0 256,286.2 258,280.4 260,274.6 262,269.0 264,263.4 266,257.9 268,252.5 270,247.2 272,242.1 274,237.0 276,232.1 278,227.4 280,222.8 282,218.3 284,214.0 286,209.9 288,206.0 290,202.2 292,198.6 294,195.3 296,192.1 298,189.2 300,186.5 302,183.9 304,181.7 306,179.6 308,177.8 310,176.2 312,174.8 314,173.7 316,172.8 318,172.2 320,171.8 322,171.6 324,171.7 326,172.0 328,172.6 330,173.4 332,174.5 334,175.8 336,177.3 338,179.1 340,181.1 342,183.3 344,185.8 346,188.4 348,191.3 350,194.4 352,197.7 354,201.2 356,204.9 358,208.8 360,212.9 362,217.1 364,221.6 366,226.1 368,230.9 370,235.7 372,240.7 374,245.9 376,251.1 378,256.5 380,261.9 382,267.5 384,273.1 386,278.8 388,284.6 390,290.5 392,296.3 394,302.2 396,308.2 398,314.1 400,320.1 402,326.0 404,332.0 406,337.9 408,343.8 410,349.6 412,355.4 414,361.1 416,366.7 418,372.3 420,377.7 422,383.1 424,388.3 426,393.5 428,398.5 430,403.3 432,408.0 434,412.6 436,417.0 438,421.2 440,425.3 442,429.2 444,432.9 446,436.4 448,439.7 450,442.8 452,445.7 454,448.3 456,450.8 458,453.0 460,455.0 462,456.7 464,458.3 466,459.6 468,460.6 470,461.4 472,462.0 474,462.3 476,462.4 478,462.2 480,461.8 482,461.2 484,460.3 486,459.1 488,457.8 490,456.2 492,454.3 494,452.3 496,450.0 498,447.4 500,444.7 502,441.8 504,438.6 506,435.2 508,431.7 510,427.9 512,424.0 514,419.8 516,415.5 518,411.1 520,406.5 522,401.7 524,396.8 526,391.7 528,386.6 530,381.3 532,375.9 534,370.4 536,364.8 538,359.2 540,353.4 542,347.6 544,341.8 546,335.9 548,330.0 550,324.0 552,318.1 554,312.1 556,306.2 558,300.3 560,294.4 562,288.5 564,282.7 566,276.9 568,271.2 570,265.6 572,260.1 574,254.7 576,249.3 578,244.1 580,239.0 582,234.1 584,229.3 586,224.6 588,220.1 590,215.7 592,211.5 594,207.5 596,203.7 598,200.0 600,196.6 602,193.4 604,190.3 606,187.5 608,184.9 610,182.5 612,180.4 614,178.5 616,176.8 618,175.3 620,174.1 622,173.1 624,172.4 626,171.9 628,171.6 630,171.6 632,171.9 634,172.3 636,173.1 638,174.0 640,175.2 642,176.7 644,178.4 646,180.3 648,182.4 650,184.8 652,187.4 654,190.2 656,193.2 658,196.4 660,199.8 662,203.4 664,207.3 666,211.3 668,215.4 670,219.8 672,224.3 674,228.9 676,233.8 678,238.7 680,243.8 682,249.0 684,254.3 686,259.7 688,265.3 690,270.9 692,276.6 694,282.3 696,288.1 698,294.0 700,299.9 702,305.8 704,311.7 706,317.7 708,323.7 710,329.6 712,335.5 714,341.4 716,347.3 718,353.1 720,358.8 722,364.5 724,370.0 726,375.5 728,380.9 730,386.2 732,391.4 734,396.5 736,401.4 738,406.2 740,410.8 742,415.3 744,419.6 746,423.7 748,427.7 750,431.4 752,435.0 754,438.4 756,441.6 758,444.5 760,447.3 762,449.8 764,452.1 766,454.2 768,456.1 770,457.7 772,459.1 774,460.2 776,461.1 778,461.8 780,462.2 782,462.4 784,462.3 786,462.0 788,461.5 790,460.7 792,459.6 794,458.4 796,456.8 798,455.1 800,453.1 802,450.9 804,448.5 806,445.8 808,443.0 810,439.9 812,436.6 814,433.1 816,429.4 818,425.6 820,421.5 822,417.3 824,412.9 826,408.3 828,403.6 830,398.8 832,393.8 834,388.7 836,383.4 838,378.1 840,372.6 842,367.1 844,361.4 846,355.7 848,350.0 850,344.1"/><path d="M84,319.1 86,320.4 88,322.5 90,325.2 92,328.5 94,332.2 96,336.3 98,340.6 100,345.2 102,349.9 104,354.7 106,359.5 108,364.5 110,369.4 112,374.3 114,379.1 116,384.0 118,388.7 120,393.4 122,397.9 124,402.4 126,406.7 128,410.9 130,414.9 132,418.8 134,422.5 136,426.1 138,429.5 140,432.7 142,435.7 144,438.5 146,441.2 148,443.6 150,445.8 152,447.8 154,449.6 156,451.2 158,452.5 160,453.7 162,454.5 164,455.2 166,455.7 168,455.9 170,455.9 172,455.6 174,455.1 176,454.4 178,453.5 180,452.3 182,451.0 184,449.4 186,447.5 188,445.5 190,443.2 192,440.8 194,438.1 196,435.3 198,432.2 200,428.9 202,425.5 204,421.9 206,418.1 208,414.2 210,410.0 212,405.8 214,401.4 216,396.8 218,392.1 220,387.3 222,382.4 224,377.4 226,372.2 228,367.0 230,361.7 232,356.4 234,350.9 236,345.5 238,339.9 240,334.4 242,328.8 244,323.2 246,317.5 248,311.9 250,306.3 252,300.7 254,295.2 256,289.7 258,284.2 260,278.8 262,273.5 264,268.2 266,263.0 268,257.9 270,253.0 272,248.1 274,243.3 276,238.7 278,234.2 280,229.9 282,225.7 284,221.6 286,217.7 288,214.0 290,210.5 292,207.1 294,204.0 296,201.0 298,198.2 300,195.6 302,193.3 304,191.1 306,189.2 308,187.4 310,185.9 312,184.6 314,183.6 316,182.8 318,182.2 320,181.8 322,181.6 324,181.7 326,182.0 328,182.6 330,183.3 332,184.3 334,185.6 336,187.0 338,188.7 340,190.6 342,192.7 344,195.0 346,197.5 348,200.2 350,203.2 352,206.3 354,209.6 356,213.1 358,216.7 360,220.6 362,224.6 364,228.7 366,233.1 368,237.5 370,242.1 372,246.8 374,251.7 376,256.6 378,261.7 380,266.8 382,272.1 384,277.4 386,282.8 388,288.2 390,293.7 392,299.3 394,304.8 396,310.4 398,316.1 400,321.7 402,327.3 404,332.9 406,338.5 408,344.0 410,349.5 412,354.9 414,360.3 416,365.6 418,370.9 420,376.0 422,381.1 424,386.0 426,390.9 428,395.6 430,400.2 432,404.6 434,408.9 436,413.1 438,417.1 440,420.9 442,424.6 444,428.1 446,431.4 448,434.5 450,437.4 452,440.1 454,442.6 456,444.9 458,447.0 460,448.9 462,450.6 464,452.0 466,453.2 468,454.2 470,455.0 472,455.5 474,455.8 476,455.9 478,455.7 480,455.4 482,454.7 484,453.9 486,452.8 488,451.5 490,450.0 492,448.3 494,446.3 496,444.2 498,441.8 500,439.2 502,436.4 504,433.4 506,430.3 508,426.9 510,423.4 512,419.6 514,415.8 516,411.7 518,407.5 520,403.1 522,398.6 524,394.0 526,389.3 528,384.4 530,379.4 532,374.3 534,369.1 536,363.9 538,358.5 540,353.1 542,347.7 544,342.1 546,336.6 548,331.0 550,325.4 552,319.8 554,314.2 556,308.6 558,303.0 560,297.4 562,291.9 564,286.4 566,281.0 568,275.6 570,270.3 572,265.1 574,260.0 576,254.9 578,250.0 580,245.2 582,240.5 584,236.0 586,231.6 588,227.3 590,223.2 592,219.3 594,215.5 596,211.9 598,208.5 600,205.2 602,202.2 604,199.3 606,196.6 608,194.2 610,191.9 612,189.9 614,188.1 616,186.5 618,185.1 620,184.0 622,183.1 624,182.4 626,181.9 628,181.7 630,181.7 632,181.9 634,182.3 636,183.0 638,183.9 640,185.1 642,186.4 644,188.0 646,189.8 648,191.8 650,194.0 652,196.5 654,199.1 656,202.0 658,205.0 660,208.2 662,211.7 664,215.3 666,219.0 668,223.0 670,227.1 672,231.3 674,235.7 676,240.3 678,244.9 680,249.7 682,254.6 684,259.6 686,264.8 688,270.0 690,275.3 692,280.6 694,286.0 696,291.5 698,297.0 700,302.6 702,308.2 704,313.8 706,319.4 708,325.0 710,330.6 712,336.2 714,341.8 716,347.3 718,352.8 720,358.2 722,363.5 724,368.8 726,374.0 728,379.1 730,384.1 732,388.9 734,393.7 736,398.4 738,402.9 740,407.2 742,411.4 744,415.5 746,419.4 748,423.1 750,426.7 752,430.1 754,433.2 756,436.2 758,439.0 760,441.6 762,444.0 764,446.2 766,448.2 768,449.9 770,451.5 772,452.8 774,453.8 776,454.7 778,455.3 780,455.7 782,455.9 784,455.8 786,455.5 788,455.0 790,454.3 792,453.3 794,452.1 796,450.7 798,449.0 800,447.1 802,445.1 804,442.8 806,440.3 808,437.6 810,434.7 812,431.6 814,428.3 816,424.8 818,421.2 820,417.3 822,413.3 824,409.2 826,404.9 828,400.5 830,395.9 832,391.2 834,386.3 836,381.4 838,376.4 840,371.2 842,366.0 844,360.7 846,355.3 848,349.8 850,344.3"/><path d="M84,319.4 86,320.8 88,322.9 90,325.8 92,329.1 94,333.0 96,337.1 98,341.6 100,346.2 102,351.1 104,356.0 106,361.0 108,366.0 110,371.1 112,376.1 114,381.1 116,386.0 118,390.9 120,395.7 122,400.4 124,404.9 126,409.3 128,413.6 130,417.8 132,421.8 134,425.6 136,429.3 138,432.8 140,436.0 142,439.1 144,442.0 146,444.7 148,447.2 150,449.5 152,451.6 154,453.4 156,455.0 158,456.4 160,457.5 162,458.5 164,459.2 166,459.6 168,459.8 170,459.8 172,459.6 174,459.1 176,458.4 178,457.4 180,456.2 182,454.8 184,453.1 186,451.3 188,449.2 190,446.9 192,444.3 194,441.6 196,438.7 198,435.5 200,432.2 202,428.7 204,425.0 206,421.1 208,417.0 210,412.8 212,408.4 214,403.9 216,399.2 218,394.4 220,389.5 222,384.4 224,379.3 226,374.0 228,368.7 230,363.2 232,357.7 234,352.1 236,346.5 238,340.8 240,335.1 242,329.4 244,323.6 246,317.9 248,312.1 250,306.4 252,300.6 254,294.9 256,289.3 258,283.7 260,278.1 262,272.6 264,267.2 266,261.9 268,256.7 270,251.6 272,246.6 274,241.7 276,237.0 278,232.4 280,227.9 282,223.6 284,219.4 286,215.5 288,211.6 290,208.0 292,204.6 294,201.3 296,198.3 298,195.4 300,192.8 302,190.3 304,188.1 306,186.1 308,184.4 310,182.8 312,181.5 314,180.4 316,179.6 318,178.9 320,178.6 322,178.4 324,178.5 326,178.8 328,179.4 330,180.2 332,181.2 334,182.4 336,183.9 338,185.6 340,187.6 342,189.7 344,192.1 346,194.7 348,197.5 350,200.5 352,203.7 354,207.1 356,210.7 358,214.4 360,218.4 362,222.5 364,226.8 366,231.2 368,235.7 370,240.5 372,245.3 374,250.3 376,255.4 378,260.5 380,265.8 382,271.2 384,276.7 386,282.2 388,287.8 390,293.4 392,299.1 394,304.8 396,310.6 398,316.3 400,322.1 402,327.9 404,333.6 406,339.3 408,345.0 410,350.7 412,356.2 414,361.8 416,367.2 418,372.6 420,377.9 422,383.1 424,388.2 426,393.1 428,398.0 430,402.7 432,407.2 434,411.7 436,415.9 438,420.0 440,424.0 442,427.7 444,431.3 446,434.7 448,437.9 450,440.9 452,443.6 454,446.2 456,448.6 458,450.7 460,452.7 462,454.4 464,455.9 466,457.1 468,458.1 470,458.9 472,459.5 474,459.8 476,459.8 478,459.7 480,459.3 482,458.7 484,457.8 486,456.7 488,455.4 490,453.8 492,452.0 494,450.0 496,447.8 498,445.4 500,442.7 502,439.9 504,436.8 506,433.6 508,430.1 510,426.5 512,422.7 514,418.7 516,414.5 518,410.2 520,405.7 522,401.1 524,396.4 526,391.5 528,386.5 530,381.3 532,376.1 534,370.8 536,365.4 538,359.9 540,354.4 542,348.8 544,343.1 546,337.4 548,331.7 550,325.9 552,320.2 554,314.4 556,308.7 558,302.9 560,297.2 562,291.5 564,285.9 566,280.3 568,274.8 570,269.4 572,264.0 574,258.8 576,253.6 578,248.6 580,243.7 582,238.9 584,234.2 586,229.7 588,225.3 590,221.1 592,217.0 594,213.2 596,209.4 598,205.9 600,202.6 602,199.5 604,196.5 606,193.8 608,191.3 610,189.0 612,186.9 614,185.0 616,183.4 618,182.0 620,180.8 622,179.9 624,179.2 626,178.7 628,178.4 630,178.4 632,178.7 634,179.1 636,179.8 638,180.8 640,181.9 642,183.3 644,184.9 646,186.8 648,188.9 650,191.1 652,193.6 654,196.4 656,199.3 658,202.4 660,205.7 662,209.2 664,212.9 666,216.8 668,220.8 670,225.0 672,229.4 674,233.9 676,238.6 678,243.4 680,248.3 682,253.3 684,258.5 686,263.7 688,269.1 690,274.5 692,280.0 694,285.5 696,291.2 698,296.8 700,302.6 702,308.3 704,314.0 706,319.8 708,325.6 710,331.3 712,337.0 714,342.7 716,348.4 718,354.0 720,359.6 722,365.1 724,370.5 726,375.8 728,381.0 730,386.1 732,391.2 734,396.0 736,400.8 738,405.4 740,409.9 742,414.2 744,418.4 746,422.4 748,426.2 750,429.9 752,433.3 754,436.6 756,439.7 758,442.6 760,445.2 762,447.7 764,449.9 766,451.9 768,453.7 770,455.3 772,456.6 774,457.7 776,458.6 778,459.3 780,459.7 782,459.8 784,459.8 786,459.5 788,458.9 790,458.2 792,457.2 794,455.9 796,454.5 798,452.8 800,450.9 802,448.7 804,446.4 806,443.8 808,441.0 810,438.1 812,434.9 814,431.5 816,427.9 818,424.2 820,420.3 822,416.2 824,411.9 826,407.5 828,403.0 830,398.3 832,393.4 834,388.5 836,383.4 838,378.2 840,372.9 842,367.6 844,362.1 846,356.6 848,351.0 850,345.4"/><path d="M84,321.8 86,322.9 88,324.9 90,327.4 92,330.5 94,333.9 96,337.6 98,341.6 100,345.8 102,350.1 104,354.5 106,359.0 108,363.5 110,368.0 112,372.5 114,377.0 116,381.4 118,385.8 120,390.1 122,394.3 124,398.4 126,402.3 128,406.2 130,409.9 132,413.5 134,416.9 136,420.2 138,423.3 140,426.3 142,429.0 144,431.6 146,434.0 148,436.3 150,438.3 152,440.2 154,441.8 156,443.2 158,444.5 160,445.5 162,446.3 164,447.0 166,447.4 168,447.6 170,447.5 172,447.3 174,446.9 176,446.2 178,445.4 180,444.3 182,443.0 184,441.6 186,439.9 188,438.0 190,435.9 192,433.7 194,431.2 196,428.6 198,425.8 200,422.8 202,419.6 204,416.3 206,412.8 208,409.2 210,405.4 212,401.5 214,397.4 216,393.2 218,388.9 220,384.5 222,380.0 224,375.4 226,370.7 228,365.9 230,361.0 232,356.1 234,351.1 236,346.0 238,340.9 240,335.8 242,330.7 244,325.5 246,320.4 248,315.2 250,310.0 252,304.9 254,299.8 256,294.7 258,289.7 260,284.7 262,279.8 264,275.0 266,270.2 268,265.6 270,261.0 272,256.5 274,252.1 276,247.9 278,243.7 280,239.7 282,235.9 284,232.2 286,228.6 288,225.2 290,221.9 292,218.8 294,215.9 296,213.2 298,210.6 300,208.3 302,206.1 304,204.1 306,202.3 308,200.7 310,199.3 312,198.2 314,197.2 316,196.4 318,195.9 320,195.5 322,195.4 324,195.5 326,195.8 328,196.3 330,197.0 332,197.9 334,199.0 336,200.3 338,201.9 340,203.6 342,205.5 344,207.7 346,210.0 348,212.5 350,215.2 352,218.1 354,221.1 356,224.3 358,227.7 360,231.2 362,234.9 364,238.7 366,242.7 368,246.8 370,251.0 372,255.3 374,259.8 376,264.3 378,269.0 380,273.7 382,278.5 384,283.4 386,288.4 388,293.4 390,298.5 392,303.6 394,308.7 396,313.8 398,319.0 400,324.2 402,329.3 404,334.5 406,339.6 408,344.7 410,349.7 412,354.7 414,359.7 416,364.6 418,369.4 420,374.1 422,378.8 424,383.3 426,387.8 428,392.1 430,396.3 432,400.4 434,404.4 436,408.2 438,411.9 440,415.4 442,418.8 444,422.0 446,425.0 448,427.9 450,430.6 452,433.1 454,435.4 456,437.5 458,439.4 460,441.1 462,442.7 464,444.0 466,445.1 468,446.0 470,446.7 472,447.2 474,447.5 476,447.6 478,447.4 480,447.1 482,446.5 484,445.7 486,444.8 488,443.6 490,442.2 492,440.6 494,438.8 496,436.8 498,434.6 500,432.2 502,429.7 504,426.9 506,424.0 508,420.9 510,417.7 512,414.2 514,410.7 516,406.9 518,403.1 520,399.1 522,394.9 524,390.7 526,386.3 528,381.8 530,377.2 532,372.6 534,367.8 536,363.0 538,358.0 540,353.1 542,348.0 544,343.0 546,337.9 548,332.7 550,327.6 552,322.4 554,317.3 556,312.1 558,307.0 560,301.8 562,296.8 564,291.7 566,286.7 568,281.8 570,276.9 572,272.1 574,267.4 576,262.8 578,258.3 580,253.9 582,249.6 584,245.4 586,241.3 588,237.4 590,233.6 592,230.0 594,226.5 596,223.2 598,220.1 600,217.1 602,214.3 604,211.6 606,209.2 608,206.9 610,204.9 612,203.0 614,201.3 616,199.9 618,198.6 620,197.5 622,196.7 624,196.1 626,195.6 628,195.4 630,195.4 632,195.6 634,196.0 636,196.7 638,197.5 640,198.5 642,199.8 644,201.2 646,202.9 648,204.7 650,206.8 652,209.0 654,211.5 656,214.1 658,216.9 660,219.9 662,223.0 664,226.3 666,229.8 668,233.4 670,237.2 672,241.1 674,245.1 676,249.3 678,253.6 680,258.0 682,262.5 684,267.1 686,271.8 688,276.6 690,281.5 692,286.4 694,291.4 696,296.4 698,301.5 700,306.6 702,311.8 704,316.9 706,322.1 708,327.3 710,332.4 712,337.5 714,342.6 716,347.7 718,352.7 720,357.7 722,362.6 724,367.5 726,372.3 728,376.9 730,381.5 732,386.0 734,390.4 736,394.7 738,398.8 740,402.8 742,406.7 744,410.4 746,414.0 748,417.5 750,420.7 752,423.8 754,426.8 756,429.5 758,432.1 760,434.5 762,436.7 764,438.7 766,440.5 768,442.1 770,443.5 772,444.7 774,445.7 776,446.5 778,447.1 780,447.4 782,447.6 784,447.5 786,447.2 788,446.8 790,446.1 792,445.2 794,444.1 796,442.8 798,441.2 800,439.5 802,437.6 804,435.5 806,433.2 808,430.7 810,428.1 812,425.2 814,422.2 816,419.0 818,415.6 820,412.1 822,408.5 824,404.6 826,400.7 828,396.6 830,392.4 832,388.1 834,383.6 836,379.1 838,374.4 840,369.7 842,364.9 844,360.0 846,355.1 848,350.1 850,345.0"/><path d="M84,322.2 86,323.4 88,325.5 90,328.2 92,331.4 94,335.1 96,339.1 98,343.3 100,347.8 102,352.4 104,357.1 106,361.9 108,366.7 110,371.5 112,376.3 114,381.1 116,385.8 118,390.4 120,395.0 122,399.5 124,403.8 126,408.1 128,412.2 130,416.2 132,420.0 134,423.6 136,427.1 138,430.5 140,433.6 142,436.6 144,439.3 146,441.9 148,444.3 150,446.5 152,448.4 154,450.2 156,451.7 158,453.1 160,454.2 162,455.0 164,455.7 166,456.1 168,456.3 170,456.3 172,456.1 174,455.6 176,454.9 178,454.0 180,452.9 182,451.5 184,450.0 186,448.2 188,446.2 190,444.0 192,441.5 194,438.9 196,436.1 198,433.1 200,429.9 202,426.6 204,423.0 206,419.3 208,415.4 210,411.4 212,407.2 214,402.9 216,398.4 218,393.8 220,389.1 222,384.3 224,379.3 226,374.3 228,369.2 230,364.0 232,358.7 234,353.4 236,348.0 238,342.6 240,337.1 242,331.7 244,326.2 246,320.6 248,315.1 250,309.6 252,304.2 254,298.7 256,293.3 258,288.0 260,282.7 262,277.4 264,272.3 266,267.2 268,262.2 270,257.3 272,252.5 274,247.9 276,243.3 278,238.9 280,234.7 282,230.5 284,226.6 286,222.8 288,219.1 290,215.6 292,212.4 294,209.2 296,206.3 298,203.6 300,201.1 302,198.7 304,196.6 306,194.7 308,193.0 310,191.6 312,190.3 314,189.3 316,188.4 318,187.8 320,187.5 322,187.3 324,187.4 326,187.7 328,188.3 330,189.0 332,190.0 334,191.2 336,192.6 338,194.3 340,196.1 342,198.2 344,200.4 346,202.9 348,205.6 350,208.5 352,211.5 354,214.8 356,218.2 358,221.8 360,225.5 362,229.5 364,233.5 366,237.8 368,242.1 370,246.7 372,251.3 374,256.0 376,260.9 378,265.9 380,270.9 382,276.0 384,281.3 386,286.5 388,291.9 390,297.3 392,302.7 394,308.2 396,313.7 398,319.2 400,324.7 402,330.2 404,335.7 406,341.2 408,346.6 410,352.0 412,357.3 414,362.6 416,367.8 418,373.0 420,378.0 422,383.0 424,387.8 426,392.6 428,397.2 430,401.7 432,406.1 434,410.3 436,414.4 438,418.3 440,422.0 442,425.6 444,429.1 446,432.3 448,435.3 450,438.2 452,440.9 454,443.3 456,445.6 458,447.7 460,449.5 462,451.1 464,452.5 466,453.7 468,454.7 470,455.5 472,456.0 474,456.3 476,456.4 478,456.2 480,455.8 482,455.2 484,454.4 486,453.4 488,452.1 490,450.6 492,448.9 494,447.0 496,444.9 498,442.5 500,440.0 502,437.3 504,434.3 506,431.2 508,427.9 510,424.5 512,420.8 514,417.0 516,413.0 518,408.9 520,404.6 522,400.2 524,395.7 526,391.0 528,386.2 530,381.3 532,376.3 534,371.3 536,366.1 538,360.8 540,355.5 542,350.2 544,344.8 546,339.3 548,333.9 550,328.4 552,322.8 554,317.3 556,311.8 558,306.4 560,300.9 562,295.5 564,290.1 566,284.8 568,279.5 570,274.3 572,269.2 574,264.2 576,259.2 578,254.4 580,249.7 582,245.1 584,240.7 586,236.3 588,232.2 590,228.1 592,224.3 594,220.5 596,217.0 598,213.6 600,210.5 602,207.5 604,204.7 606,202.1 608,199.7 610,197.5 612,195.5 614,193.7 616,192.1 618,190.8 620,189.6 622,188.7 624,188.1 626,187.6 628,187.4 630,187.4 632,187.6 634,188.0 636,188.7 638,189.6 640,190.7 642,192.0 644,193.6 646,195.3 648,197.3 650,199.5 652,201.9 654,204.5 656,207.3 658,210.3 660,213.4 662,216.8 664,220.3 666,224.0 668,227.9 670,231.9 672,236.1 674,240.4 676,244.8 678,249.4 680,254.1 682,258.9 684,263.9 686,268.9 688,274.0 690,279.2 692,284.4 694,289.8 696,295.1 698,300.5 700,306.0 702,311.5 704,317.0 706,322.5 708,328.0 710,333.5 712,339.0 714,344.4 716,349.8 718,355.2 720,360.5 722,365.8 724,370.9 726,376.0 728,381.0 730,385.9 732,390.7 734,395.4 736,399.9 738,404.3 740,408.6 742,412.8 744,416.7 746,420.6 748,424.2 750,427.7 752,431.0 754,434.1 756,437.1 758,439.8 760,442.4 762,444.7 764,446.9 766,448.8 768,450.5 770,452.0 772,453.3 774,454.3 776,455.2 778,455.8 780,456.2 782,456.4 784,456.3 786,456.0 788,455.5 790,454.8 792,453.8 794,452.6 796,451.2 798,449.6 800,447.8 802,445.7 804,443.5 806,441.0 808,438.4 810,435.5 812,432.5 814,429.3 816,425.9 818,422.3 820,418.5 822,414.6 824,410.6 826,406.3 828,402.0 830,397.5 832,392.9 834,388.1 836,383.3 838,378.3 840,373.3 842,368.2 844,363.0 846,357.7 848,352.3 850,346.9"/><path d="M84,329.1 86,330.4 88,332.6 90,335.6 92,339.0 94,342.9 96,347.2 98,351.8 100,356.6 102,361.5 104,366.6 106,371.7 108,376.8 110,382.0 112,387.2 114,392.3 116,397.4 118,402.3 120,407.2 122,412.0 124,416.7 126,421.3 128,425.7 130,429.9 132,434.0 134,438.0 136,441.7 138,445.3 140,448.6 142,451.8 144,454.8 146,457.6 148,460.1 150,462.4 152,464.6 154,466.4 156,468.1 158,469.5 160,470.7 162,471.6 164,472.3 166,472.8 168,473.0 170,473.0 172,472.8 174,472.3 176,471.5 178,470.5 180,469.3 182,467.9 184,466.2 186,464.3 188,462.1 190,459.7 192,457.2 194,454.4 196,451.3 198,448.1 200,444.7 202,441.1 204,437.3 206,433.3 208,429.1 210,424.8 212,420.3 214,415.7 216,410.9 218,406.0 220,400.9 222,395.7 224,390.4 226,385.0 228,379.6 230,374.0 232,368.3 234,362.6 236,356.8 238,351.0 240,345.2 242,339.3 244,333.4 246,327.5 248,321.6 250,315.7 252,309.8 254,304.0 256,298.2 258,292.4 260,286.7 262,281.1 264,275.6 266,270.1 268,264.8 270,259.5 272,254.4 274,249.4 276,244.5 278,239.8 280,235.2 282,230.8 284,226.5 286,222.5 288,218.6 290,214.8 292,211.3 294,208.0 296,204.8 298,201.9 300,199.2 302,196.7 304,194.4 306,192.4 308,190.6 310,189.0 312,187.6 314,186.5 316,185.6 318,185.0 320,184.6 322,184.5 324,184.6 326,184.9 328,185.5 330,186.3 332,187.3 334,188.6 336,190.1 338,191.9 340,193.9 342,196.1 344,198.5 346,201.2 348,204.0 350,207.1 352,210.4 354,213.9 356,217.6 358,221.4 360,225.4 362,229.7 364,234.0 366,238.6 368,243.3 370,248.1 372,253.1 374,258.2 376,263.4 378,268.7 380,274.1 382,279.6 384,285.2 386,290.9 388,296.6 390,302.4 392,308.2 394,314.1 396,320.0 398,325.9 400,331.8 402,337.7 404,343.6 406,349.5 408,355.3 410,361.1 412,366.8 414,372.5 416,378.1 418,383.6 420,389.0 422,394.3 424,399.5 426,404.6 428,409.6 430,414.4 432,419.1 434,423.6 436,428.0 438,432.2 440,436.2 442,440.1 444,443.8 446,447.2 448,450.5 450,453.6 452,456.4 454,459.1 456,461.5 458,463.7 460,465.7 462,467.4 464,469.0 466,470.2 468,471.3 470,472.1 472,472.6 474,473.0 476,473.1 478,472.9 480,472.5 482,471.8 484,471.0 486,469.8 488,468.5 490,466.9 492,465.1 494,463.0 496,460.7 498,458.2 500,455.5 502,452.6 504,449.4 506,446.1 508,442.6 510,438.8 512,434.9 514,430.8 516,426.6 518,422.1 520,417.5 522,412.8 524,407.9 526,402.9 528,397.8 530,392.6 532,387.2 534,381.8 536,376.2 538,370.6 540,364.9 542,359.2 544,353.4 546,347.5 548,341.6 550,335.7 552,329.8 554,323.9 556,318.0 558,312.1 560,306.3 562,300.5 564,294.7 566,289.0 568,283.3 570,277.8 572,272.3 574,266.9 576,261.6 578,256.4 580,251.4 582,246.5 584,241.7 586,237.0 588,232.5 590,228.2 592,224.1 594,220.1 596,216.3 598,212.7 600,209.3 602,206.1 604,203.1 606,200.3 608,197.7 610,195.3 612,193.2 614,191.3 616,189.6 618,188.1 620,186.9 622,186.0 624,185.2 626,184.7 628,184.5 630,184.5 632,184.7 634,185.2 636,185.9 638,186.9 640,188.1 642,189.5 644,191.2 646,193.1 648,195.2 650,197.5 652,200.1 654,202.9 656,205.9 658,209.1 660,212.5 662,216.1 664,219.8 666,223.8 668,228.0 670,232.3 672,236.7 674,241.4 676,246.1 678,251.1 680,256.1 682,261.3 684,266.5 686,271.9 688,277.4 690,283.0 692,288.6 694,294.3 696,300.1 698,305.9 700,311.8 702,317.6 704,323.5 706,329.5 708,335.4 710,341.3 712,347.1 714,353.0 716,358.8 718,364.5 720,370.2 722,375.9 724,381.4 726,386.9 728,392.2 730,397.5 732,402.6 734,407.6 736,412.5 738,417.2 740,421.8 742,426.3 744,430.6 746,434.7 748,438.6 750,442.3 752,445.9 754,449.2 756,452.4 758,455.3 760,458.1 762,460.6 764,462.9 766,464.9 768,466.8 770,468.4 772,469.8 774,470.9 776,471.8 778,472.5 780,472.9 782,473.0 784,473.0 786,472.7 788,472.1 790,471.3 792,470.3 794,469.0 796,467.5 798,465.8 800,463.8 802,461.7 804,459.2 806,456.6 808,453.8 810,450.7 812,447.5 814,444.0 816,440.3 818,436.5 820,432.5 822,428.3 824,423.9 826,419.4 828,414.7 830,409.9 832,405.0 834,399.9 836,394.7 838,389.4 840,383.9 842,378.4 844,372.9 846,367.2 848,361.5 850,355.7"/><path d="M84,340.1 86,341.4 88,343.5 90,346.2 92,349.5 94,353.3 96,357.3 98,361.7 100,366.2 102,370.9 104,375.7 106,380.6 108,385.5 110,390.4 112,395.3 114,400.2 116,405.0 118,409.8 120,414.4 122,419.0 124,423.4 126,427.8 128,431.9 130,436.0 132,439.9 134,443.6 136,447.2 138,450.6 140,453.8 142,456.8 144,459.6 146,462.3 148,464.7 150,466.9 152,468.9 154,470.7 156,472.3 158,473.6 160,474.8 162,475.7 164,476.3 166,476.8 168,477.0 170,477.0 172,476.7 174,476.3 176,475.5 178,474.6 180,473.5 182,472.1 184,470.5 186,468.6 188,466.6 190,464.4 192,461.9 194,459.2 196,456.4 198,453.3 200,450.0 202,446.6 204,443.0 206,439.2 208,435.2 210,431.1 212,426.9 214,422.4 216,417.9 218,413.2 220,408.4 222,403.5 224,398.4 226,393.3 228,388.1 230,382.8 232,377.4 234,372.0 236,366.5 238,360.9 240,355.4 242,349.8 244,344.2 246,338.5 248,332.9 250,327.3 252,321.7 254,316.2 256,310.7 258,305.2 260,299.8 262,294.4 264,289.2 266,284.0 268,278.9 270,273.9 272,269.0 274,264.3 276,259.7 278,255.2 280,250.8 282,246.6 284,242.6 286,238.7 288,235.0 290,231.4 292,228.1 294,224.9 296,221.9 298,219.1 300,216.6 302,214.2 304,212.0 306,210.1 308,208.3 310,206.8 312,205.6 314,204.5 316,203.7 318,203.1 320,202.7 322,202.5 324,202.6 326,202.9 328,203.5 330,204.3 332,205.3 334,206.5 336,207.9 338,209.6 340,211.5 342,213.6 344,215.9 346,218.4 348,221.2 350,224.1 352,227.2 354,230.5 356,234.0 358,237.7 360,241.5 362,245.5 364,249.7 366,254.0 368,258.5 370,263.1 372,267.8 374,272.6 376,277.6 378,282.6 380,287.8 382,293.0 384,298.4 386,303.8 388,309.2 390,314.7 392,320.3 394,325.8 396,331.4 398,337.1 400,342.7 402,348.3 404,353.9 406,359.5 408,365.0 410,370.5 412,376.0 414,381.4 416,386.7 418,391.9 420,397.1 422,402.1 424,407.1 426,411.9 428,416.7 430,421.2 432,425.7 434,430.0 436,434.2 438,438.2 440,442.0 442,445.7 444,449.2 446,452.5 448,455.6 450,458.5 452,461.2 454,463.7 456,466.0 458,468.1 460,470.0 462,471.7 464,473.1 466,474.3 468,475.3 470,476.1 472,476.6 474,476.9 476,477.0 478,476.9 480,476.5 482,475.9 484,475.0 486,473.9 488,472.7 490,471.1 492,469.4 494,467.4 496,465.3 498,462.9 500,460.3 502,457.5 504,454.5 506,451.4 508,448.0 510,444.5 512,440.7 514,436.8 516,432.8 518,428.6 520,424.2 522,419.7 524,415.1 526,410.3 528,405.4 530,400.5 532,395.4 534,390.2 536,384.9 538,379.6 540,374.2 542,368.7 544,363.2 546,357.6 548,352.0 550,346.4 552,340.8 554,335.2 556,329.6 558,324.0 560,318.4 562,312.9 564,307.4 566,301.9 568,296.6 570,291.3 572,286.1 574,280.9 576,275.9 578,271.0 580,266.2 582,261.5 584,256.9 586,252.5 588,248.3 590,244.2 592,240.2 594,236.4 596,232.8 598,229.4 600,226.1 602,223.1 604,220.2 606,217.6 608,215.1 610,212.9 612,210.8 614,209.0 616,207.4 618,206.0 620,204.9 622,204.0 624,203.3 626,202.8 628,202.6 630,202.6 632,202.8 634,203.2 636,203.9 638,204.8 640,206.0 642,207.3 644,208.9 646,210.7 648,212.7 650,215.0 652,217.4 654,220.0 656,222.9 658,225.9 660,229.2 662,232.6 664,236.2 666,240.0 668,243.9 670,248.0 672,252.3 674,256.7 676,261.2 678,265.9 680,270.7 682,275.6 684,280.6 686,285.7 688,290.9 690,296.2 692,301.6 694,307.0 696,312.5 698,318.0 700,323.6 702,329.2 704,334.8 706,340.4 708,346.1 710,351.7 712,357.3 714,362.8 716,368.3 718,373.8 720,379.2 722,384.6 724,389.8 726,395.0 728,400.1 730,405.1 732,410.0 734,414.8 736,419.4 738,423.9 740,428.3 742,432.5 744,436.6 746,440.5 748,444.2 750,447.8 752,451.2 754,454.3 756,457.3 758,460.1 760,462.7 762,465.1 764,467.3 766,469.3 768,471.0 770,472.6 772,473.9 774,475.0 776,475.8 778,476.4 780,476.8 782,477.0 784,476.9 786,476.7 788,476.1 790,475.4 792,474.4 794,473.2 796,471.8 798,470.1 800,468.3 802,466.2 804,463.9 806,461.4 808,458.7 810,455.8 812,452.7 814,449.4 816,445.9 818,442.2 820,438.4 822,434.4 824,430.3 826,426.0 828,421.5 830,417.0 832,412.2 834,407.4 836,402.5 838,397.4 840,392.3 842,387.0 844,381.7 846,376.3 848,370.9 850,365.4"/><path d="M84,379.5 86,380.8 88,383.0 90,385.9 92,389.3 94,393.2 96,397.4 98,401.9 100,406.6 102,411.5 104,416.4 106,421.5 108,426.6 110,431.7 112,436.7 114,441.8 116,446.8 118,451.7 120,456.5 122,461.3 124,465.9 126,470.3 128,474.7 130,478.9 132,482.9 134,486.8 136,490.5 138,494.0 140,497.3 142,500.4 144,503.4 146,506.1 148,508.6 150,510.9 152,513.0 154,514.8 156,516.5 158,517.9 160,519.0 162,520.0 164,520.7 166,521.1 168,521.3 170,521.3 172,521.1 174,520.6 176,519.8 178,518.9 180,517.7 182,516.2 184,514.6 186,512.7 188,510.6 190,508.2 192,505.7 194,502.9 196,500.0 198,496.8 200,493.4 202,489.9 204,486.1 206,482.2 208,478.1 210,473.8 212,469.4 214,464.8 216,460.1 218,455.3 220,450.3 222,445.2 224,440.0 226,434.6 228,429.2 230,423.7 232,418.2 234,412.5 236,406.9 238,401.1 240,395.4 242,389.6 244,383.7 246,377.9 248,372.1 250,366.3 252,360.5 254,354.8 256,349.0 258,343.4 260,337.8 262,332.2 264,326.8 266,321.4 268,316.1 270,311.0 272,305.9 274,301.0 276,296.2 278,291.6 280,287.0 282,282.7 284,278.5 286,274.5 288,270.6 290,267.0 292,263.5 294,260.2 296,257.1 298,254.2 300,251.6 302,249.1 304,246.9 306,244.8 308,243.1 310,241.5 312,240.2 314,239.1 316,238.2 318,237.6 320,237.2 322,237.0 324,237.1 326,237.4 328,238.0 330,238.8 332,239.8 334,241.1 336,242.6 338,244.3 340,246.3 342,248.5 344,250.9 346,253.5 348,256.3 350,259.4 352,262.6 354,266.0 356,269.6 358,273.4 360,277.4 362,281.6 364,285.9 366,290.3 368,295.0 370,299.7 372,304.6 374,309.6 376,314.8 378,320.0 380,325.4 382,330.8 384,336.3 386,341.9 388,347.5 390,353.2 392,359.0 394,364.8 396,370.6 398,376.4 400,382.2 402,388.0 404,393.8 406,399.6 408,405.4 410,411.1 412,416.7 414,422.3 416,427.8 418,433.2 420,438.6 422,443.8 424,448.9 426,453.9 428,458.8 430,463.6 432,468.2 434,472.7 436,477.0 438,481.1 440,485.1 442,488.9 444,492.5 446,495.9 448,499.1 450,502.2 452,505.0 454,507.6 456,510.0 458,512.2 460,514.1 462,515.8 464,517.3 466,518.6 468,519.6 470,520.4 472,521.0 474,521.3 476,521.4 478,521.2 480,520.8 482,520.2 484,519.3 486,518.2 488,516.8 490,515.3 492,513.5 494,511.5 496,509.2 498,506.7 500,504.1 502,501.2 504,498.1 506,494.8 508,491.3 510,487.6 512,483.8 514,479.7 516,475.5 518,471.2 520,466.7 522,462.0 524,457.2 526,452.3 528,447.2 530,442.1 532,436.8 534,431.4 536,426.0 538,420.4 540,414.8 542,409.1 544,403.4 546,397.7 548,391.9 550,386.1 552,380.3 554,374.4 556,368.6 558,362.8 560,357.1 562,351.3 564,345.6 566,340.0 568,334.4 570,329.0 572,323.6 574,318.2 576,313.0 578,307.9 580,303.0 582,298.1 584,293.4 586,288.8 588,284.4 590,280.2 592,276.1 594,272.1 596,268.4 598,264.8 600,261.5 602,258.3 604,255.4 606,252.6 608,250.1 610,247.7 612,245.6 614,243.7 616,242.1 618,240.7 620,239.5 622,238.5 624,237.8 626,237.3 628,237.1 630,237.1 632,237.3 634,237.8 636,238.5 638,239.4 640,240.6 642,242.0 644,243.6 646,245.5 648,247.6 650,249.9 652,252.4 654,255.2 656,258.1 658,261.3 660,264.6 662,268.2 664,271.9 666,275.8 668,279.9 670,284.1 672,288.5 674,293.1 676,297.8 678,302.6 680,307.6 682,312.7 684,317.9 686,323.2 688,328.6 690,334.1 692,339.6 694,345.3 696,351.0 698,356.7 700,362.5 702,368.2 704,374.1 706,379.9 708,385.7 710,391.5 712,397.3 714,403.1 716,408.8 718,414.4 720,420.1 722,425.6 724,431.1 726,436.4 728,441.7 730,446.9 732,452.0 734,456.9 736,461.7 738,466.4 740,470.9 742,475.3 744,479.5 746,483.5 748,487.4 750,491.1 752,494.6 754,497.9 756,501.0 758,503.9 760,506.6 762,509.1 764,511.3 766,513.4 768,515.2 770,516.8 772,518.1 774,519.2 776,520.1 778,520.8 780,521.2 782,521.4 784,521.3 786,521.0 788,520.4 790,519.7 792,518.7 794,517.4 796,515.9 798,514.2 800,512.3 802,510.1 804,507.8 806,505.2 808,502.4 810,499.3 812,496.1 814,492.7 816,489.1 818,485.3 820,481.4 822,477.2 824,473.0 826,468.5 828,463.9 830,459.1 832,454.3 834,449.3 836,444.1 838,438.9 840,433.6 842,428.1 844,422.6 846,417.1 848,411.4 850,405.7"/></g>
<g fill="none" stroke="#000" stroke-width="1" shape-rendering="crispEdges">
<path d="M469.5 513V530M461 521.5H478"/><rect x="465.5" y="517.5" width="8" height="8"/>
</g>
<g fill="none" stroke="#3c3cd6" stroke-width="1">
<path d="M473 524L503 553"/><path d="M651.7 565.2L618 727"/>
</g>
<rect x="593" y="728" width="120" height="28" rx="9" ry="9" fill="none" stroke="#3232c8" stroke-width="2.2"/>
</svg>
<div class="t" style="left:30.28px;top:9.84px;font-size:12px;line-height:12px;letter-spacing:-0.123px;">Waveform Viewer</div>
<div class="t" style="left:8.84px;top:35.84px;font-size:12px;line-height:12px;letter-spacing:-0.132px;"><u>F</u>ile</div>
<div class="t" style="left:42.82px;top:35.84px;font-size:12px;line-height:12px;letter-spacing:-0.146px;"><u>E</u>dit</div>
<div class="t" style="left:79.06px;top:35.84px;font-size:12px;line-height:12px;letter-spacing:-0.184px;">Vie<u>w</u></div>
<div class="t" style="left:119.10px;top:35.84px;font-size:12px;line-height:12px;letter-spacing:-0.048px;">SIMetrix Simu<u>l</u>ator</div>
<div class="t" style="left:231.58px;top:35.84px;font-size:12px;line-height:12px;letter-spacing:-0.274px;"><u>S</u>IMPLIS Simulator</div>
<div class="t" style="left:343.60px;top:35.84px;font-size:12px;line-height:12px;letter-spacing:-0.261px;"><u>C</u>ursors</div>
<div class="t" style="left:400.30px;top:35.84px;font-size:12px;line-height:12px;letter-spacing:0.171px;"><u>A</u>nnotate</div>
<div class="t" style="left:464.10px;top:35.84px;font-size:12px;line-height:12px;letter-spacing:-0.210px;">Cur<u>v</u>es</div>
<div class="t" style="left:517.28px;top:35.84px;font-size:12px;line-height:12px;letter-spacing:-0.973px;">A<u>x</u>es</div>
<div class="t" style="left:556.82px;top:35.84px;font-size:12px;line-height:12px;letter-spacing:-0.201px;"><u>M</u>easure</div>
<div class="t" style="left:617.36px;top:35.84px;font-size:12px;line-height:12px;letter-spacing:0.421px;"><u>P</u>lot</div>
<div class="t" style="left:655.08px;top:35.84px;font-size:12px;line-height:12px;letter-spacing:0.084px;"><u>M</u>onte Carlo</div>
<div class="t" style="left:768.78px;top:35.84px;font-size:12px;line-height:12px;letter-spacing:-0.729px;color:#1a1aff;">Waveform Viewer</div>
<div class="t" style="left:10.52px;top:86.84px;font-size:12px;line-height:12px;letter-spacing:0.295px;font-weight:bold;">tran2 (D:\jrw\Documents\SIMetrix\Examples-83\SIMetrix\General\amp.sxsch)</div>
<div class="t" style="left:56.60px;top:126.42px;font-size:12.5px;line-height:12.5px;letter-spacing:0.422px;">1.0</div>
<div class="t" style="left:57.30px;top:158.42px;font-size:12.5px;line-height:12.5px;letter-spacing:0.422px;">0.8</div>
<div class="t" style="left:57.30px;top:190.42px;font-size:12.5px;line-height:12.5px;letter-spacing:0.422px;">0.6</div>
<div class="t" style="left:57.30px;top:222.42px;font-size:12.5px;line-height:12.5px;letter-spacing:0.072px;">0.4</div>
<div class="t" style="left:57.30px;top:255.42px;font-size:12.5px;line-height:12.5px;letter-spacing:0.422px;">0.2</div>
<div class="t" style="left:57.30px;top:287.42px;font-size:12.5px;line-height:12.5px;letter-spacing:0.072px;">0.0</div>
<div class="t" style="left:51.80px;top:319.42px;font-size:12.5px;line-height:12.5px;letter-spacing:0.727px;">-0.2</div>
<div class="t" style="left:51.80px;top:352.42px;font-size:12.5px;line-height:12.5px;letter-spacing:0.494px;">-0.4</div>
<div class="t" style="left:51.80px;top:384.42px;font-size:12.5px;line-height:12.5px;letter-spacing:0.727px;">-0.6</div>
<div class="t" style="left:51.80px;top:416.42px;font-size:12.5px;line-height:12.5px;letter-spacing:0.727px;">-0.8</div>
<div class="t" style="left:51.80px;top:449.42px;font-size:12.5px;line-height:12.5px;letter-spacing:0.494px;">-1.0</div>
<div class="t" style="left:51.80px;top:481.42px;font-size:12.5px;line-height:12.5px;letter-spacing:0.727px;">-1.2</div>
<div class="t" style="left:51.80px;top:513.42px;font-size:12.5px;line-height:12.5px;letter-spacing:0.494px;">-1.4</div>
<div class="t" style="left:80.30px;top:525.42px;font-size:12.5px;line-height:12.5px;">0</div>
<div class="t" style="left:232.86px;top:525.42px;font-size:12.5px;line-height:12.5px;">1</div>
<div class="t" style="left:386.82px;top:525.42px;font-size:12.5px;line-height:12.5px;">2</div>
<div class="t" style="left:540.22px;top:525.42px;font-size:12.5px;line-height:12.5px;">3</div>
<div class="t" style="left:694.04px;top:525.42px;font-size:12.5px;line-height:12.5px;">4</div>
<div class="t" style="left:846.60px;top:525.42px;font-size:12.5px;line-height:12.5px;">5</div>
<div class="t" style="left:28.13px;top:316.22px;font-size:12.5px;line-height:12.5px;transform:rotate(-90deg);transform-origin:center center;">V</div>
<div class="t" style="left:82.80px;top:557.42px;font-size:12.5px;line-height:12.5px;letter-spacing:0.384px;">Time/uSecs</div>
<div class="t" style="left:788.08px;top:557.42px;font-size:12.5px;line-height:12.5px;letter-spacing:0.119px;">1uSecs/div</div>
<div class="t" style="left:511.62px;top:530.30px;font-size:15px;line-height:15px;letter-spacing:-0.089px;color:#4646d2;">Selection cursor on outlier.</div>
<div class="t" style="left:511.62px;top:549.30px;font-size:15px;line-height:15px;letter-spacing:-0.210px;color:#4646d2;">Originates from Run44</div>
<div class="t" style="left:14.36px;top:596.84px;font-size:12px;line-height:12px;letter-spacing:-0.170px;">Label</div>
<div class="t" style="left:53.28px;top:616.84px;font-size:12px;line-height:12px;letter-spacing:-0.254px;">VOUT (tran3)</div>
<div class="t" style="left:218.60px;top:596.84px;font-size:12px;line-height:12px;letter-spacing:-0.025px;">Legend</div>
<div class="t" style="left:444.84px;top:596.84px;font-size:12px;line-height:12px;letter-spacing:-0.104px;">Curve label</div>
<div class="t" style="left:539.84px;top:596.84px;font-size:12px;line-height:12px;letter-spacing:-0.017px;">Name</div>
<div class="t" style="left:580.82px;top:596.84px;font-size:12px;line-height:12px;letter-spacing:-0.275px;">Value</div>
<div class="t" style="left:463.80px;top:616.84px;font-size:12px;line-height:12px;letter-spacing:-0.188px;">VOUT (tran3)</div>
<div class="t" style="left:538.60px;top:616.84px;font-size:12px;line-height:12px;letter-spacing:-0.983px;">RMS</div>
<div class="t" style="left:11.08px;top:737.84px;font-size:12px;line-height:12px;letter-spacing:-0.485px;">X=2.52048u</div>
<div class="t" style="left:151.56px;top:737.84px;font-size:12px;line-height:12px;letter-spacing:-0.434px;">Y=-1.42393</div>
<div class="t" style="left:450.54px;top:737.84px;font-size:12px;line-height:12px;letter-spacing:-0.369px;">Group=tran4</div>
<div class="t" style="left:599.84px;top:737.34px;font-size:12px;line-height:12px;letter-spacing:-0.453px;">Run=44 (division=43)</div>
<div class="abs" style="left:1px;top:82px;width:1px;height:679px;background:#8a8a8a"></div>
<div class="abs" style="left:872px;top:82px;width:1px;height:679px;background:#8a8a8a"></div>
<div class="abs" style="left:1px;top:760px;width:872px;height:1px;background:#8a8a8a"></div>
<div class="abs" style="left:2px;top:103px;width:1px;height:657px;background:#fafafa"></div>
<div class="abs" style="left:871px;top:103px;width:1px;height:657px;background:#fafafa"></div>
<div class="abs" style="left:2px;top:759px;width:870px;height:1px;background:#fafafa"></div>
<div class="abs" style="left:0;top:0;width:1px;height:762px;background:#1883d7"></div>
<div class="abs" style="left:873px;top:0;width:1px;height:762px;background:#1883d7"></div>
<div class="abs" style="left:0;top:0;width:874px;height:1px;background:#1883d7"></div>
<div class="abs" style="left:0;top:761px;width:874px;height:1px;background:#1883d7"></div>
</body></html>
